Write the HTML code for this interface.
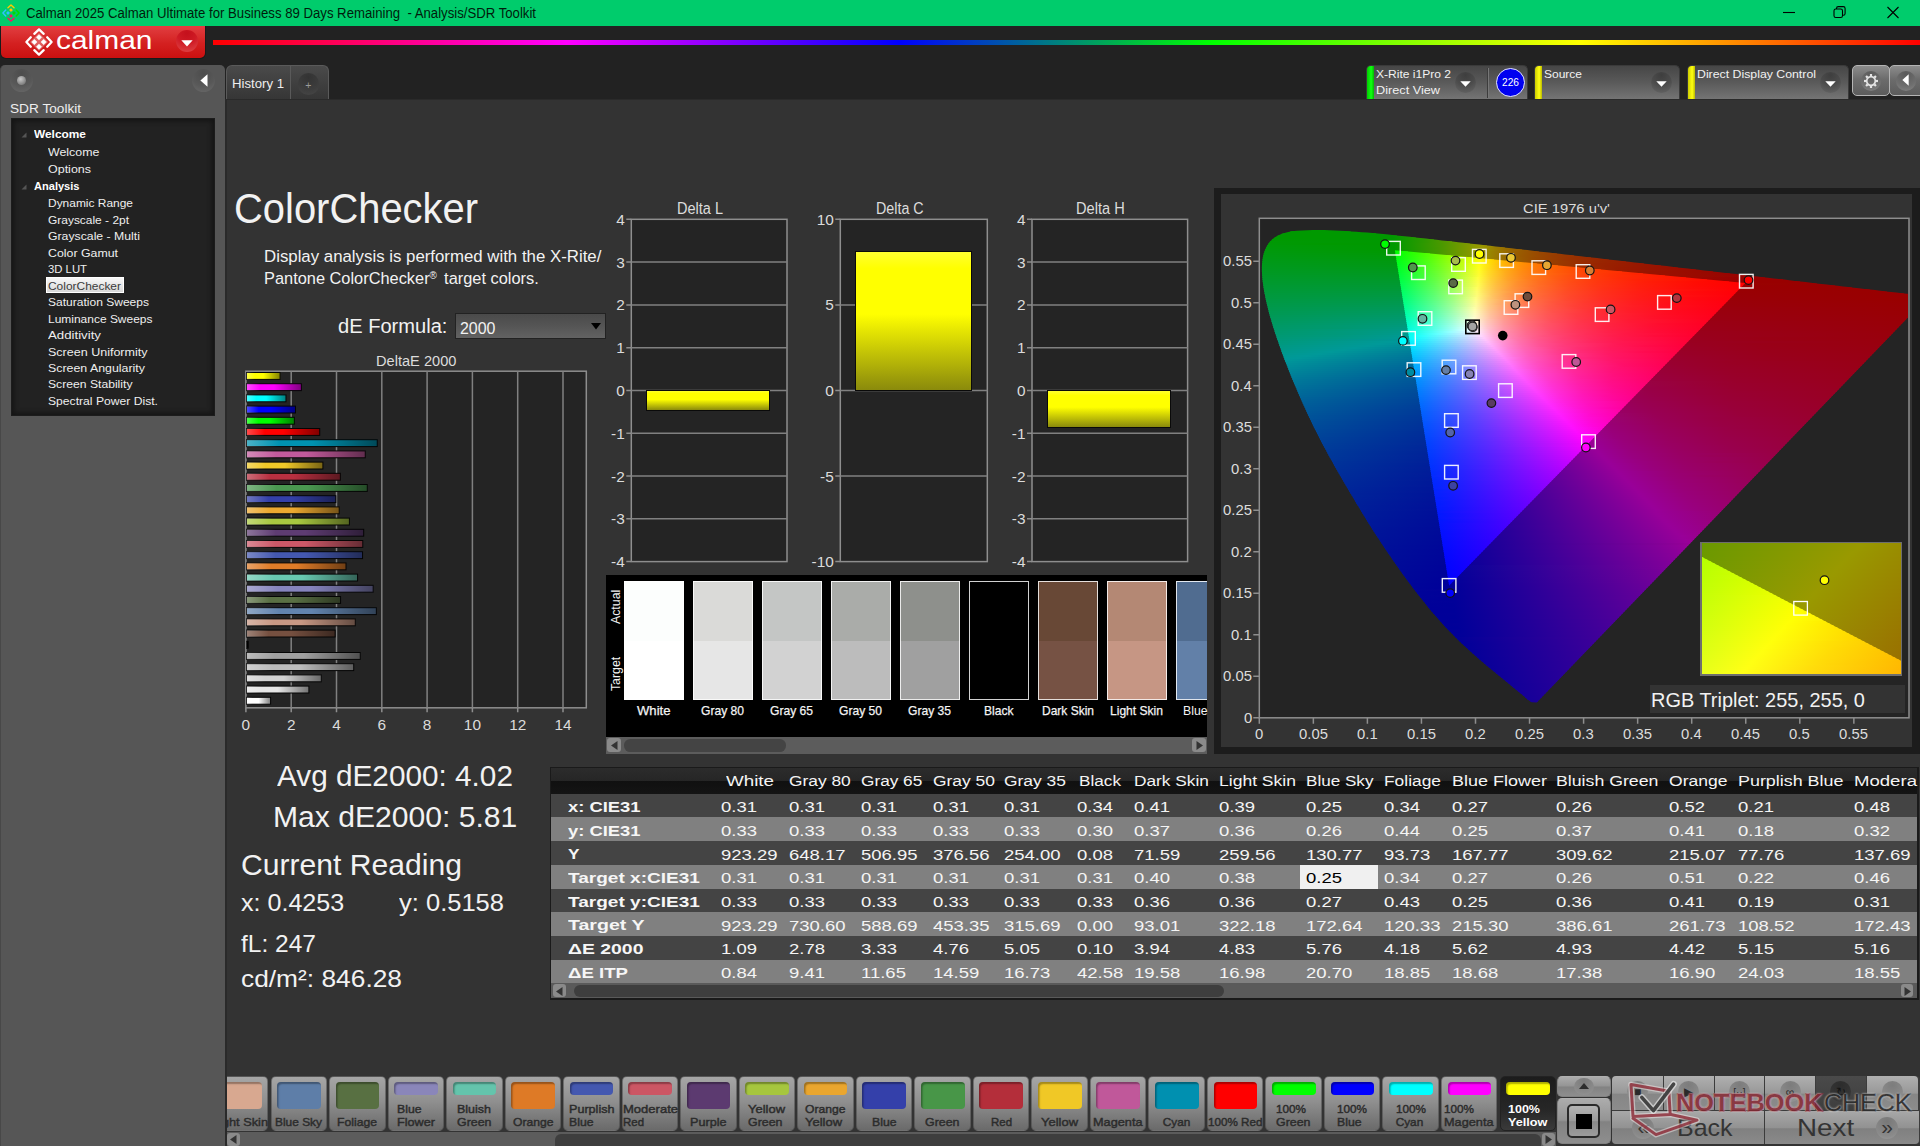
<!DOCTYPE html><html><head><meta charset="utf-8"><title>Calman ColorChecker</title><style>
*{box-sizing:border-box;margin:0;padding:0}
html,body{width:1920px;height:1146px;overflow:hidden;background:#333;}
body{position:relative;font-family:"Liberation Sans",sans-serif;color:#e6e6e6;}
.a{position:absolute}
.t{position:absolute;white-space:pre;transform-origin:0 50%;}
svg{position:absolute;overflow:visible}
#gm{position:absolute;overflow:hidden}
#gm i,#gi i{position:absolute;display:block;height:2.500px}
</style></head><body><div class="a " style="left:0px;top:0px;width:1920px;height:26px;background:#00cc6c"></div>
<svg style="left:-5.50px;top:-3.20px" width="32" height="32" viewBox="-16 -16 32 32"><g transform="scale(0.640)"><g transform="rotate(0)"><path d="M-4.700 -8.200L0 -12.600L4.700 -8.200" fill="none" stroke="#ffc800" stroke-width="2.300" stroke-linecap="round" stroke-linejoin="round"/><path d="M0 -7.400L2.750 -4.650L0 -1.900L-2.750 -4.650z" fill="#ffc800" stroke="#ffc800" stroke-width=".4" stroke-linejoin="round"/></g><g transform="rotate(90)"><path d="M-4.700 -8.200L0 -12.600L4.700 -8.200" fill="none" stroke="#00dc00" stroke-width="2.300" stroke-linecap="round" stroke-linejoin="round"/><path d="M0 -7.400L2.750 -4.650L0 -1.900L-2.750 -4.650z" fill="#00dc00" stroke="#00dc00" stroke-width=".4" stroke-linejoin="round"/></g><g transform="rotate(180)"><path d="M-4.700 -8.200L0 -12.600L4.700 -8.200" fill="none" stroke="#ff1060" stroke-width="2.300" stroke-linecap="round" stroke-linejoin="round"/><path d="M0 -7.400L2.750 -4.650L0 -1.900L-2.750 -4.650z" fill="#ff1060" stroke="#ff1060" stroke-width=".4" stroke-linejoin="round"/></g><g transform="rotate(270)"><path d="M-4.700 -8.200L0 -12.600L4.700 -8.200" fill="none" stroke="#30c0ff" stroke-width="2.300" stroke-linecap="round" stroke-linejoin="round"/><path d="M0 -7.400L2.750 -4.650L0 -1.900L-2.750 -4.650z" fill="#30c0ff" stroke="#30c0ff" stroke-width=".4" stroke-linejoin="round"/></g></g></svg>
<span class="t" style="left:26.00px;top:6.05px;font-size:14px;line-height:14px;color:#001c0c;transform:scaleX(0.9408);">Calman 2025 Calman Ultimate for Business 89 Days Remaining  - Analysis/SDR Toolkit</span>
<svg style="left:1780px;top:0" width="140" height="25" viewBox="0 0 140 25" fill="none" stroke="#000" stroke-width="1.1">
<path d="M3 12.5h12"/><rect x="54" y="9" width="8.5" height="8.5" rx="1.8"/><path d="M56.5 9v-.6a1.8 1.8 0 0 1 1.8-1.8h5a1.8 1.8 0 0 1 1.8 1.8v5a1.8 1.8 0 0 1-1.8 1.8h-.6"/>
<path d="M107.5 7l11 11M118.500 7l-11 11"/></svg>
<div class="a " style="left:0px;top:26px;width:1920px;height:73px;background:#222"></div>
<div class="a " style="left:213px;top:40px;width:1707px;height:5px;background:linear-gradient(90deg,#f00 0,#f0f 354px,#00f 686px,#0f0 999px,#ff0 1367px,#f00 1707px)"></div>
<div class="a " style="left:0px;top:26px;width:206px;height:33px;background:#1a1a1a;border-radius:0 0 6px 6px"></div>
<div class="a " style="left:1px;top:26px;width:204px;height:32px;background:linear-gradient(180deg,#ec363e 0,#e03c3e 1.500px,#d42020 55%,#cb1010 100%);border-radius:0 0 5px 5px"></div>
<svg style="left:22.50px;top:25.80px" width="32" height="32" viewBox="-16 -16 32 32"><g transform="scale(1.000)"><path d="M0 -9L9 0L0 9L-9 0z" fill="#fff" fill-opacity="0.28"/><g transform="rotate(0)"><path d="M-4.700 -8.200L0 -12.600L4.700 -8.200" fill="none" stroke="#fff" stroke-width="2.300" stroke-linecap="round" stroke-linejoin="round"/><path d="M0 -7.400L2.750 -4.650L0 -1.900L-2.750 -4.650z" fill="#fff" stroke="#fff" stroke-width=".4" stroke-linejoin="round"/></g><g transform="rotate(90)"><path d="M-4.700 -8.200L0 -12.600L4.700 -8.200" fill="none" stroke="#fff" stroke-width="2.300" stroke-linecap="round" stroke-linejoin="round"/><path d="M0 -7.400L2.750 -4.650L0 -1.900L-2.750 -4.650z" fill="#fff" stroke="#fff" stroke-width=".4" stroke-linejoin="round"/></g><g transform="rotate(180)"><path d="M-4.700 -8.200L0 -12.600L4.700 -8.200" fill="none" stroke="#fff" stroke-width="2.300" stroke-linecap="round" stroke-linejoin="round"/><path d="M0 -7.400L2.750 -4.650L0 -1.900L-2.750 -4.650z" fill="#fff" stroke="#fff" stroke-width=".4" stroke-linejoin="round"/></g><g transform="rotate(270)"><path d="M-4.700 -8.200L0 -12.600L4.700 -8.200" fill="none" stroke="#fff" stroke-width="2.300" stroke-linecap="round" stroke-linejoin="round"/><path d="M0 -7.400L2.750 -4.650L0 -1.900L-2.750 -4.650z" fill="#fff" stroke="#fff" stroke-width=".4" stroke-linejoin="round"/></g></g></svg>
<span class="t" style="left:56.00px;top:26.89px;font-size:26px;line-height:26px;color:#fff;transform:scaleX(1.1513);">calman</span>
<div class="a " style="left:175.5px;top:30px;width:22px;height:22px;border-radius:50%;background:radial-gradient(circle at 50% 15%,#c4101c 0,#cf1a24 45%,#e04a4a 100%)"></div>
<svg style="left:181px;top:39.500px" width="12" height="7" viewBox="0 0 12 7"><path d="M0.3 0.3h11.400L6 6.500z" fill="#fff"/></svg>
<div class="a " style="left:0px;top:65px;width:224.5px;height:1081px;background:#565656;border-radius:5px 5px 0 0;border-left:1.500px solid #484848"></div>
<div class="a " style="left:9.8px;top:69.1px;width:23px;height:23px;border-radius:50%;background:radial-gradient(circle at 50% 20%,#4c4c4c 0,#585858 55%,#6a6a6a 100%)"></div>
<div class="a " style="left:192px;top:69.1px;width:23px;height:23px;border-radius:50%;background:radial-gradient(circle at 50% 20%,#4c4c4c 0,#585858 55%,#6a6a6a 100%)"></div>
<div class="a " style="left:16.8px;top:75.7px;width:9px;height:9px;border-radius:50%;background:radial-gradient(circle at 40% 35%,#c8c8c8 0,#8a8a8a 60%,#666 100%)"></div>
<svg style="left:199.500px;top:74px" width="8" height="13" viewBox="0 0 8 13"><path d="M7.500 0.300v12.400L0.400 6.500z" fill="#fff"/></svg>
<span class="t" style="left:10.30px;top:101.63px;font-size:13.2px;line-height:13.2px;color:#eee;transform:scaleX(1.0362);">SDR Toolkit</span>
<div class="a " style="left:10.5px;top:118px;width:204.5px;height:297.5px;background:#222;box-shadow:inset 0 0 5px 2px #141414;border:1px solid #1c1c1c"></div>
<span class="t" style="left:33.80px;top:129.31px;font-size:11.8px;line-height:11.8px;color:#fff;font-weight:700;transform:scaleX(1.0079);">Welcome</span>
<svg style="left:20.500px;top:132.3px" width="6" height="6" viewBox="0 0 6 6"><path d="M5.500 0.500v5h-5z" fill="#555"/></svg>
<span class="t" style="left:47.70px;top:147.31px;font-size:11.8px;line-height:11.8px;color:#eee;transform:scaleX(1.0497);">Welcome</span>
<span class="t" style="left:47.70px;top:163.81px;font-size:11.8px;line-height:11.8px;color:#eee;transform:scaleX(1.0574);">Options</span>
<span class="t" style="left:33.80px;top:180.71px;font-size:11.8px;line-height:11.8px;color:#fff;font-weight:700;transform:scaleX(0.9374);">Analysis</span>
<svg style="left:20.500px;top:183.7px" width="6" height="6" viewBox="0 0 6 6"><path d="M5.500 0.500v5h-5z" fill="#555"/></svg>
<span class="t" style="left:47.70px;top:198.31px;font-size:11.8px;line-height:11.8px;color:#eee;transform:scaleX(1.0125);">Dynamic Range</span>
<span class="t" style="left:47.70px;top:214.81px;font-size:11.8px;line-height:11.8px;color:#eee;transform:scaleX(1.0124);">Grayscale - 2pt</span>
<span class="t" style="left:47.70px;top:231.31px;font-size:11.8px;line-height:11.8px;color:#eee;transform:scaleX(1.0393);">Grayscale - Multi</span>
<span class="t" style="left:47.70px;top:247.81px;font-size:11.8px;line-height:11.8px;color:#eee;transform:scaleX(1.0465);">Color Gamut</span>
<span class="t" style="left:47.70px;top:264.31px;font-size:11.8px;line-height:11.8px;color:#eee;transform:scaleX(0.9593);">3D LUT</span>
<div class="a " style="left:46.2px;top:277.2px;width:77.6px;height:16.2px;background:linear-gradient(180deg,#f8f8f8,#d8d8d8);border:1px solid #fff"></div>
<span class="t" style="left:47.70px;top:280.81px;font-size:11.8px;line-height:11.8px;color:#3c3c3c;transform:scaleX(1.0119);">ColorChecker</span>
<span class="t" style="left:47.70px;top:297.31px;font-size:11.8px;line-height:11.8px;color:#eee;transform:scaleX(1.0197);">Saturation Sweeps</span>
<span class="t" style="left:47.70px;top:313.81px;font-size:11.8px;line-height:11.8px;color:#eee;transform:scaleX(1.0147);">Luminance Sweeps</span>
<span class="t" style="left:47.70px;top:330.31px;font-size:11.8px;line-height:11.8px;color:#eee;transform:scaleX(1.1224);">Additivity</span>
<span class="t" style="left:47.70px;top:346.81px;font-size:11.8px;line-height:11.8px;color:#eee;transform:scaleX(1.0611);">Screen Uniformity</span>
<span class="t" style="left:47.70px;top:362.61px;font-size:11.8px;line-height:11.8px;color:#eee;transform:scaleX(1.0488);">Screen Angularity</span>
<span class="t" style="left:47.70px;top:379.01px;font-size:11.8px;line-height:11.8px;color:#eee;transform:scaleX(1.0307);">Screen Stability</span>
<span class="t" style="left:47.70px;top:395.51px;font-size:11.8px;line-height:11.8px;color:#eee;transform:scaleX(1.0291);">Spectral Power Dist.</span>
<div class="a " style="left:225.5px;top:65px;width:103px;height:34px;background:linear-gradient(180deg,#4a4a4a 0,#363636 100%);border-radius:6px 6px 0 0;border:1px solid #5a5a5a;border-bottom:none"></div>
<div class="a " style="left:290px;top:66px;width:1px;height:33px;background:#5a5a5a"></div>
<span class="t" style="left:232.30px;top:77.09px;font-size:13.6px;line-height:13.6px;color:#eee;transform:scaleX(0.9691);">History 1</span>
<div class="a " style="left:297.6px;top:73.4px;width:21.2px;height:21.2px;border-radius:50%;background:radial-gradient(circle at 50% 20%,#333 0,#3d3d3d 60%,#484848 100%)"></div>
<span class="t" style="left:305.23px;top:79.71px;font-size:10.5px;line-height:10.5px;color:#9a9a9a;">+</span>
<div class="a " style="left:225px;top:99px;width:1695px;height:1047px;background:#333;border-left:2px solid #2a2a2a;border-top:1px solid #2a2a2a"></div>
<div class="a " style="left:1366px;top:65px;width:161.5px;height:34px;background:linear-gradient(180deg,#464646 0,#5a5a5a 50%,#747474 100%);border-radius:5px 5px 0 0;border:1px solid #3a3a3a;border-bottom:none;overflow:hidden"><div class="a" style="left:0;top:0;width:6.500px;height:34px;background:linear-gradient(90deg,#0c0,#1f1 60%,#0b0)"></div></div>
<div class="a " style="left:1534px;top:65px;width:146px;height:34px;background:linear-gradient(180deg,#464646 0,#5a5a5a 50%,#747474 100%);border-radius:5px 5px 0 0;border:1px solid #3a3a3a;border-bottom:none;overflow:hidden"><div class="a" style="left:0;top:0;width:6.500px;height:34px;background:linear-gradient(90deg,#cc0,#ff1 60%,#bb0)"></div></div>
<div class="a " style="left:1687px;top:65px;width:161.5px;height:34px;background:linear-gradient(180deg,#464646 0,#5a5a5a 50%,#747474 100%);border-radius:5px 5px 0 0;border:1px solid #3a3a3a;border-bottom:none;overflow:hidden"><div class="a" style="left:0;top:0;width:6.500px;height:34px;background:linear-gradient(90deg,#cc0,#ff1 60%,#bb0)"></div></div>
<span class="t" style="left:1375.50px;top:68.71px;font-size:11.8px;line-height:11.8px;color:#f2f2f2;transform:scaleX(1.0211);">X-Rite i1Pro 2</span>
<span class="t" style="left:1375.50px;top:85.01px;font-size:11.8px;line-height:11.8px;color:#f2f2f2;transform:scaleX(1.0764);">Direct View</span>
<span class="t" style="left:1543.50px;top:68.71px;font-size:11.8px;line-height:11.8px;color:#f2f2f2;transform:scaleX(1.0163);">Source</span>
<span class="t" style="left:1696.50px;top:68.71px;font-size:11.8px;line-height:11.8px;color:#f2f2f2;transform:scaleX(1.0429);">Direct Display Control</span>
<div class="a " style="left:1454.5px;top:72px;width:21px;height:21px;border-radius:50%;background:radial-gradient(circle at 50% 15%,#3e3e3e 0,#4c4c4c 50%,#686868 100%)"></div>
<svg style="left:1459.5px;top:80.5px" width="11" height="6" viewBox="0 0 11 6"><path d="M0.300 0.200h10.400L5.500 5.800z" fill="#fff"/></svg>
<div class="a " style="left:1651px;top:72px;width:21px;height:21px;border-radius:50%;background:radial-gradient(circle at 50% 15%,#3e3e3e 0,#4c4c4c 50%,#686868 100%)"></div>
<svg style="left:1656px;top:80.5px" width="11" height="6" viewBox="0 0 11 6"><path d="M0.300 0.200h10.400L5.500 5.800z" fill="#fff"/></svg>
<div class="a " style="left:1819.5px;top:72px;width:21px;height:21px;border-radius:50%;background:radial-gradient(circle at 50% 15%,#3e3e3e 0,#4c4c4c 50%,#686868 100%)"></div>
<svg style="left:1824.5px;top:80.5px" width="11" height="6" viewBox="0 0 11 6"><path d="M0.300 0.200h10.400L5.500 5.800z" fill="#fff"/></svg>
<div class="a " style="left:1486.5px;top:68px;width:1px;height:30px;background:#3c3c3c"></div>
<div class="a " style="left:1487.5px;top:68px;width:1px;height:30px;background:#777"></div>
<div class="a " style="left:1495.5px;top:67.5px;width:29.5px;height:29.5px;border-radius:50%;background:#0000f0;border:1.500px solid #e8e8ff"></div>
<span class="t" style="left:1501.70px;top:77.31px;font-size:10.5px;line-height:10.5px;color:#fff;transform:scaleX(0.9704);">226</span>
<div class="a " style="left:1851.5px;top:65px;width:38px;height:31px;background:linear-gradient(180deg,#8c8c8c 0,#6c6c6c 45%,#5c5c5c 100%);border-radius:5px;border:1.500px solid #b4b4b4"></div>
<div class="a " style="left:1889px;top:65px;width:38px;height:31px;background:linear-gradient(180deg,#8c8c8c 0,#6c6c6c 45%,#5c5c5c 100%);border-radius:5px;border:1.500px solid #b4b4b4"></div>
<div class="a " style="left:1860.5px;top:70.5px;width:20px;height:20px;border-radius:50%;background:radial-gradient(circle at 50% 15%,#5a5a5a,#6e6e6e 60%,#858585)"></div>
<div class="a " style="left:1895.5px;top:70.5px;width:20px;height:20px;border-radius:50%;background:radial-gradient(circle at 50% 15%,#5a5a5a,#6e6e6e 60%,#858585)"></div>
<svg style="left:1862.500px;top:72.500px" width="16" height="16" viewBox="-8 -8 16 16"><g fill="none" stroke="#e4e4e4"><circle r="4.300" stroke-width="1.700"/><g stroke-width="2.200"><path d="M0 -4.800V-7" transform="rotate(0)"/><path d="M0 -4.800V-7" transform="rotate(45)"/><path d="M0 -4.800V-7" transform="rotate(90)"/><path d="M0 -4.800V-7" transform="rotate(135)"/><path d="M0 -4.800V-7" transform="rotate(180)"/><path d="M0 -4.800V-7" transform="rotate(225)"/><path d="M0 -4.800V-7" transform="rotate(270)"/><path d="M0 -4.800V-7" transform="rotate(315)"/></g></g></svg>
<svg style="left:1902px;top:74px" width="7" height="12" viewBox="0 0 7 12"><path d="M6.700 0.300v11.400L0.300 6z" fill="#fff"/></svg>
<span class="t" style="left:233.50px;top:188.25px;font-size:42px;line-height:42px;color:#f2f2f2;transform:scaleX(0.9503);">ColorChecker</span>
<span class="t" style="left:263.60px;top:247.77px;font-size:17.4px;line-height:17.4px;color:#f2f2f2;transform:scaleX(0.9668);">Display analysis is performed with the X-Rite/</span>
<span class="t" style="left:263.60px;top:270.27px;font-size:17.4px;line-height:17.4px;color:#f2f2f2;transform:scaleX(0.9413);">Pantone ColorChecker<span style="font-size:10.500px;position:relative;top:-5.500px;letter-spacing:2.800px">®</span> target colors.</span>
<span class="t" style="left:337.50px;top:316.88px;font-size:19.4px;line-height:19.4px;color:#f2f2f2;transform:scaleX(1.0363);">dE Formula:</span>
<div class="a " style="left:455px;top:312.6px;width:150.5px;height:26px;background:linear-gradient(180deg,#4a4a4a 0,#555 50%,#626262 100%);border:1px solid #222"></div>
<span class="t" style="left:460.00px;top:320.12px;font-size:16.4px;line-height:16.4px;color:#f2f2f2;transform:scaleX(0.9730);">2000</span>
<svg style="left:590.500px;top:323.200px" width="10" height="6.500" viewBox="0 0 10 6.500"><path d="M0 0h10L5 6.500z" fill="#000"/></svg>
<span class="t" style="left:376.25px;top:353.26px;font-size:15.4px;line-height:15.4px;color:#dcdcdc;transform:scaleX(0.9497);">DeltaE 2000</span>
<svg style="left:0;top:0" width="1920" height="1146" viewBox="0 0 1920 1146" fill="none" stroke="#8e8e8e" stroke-width="1.5"><rect x="245.90" y="371.20" width="340.40" height="336.60" fill="#242424"/><path d="M291.20 371.20V707.80M336.50 371.20V707.80M381.80 371.20V707.80M427.10 371.20V707.80M472.40 371.20V707.80M517.70 371.20V707.80M563.00 371.20V707.80" stroke="#808080"/><path d="M245.90 707.80v4.50M291.20 707.80v4.50M336.50 707.80v4.50M381.80 707.80v4.50M427.10 707.80v4.50M472.40 707.80v4.50M517.70 707.80v4.50M563.00 707.80v4.50"/></svg>
<span class="t" style="left:241.62px;top:717.46px;font-size:15.4px;line-height:15.4px;color:#dcdcdc;">0</span>
<span class="t" style="left:286.92px;top:717.46px;font-size:15.4px;line-height:15.4px;color:#dcdcdc;">2</span>
<span class="t" style="left:332.22px;top:717.46px;font-size:15.4px;line-height:15.4px;color:#dcdcdc;">4</span>
<span class="t" style="left:377.52px;top:717.46px;font-size:15.4px;line-height:15.4px;color:#dcdcdc;">6</span>
<span class="t" style="left:422.82px;top:717.46px;font-size:15.4px;line-height:15.4px;color:#dcdcdc;">8</span>
<span class="t" style="left:463.83px;top:717.46px;font-size:15.4px;line-height:15.4px;color:#dcdcdc;">10</span>
<span class="t" style="left:509.13px;top:717.46px;font-size:15.4px;line-height:15.4px;color:#dcdcdc;">12</span>
<span class="t" style="left:554.43px;top:717.46px;font-size:15.4px;line-height:15.4px;color:#dcdcdc;">14</span>
<svg style="left:0;top:0" width="1920" height="1146" viewBox="0 0 1920 1146"><defs><linearGradient id="bg" x1="0" x2="1" y1="0" y2="0"><stop offset="0" stop-color="#fff" stop-opacity=".3"/><stop offset=".25" stop-color="#fff" stop-opacity="0"/><stop offset=".5" stop-color="#000" stop-opacity="0"/><stop offset="1" stop-color="#000" stop-opacity=".5"/></linearGradient></defs><rect x="246.50" y="372.50" width="33.60" height="6.900" fill="#ffff00" stroke="#050505" stroke-width="1"/><rect x="246.50" y="372.50" width="33.60" height="6.900" fill="url(#bg)"/><rect x="246.50" y="383.70" width="54.89" height="6.900" fill="#ff00ff" stroke="#050505" stroke-width="1"/><rect x="246.50" y="383.70" width="54.89" height="6.900" fill="url(#bg)"/><rect x="246.50" y="394.90" width="39.49" height="6.900" fill="#00ffff" stroke="#050505" stroke-width="1"/><rect x="246.50" y="394.90" width="39.49" height="6.900" fill="url(#bg)"/><rect x="246.50" y="406.10" width="49.00" height="6.900" fill="#0000ff" stroke="#050505" stroke-width="1"/><rect x="246.50" y="406.10" width="49.00" height="6.900" fill="url(#bg)"/><rect x="246.50" y="417.30" width="47.87" height="6.900" fill="#00ff00" stroke="#050505" stroke-width="1"/><rect x="246.50" y="417.30" width="47.87" height="6.900" fill="url(#bg)"/><rect x="246.50" y="428.50" width="73.24" height="6.900" fill="#ff0000" stroke="#050505" stroke-width="1"/><rect x="246.50" y="428.50" width="73.24" height="6.900" fill="url(#bg)"/><rect x="246.50" y="439.70" width="130.77" height="6.900" fill="#0092b0" stroke="#050505" stroke-width="1"/><rect x="246.50" y="439.70" width="130.77" height="6.900" fill="url(#bg)"/><rect x="246.50" y="450.90" width="118.77" height="6.900" fill="#c25a9c" stroke="#050505" stroke-width="1"/><rect x="246.50" y="450.90" width="118.77" height="6.900" fill="url(#bg)"/><rect x="246.50" y="462.10" width="76.41" height="6.900" fill="#f0c828" stroke="#050505" stroke-width="1"/><rect x="246.50" y="462.10" width="76.41" height="6.900" fill="url(#bg)"/><rect x="246.50" y="473.30" width="93.85" height="6.900" fill="#b83040" stroke="#050505" stroke-width="1"/><rect x="246.50" y="473.30" width="93.85" height="6.900" fill="url(#bg)"/><rect x="246.50" y="484.50" width="120.80" height="6.900" fill="#4a9850" stroke="#050505" stroke-width="1"/><rect x="246.50" y="484.50" width="120.80" height="6.900" fill="url(#bg)"/><rect x="246.50" y="495.70" width="89.32" height="6.900" fill="#3440a8" stroke="#050505" stroke-width="1"/><rect x="246.50" y="495.70" width="89.32" height="6.900" fill="url(#bg)"/><rect x="246.50" y="506.90" width="92.72" height="6.900" fill="#eca830" stroke="#050505" stroke-width="1"/><rect x="246.50" y="506.90" width="92.72" height="6.900" fill="url(#bg)"/><rect x="246.50" y="518.10" width="102.91" height="6.900" fill="#a8c840" stroke="#050505" stroke-width="1"/><rect x="246.50" y="518.10" width="102.91" height="6.900" fill="url(#bg)"/><rect x="246.50" y="529.30" width="117.18" height="6.900" fill="#5e3c72" stroke="#050505" stroke-width="1"/><rect x="246.50" y="529.30" width="117.18" height="6.900" fill="url(#bg)"/><rect x="246.50" y="540.50" width="116.27" height="6.900" fill="#cc5868" stroke="#050505" stroke-width="1"/><rect x="246.50" y="540.50" width="116.27" height="6.900" fill="url(#bg)"/><rect x="246.50" y="551.70" width="116.05" height="6.900" fill="#4458b0" stroke="#050505" stroke-width="1"/><rect x="246.50" y="551.70" width="116.05" height="6.900" fill="url(#bg)"/><rect x="246.50" y="562.90" width="99.51" height="6.900" fill="#e07c28" stroke="#050505" stroke-width="1"/><rect x="246.50" y="562.90" width="99.51" height="6.900" fill="url(#bg)"/><rect x="246.50" y="574.10" width="111.06" height="6.900" fill="#68c8b0" stroke="#050505" stroke-width="1"/><rect x="246.50" y="574.10" width="111.06" height="6.900" fill="url(#bg)"/><rect x="246.50" y="585.30" width="126.69" height="6.900" fill="#8684be" stroke="#050505" stroke-width="1"/><rect x="246.50" y="585.30" width="126.69" height="6.900" fill="url(#bg)"/><rect x="246.50" y="596.50" width="94.08" height="6.900" fill="#5a7044" stroke="#050505" stroke-width="1"/><rect x="246.50" y="596.50" width="94.08" height="6.900" fill="url(#bg)"/><rect x="246.50" y="607.70" width="129.86" height="6.900" fill="#6284ae" stroke="#050505" stroke-width="1"/><rect x="246.50" y="607.70" width="129.86" height="6.900" fill="url(#bg)"/><rect x="246.50" y="618.90" width="108.80" height="6.900" fill="#c89884" stroke="#050505" stroke-width="1"/><rect x="246.50" y="618.90" width="108.80" height="6.900" fill="url(#bg)"/><rect x="246.50" y="630.10" width="88.64" height="6.900" fill="#765040" stroke="#050505" stroke-width="1"/><rect x="246.50" y="630.10" width="88.64" height="6.900" fill="url(#bg)"/><rect x="246.50" y="641.30" width="1.67" height="6.900" fill="#000000" stroke="#050505" stroke-width="1"/><rect x="246.50" y="641.30" width="1.67" height="6.900" fill="url(#bg)"/><rect x="246.50" y="652.50" width="113.78" height="6.900" fill="#a0a0a0" stroke="#050505" stroke-width="1"/><rect x="246.50" y="652.50" width="113.78" height="6.900" fill="url(#bg)"/><rect x="246.50" y="663.70" width="107.21" height="6.900" fill="#bcbcbc" stroke="#050505" stroke-width="1"/><rect x="246.50" y="663.70" width="107.21" height="6.900" fill="url(#bg)"/><rect x="246.50" y="674.90" width="74.82" height="6.900" fill="#d2d2d2" stroke="#050505" stroke-width="1"/><rect x="246.50" y="674.90" width="74.82" height="6.900" fill="url(#bg)"/><rect x="246.50" y="686.10" width="62.37" height="6.900" fill="#e6e6e6" stroke="#050505" stroke-width="1"/><rect x="246.50" y="686.10" width="62.37" height="6.900" fill="url(#bg)"/><rect x="246.50" y="697.30" width="24.09" height="6.900" fill="#ffffff" stroke="#050505" stroke-width="1"/><rect x="246.50" y="697.30" width="24.09" height="6.900" fill="url(#bg)"/></svg>
<span class="t" style="left:676.60px;top:201.09px;font-size:15.6px;line-height:15.6px;color:#dcdcdc;transform:scaleX(0.9306);">Delta L</span>
<svg style="left:0;top:0" width="1920" height="1146" viewBox="0 0 1920 1146" fill="none" stroke="#8e8e8e" stroke-width="1.5"><rect x="631.30" y="219.30" width="155.70" height="342.30" fill="#242424"/><path d="M631.30 262.09H787.00M631.30 304.88H787.00M631.30 347.66H787.00M631.30 390.45H787.00M631.30 433.24H787.00M631.30 476.03H787.00M631.30 518.81H787.00" stroke="#808080"/><path d="M631.30 219.30h-5.00M631.30 262.09h-5.00M631.30 304.88h-5.00M631.30 347.66h-5.00M631.30 390.45h-5.00M631.30 433.24h-5.00M631.30 476.03h-5.00M631.30 518.81h-5.00M631.30 561.60h-5.00"/></svg>
<span class="t" style="left:616.23px;top:211.86px;font-size:15.4px;line-height:15.4px;color:#dcdcdc;">4</span>
<span class="t" style="left:616.23px;top:254.65px;font-size:15.4px;line-height:15.4px;color:#dcdcdc;">3</span>
<span class="t" style="left:616.23px;top:297.44px;font-size:15.4px;line-height:15.4px;color:#dcdcdc;">2</span>
<span class="t" style="left:616.23px;top:340.23px;font-size:15.4px;line-height:15.4px;color:#dcdcdc;">1</span>
<span class="t" style="left:616.23px;top:383.01px;font-size:15.4px;line-height:15.4px;color:#dcdcdc;">0</span>
<span class="t" style="left:611.11px;top:425.80px;font-size:15.4px;line-height:15.4px;color:#dcdcdc;">-1</span>
<span class="t" style="left:611.11px;top:468.59px;font-size:15.4px;line-height:15.4px;color:#dcdcdc;">-2</span>
<span class="t" style="left:611.11px;top:511.38px;font-size:15.4px;line-height:15.4px;color:#dcdcdc;">-3</span>
<span class="t" style="left:611.11px;top:554.16px;font-size:15.4px;line-height:15.4px;color:#dcdcdc;">-4</span>
<div class="a " style="left:646px;top:390.2px;width:123.8px;height:20.8px;background:linear-gradient(180deg,#ffff30 0,#ffff00 12%,#ffff00 45%,#8a8a0c 100%);border:1.200px solid #0a0a0a"></div>
<span class="t" style="left:876.35px;top:201.09px;font-size:15.6px;line-height:15.6px;color:#dcdcdc;transform:scaleX(0.9170);">Delta C</span>
<svg style="left:0;top:0" width="1920" height="1146" viewBox="0 0 1920 1146" fill="none" stroke="#8e8e8e" stroke-width="1.5"><rect x="840.30" y="219.30" width="147.00" height="342.30" fill="#242424"/><path d="M840.30 304.88H987.30M840.30 390.45H987.30M840.30 476.03H987.30" stroke="#808080"/><path d="M840.30 219.30h-5.00M840.30 304.88h-5.00M840.30 390.45h-5.00M840.30 476.03h-5.00M840.30 561.60h-5.00"/></svg>
<span class="t" style="left:816.67px;top:211.86px;font-size:15.4px;line-height:15.4px;color:#dcdcdc;">10</span>
<span class="t" style="left:825.23px;top:297.44px;font-size:15.4px;line-height:15.4px;color:#dcdcdc;">5</span>
<span class="t" style="left:825.23px;top:383.01px;font-size:15.4px;line-height:15.4px;color:#dcdcdc;">0</span>
<span class="t" style="left:820.11px;top:468.59px;font-size:15.4px;line-height:15.4px;color:#dcdcdc;">-5</span>
<span class="t" style="left:811.54px;top:554.16px;font-size:15.4px;line-height:15.4px;color:#dcdcdc;">-10</span>
<div class="a " style="left:855.2px;top:250.8px;width:116.8px;height:140.5px;background:linear-gradient(180deg,#ffff30 0,#ffff00 12%,#ffff00 45%,#8a8a0c 100%);border:1.200px solid #0a0a0a"></div>
<span class="t" style="left:1075.55px;top:201.09px;font-size:15.6px;line-height:15.6px;color:#dcdcdc;transform:scaleX(0.9362);">Delta H</span>
<svg style="left:0;top:0" width="1920" height="1146" viewBox="0 0 1920 1146" fill="none" stroke="#8e8e8e" stroke-width="1.5"><rect x="1032.00" y="219.30" width="155.60" height="342.30" fill="#242424"/><path d="M1032.00 262.09H1187.60M1032.00 304.88H1187.60M1032.00 347.66H1187.60M1032.00 390.45H1187.60M1032.00 433.24H1187.60M1032.00 476.03H1187.60M1032.00 518.81H1187.60" stroke="#808080"/><path d="M1032.00 219.30h-5.00M1032.00 262.09h-5.00M1032.00 304.88h-5.00M1032.00 347.66h-5.00M1032.00 390.45h-5.00M1032.00 433.24h-5.00M1032.00 476.03h-5.00M1032.00 518.81h-5.00M1032.00 561.60h-5.00"/></svg>
<span class="t" style="left:1016.93px;top:211.86px;font-size:15.4px;line-height:15.4px;color:#dcdcdc;">4</span>
<span class="t" style="left:1016.93px;top:254.65px;font-size:15.4px;line-height:15.4px;color:#dcdcdc;">3</span>
<span class="t" style="left:1016.93px;top:297.44px;font-size:15.4px;line-height:15.4px;color:#dcdcdc;">2</span>
<span class="t" style="left:1016.93px;top:340.23px;font-size:15.4px;line-height:15.4px;color:#dcdcdc;">1</span>
<span class="t" style="left:1016.93px;top:383.01px;font-size:15.4px;line-height:15.4px;color:#dcdcdc;">0</span>
<span class="t" style="left:1011.81px;top:425.80px;font-size:15.4px;line-height:15.4px;color:#dcdcdc;">-1</span>
<span class="t" style="left:1011.81px;top:468.59px;font-size:15.4px;line-height:15.4px;color:#dcdcdc;">-2</span>
<span class="t" style="left:1011.81px;top:511.38px;font-size:15.4px;line-height:15.4px;color:#dcdcdc;">-3</span>
<span class="t" style="left:1011.81px;top:554.16px;font-size:15.4px;line-height:15.4px;color:#dcdcdc;">-4</span>
<div class="a " style="left:1046.6px;top:390.2px;width:124px;height:38px;background:linear-gradient(180deg,#ffff30 0,#ffff00 12%,#ffff00 45%,#8a8a0c 100%);border:1.200px solid #0a0a0a"></div>
<div class="a " style="left:605.8px;top:574.8px;width:601.4px;height:179.4px;background:#000"></div>
<div class="a " style="left:624px;top:580.6px;width:59.5px;height:119.4px;background:linear-gradient(180deg,#fcfefd 0,#fcfefd 50.2%,#ffffff 50.2%,#ffffff 100%);border:1.200px solid rgba(255,255,255,.82)"></div>
<span class="t" style="left:636.85px;top:704.24px;font-size:13.3px;line-height:13.3px;color:#f4f4f4;transform:scaleX(0.9854);-webkit-text-stroke:.25px #f4f4f4;">White</span>
<div class="a " style="left:693px;top:580.6px;width:59.5px;height:119.4px;background:linear-gradient(180deg,#dadad8 0,#dadad8 50.2%,#e6e6e6 50.2%,#e6e6e6 100%);border:1.200px solid rgba(255,255,255,.82)"></div>
<span class="t" style="left:701.10px;top:704.24px;font-size:13.3px;line-height:13.3px;color:#f4f4f4;transform:scaleX(0.9089);-webkit-text-stroke:.25px #f4f4f4;">Gray 80</span>
<div class="a " style="left:762px;top:580.6px;width:59.5px;height:119.4px;background:linear-gradient(180deg,#c4c6c5 0,#c4c6c5 50.2%,#d2d2d2 50.2%,#d2d2d2 100%);border:1.200px solid rgba(255,255,255,.82)"></div>
<span class="t" style="left:770.10px;top:704.24px;font-size:13.3px;line-height:13.3px;color:#f4f4f4;transform:scaleX(0.9089);-webkit-text-stroke:.25px #f4f4f4;">Gray 65</span>
<div class="a " style="left:831px;top:580.6px;width:59.5px;height:119.4px;background:linear-gradient(180deg,#aaaca9 0,#aaaca9 50.2%,#bcbcbc 50.2%,#bcbcbc 100%);border:1.200px solid rgba(255,255,255,.82)"></div>
<span class="t" style="left:839.10px;top:704.24px;font-size:13.3px;line-height:13.3px;color:#f4f4f4;transform:scaleX(0.9089);-webkit-text-stroke:.25px #f4f4f4;">Gray 50</span>
<div class="a " style="left:900px;top:580.6px;width:59.5px;height:119.4px;background:linear-gradient(180deg,#8e908c 0,#8e908c 50.2%,#a0a0a0 50.2%,#a0a0a0 100%);border:1.200px solid rgba(255,255,255,.82)"></div>
<span class="t" style="left:908.10px;top:704.24px;font-size:13.3px;line-height:13.3px;color:#f4f4f4;transform:scaleX(0.9089);-webkit-text-stroke:.25px #f4f4f4;">Gray 35</span>
<div class="a " style="left:969px;top:580.6px;width:59.5px;height:119.4px;background:linear-gradient(180deg,#000 0,#000 50.2%,#000 50.2%,#000 100%);border:1.200px solid rgba(255,255,255,.82)"></div>
<span class="t" style="left:983.85px;top:704.24px;font-size:13.3px;line-height:13.3px;color:#f4f4f4;transform:scaleX(0.9070);-webkit-text-stroke:.25px #f4f4f4;">Black</span>
<div class="a " style="left:1038px;top:580.6px;width:59.5px;height:119.4px;background:linear-gradient(180deg,#684836 0,#684836 50.2%,#765244 50.2%,#765244 100%);border:1.200px solid rgba(255,255,255,.82)"></div>
<span class="t" style="left:1041.60px;top:704.24px;font-size:13.3px;line-height:13.3px;color:#f4f4f4;transform:scaleX(0.9020);-webkit-text-stroke:.25px #f4f4f4;">Dark Skin</span>
<div class="a " style="left:1107px;top:580.6px;width:59.5px;height:119.4px;background:linear-gradient(180deg,#b48874 0,#b48874 50.2%,#c69684 50.2%,#c69684 100%);border:1.200px solid rgba(255,255,255,.82)"></div>
<span class="t" style="left:1110.10px;top:704.24px;font-size:13.3px;line-height:13.3px;color:#f4f4f4;transform:scaleX(0.9074);-webkit-text-stroke:.25px #f4f4f4;">Light Skin</span>
<div class="a " style="left:1176px;top:580.6px;width:31px;height:119.4px;background:linear-gradient(180deg,#506c90 0,#506c90 50.2%,#6280a8 50.2%,#6280a8 100%);border:1.200px solid rgba(255,255,255,.82);border-right:none"></div>
<span class="t" style="left:1182.60px;top:704.24px;font-size:13.3px;line-height:13.3px;color:#f4f4f4;transform:scaleX(0.9203);">Blue</span>
<span class="t" style="left:603.500px;top:604.500px;font-size:13.300px;line-height:14px;color:#f4f4f4;transform:rotate(-90deg) scaleX(.93);transform-origin:50% 50%;width:26px;margin-left:-1px">Actual</span>
<span class="t" style="left:603.500px;top:672px;font-size:13.300px;line-height:14px;color:#f4f4f4;transform:rotate(-90deg) scaleX(.93);transform-origin:50% 50%;width:26px;margin-left:-1px">Target</span>
<div class="a " style="left:605.8px;top:736.6px;width:601.4px;height:17.6px;background:#5c5c5c"></div>
<div class="a " style="left:607px;top:738.3px;width:14px;height:14px;background:#8a8a8a;border-radius:3px"></div>
<div class="a " style="left:1192px;top:738.3px;width:14px;height:14px;background:#8a8a8a;border-radius:3px"></div>
<svg style="left:610.500px;top:741px" width="7" height="9" viewBox="0 0 7 9"><path d="M6.500 0v9L0 4.500z" fill="#333"/></svg>
<svg style="left:1196px;top:741px" width="7" height="9" viewBox="0 0 7 9"><path d="M0.500 0v9L7 4.500z" fill="#333"/></svg>
<div class="a " style="left:624px;top:739px;width:161.5px;height:12.6px;background:#444;border-radius:6.300px"></div>
<div class="a " style="left:1214.4px;top:187.5px;width:705.6px;height:566.5px;background:#1c1c1c"></div>
<div class="a " style="left:1221px;top:194px;width:690.5px;height:553px;background:#333"></div>
<span class="t" style="left:1522.50px;top:202.03px;font-size:13.2px;line-height:13.2px;color:#dcdcdc;transform:scaleX(1.1199);">CIE 1976 u&#x27;v&#x27;</span>
<svg style="left:0;top:0" width="1920" height="1146" viewBox="0 0 1920 1146" fill="none" stroke="#8e8e8e" stroke-width="1.5"><rect x="1259.30" y="218.30" width="649.70" height="499.50" fill="#242424"/><path d="M1259.30 717.80v6.00M1313.35 717.80v6.00M1367.40 717.80v6.00M1421.45 717.80v6.00M1475.50 717.80v6.00M1529.55 717.80v6.00M1583.60 717.80v6.00M1637.65 717.80v6.00M1691.70 717.80v6.00M1745.75 717.80v6.00M1799.80 717.80v6.00M1853.85 717.80v6.00M1259.30 717.80h-6.00M1259.30 676.30h-6.00M1259.30 634.80h-6.00M1259.30 593.30h-6.00M1259.30 551.80h-6.00M1259.30 510.30h-6.00M1259.30 468.80h-6.00M1259.30 427.30h-6.00M1259.30 385.80h-6.00M1259.30 344.30h-6.00M1259.30 302.80h-6.00M1259.30 261.30h-6.00"/></svg>
<span class="t" style="left:1254.97px;top:726.36px;font-size:15.4px;line-height:15.4px;color:#dcdcdc;transform:scaleX(0.9650);">0</span>
<span class="t" style="left:1243.83px;top:709.71px;font-size:15.4px;line-height:15.4px;color:#dcdcdc;transform:scaleX(0.9650);">0</span>
<span class="t" style="left:1298.69px;top:726.36px;font-size:15.4px;line-height:15.4px;color:#dcdcdc;transform:scaleX(0.9650);">0.05</span>
<span class="t" style="left:1223.18px;top:668.21px;font-size:15.4px;line-height:15.4px;color:#dcdcdc;transform:scaleX(0.9650);">0.05</span>
<span class="t" style="left:1356.87px;top:726.36px;font-size:15.4px;line-height:15.4px;color:#dcdcdc;transform:scaleX(0.9650);">0.1</span>
<span class="t" style="left:1231.44px;top:626.71px;font-size:15.4px;line-height:15.4px;color:#dcdcdc;transform:scaleX(0.9650);">0.1</span>
<span class="t" style="left:1406.79px;top:726.36px;font-size:15.4px;line-height:15.4px;color:#dcdcdc;transform:scaleX(0.9650);">0.15</span>
<span class="t" style="left:1223.18px;top:585.21px;font-size:15.4px;line-height:15.4px;color:#dcdcdc;transform:scaleX(0.9650);">0.15</span>
<span class="t" style="left:1464.97px;top:726.36px;font-size:15.4px;line-height:15.4px;color:#dcdcdc;transform:scaleX(0.9650);">0.2</span>
<span class="t" style="left:1231.44px;top:543.71px;font-size:15.4px;line-height:15.4px;color:#dcdcdc;transform:scaleX(0.9650);">0.2</span>
<span class="t" style="left:1514.89px;top:726.36px;font-size:15.4px;line-height:15.4px;color:#dcdcdc;transform:scaleX(0.9650);">0.25</span>
<span class="t" style="left:1223.18px;top:502.21px;font-size:15.4px;line-height:15.4px;color:#dcdcdc;transform:scaleX(0.9650);">0.25</span>
<span class="t" style="left:1573.07px;top:726.36px;font-size:15.4px;line-height:15.4px;color:#dcdcdc;transform:scaleX(0.9650);">0.3</span>
<span class="t" style="left:1231.44px;top:460.71px;font-size:15.4px;line-height:15.4px;color:#dcdcdc;transform:scaleX(0.9650);">0.3</span>
<span class="t" style="left:1622.99px;top:726.36px;font-size:15.4px;line-height:15.4px;color:#dcdcdc;transform:scaleX(0.9650);">0.35</span>
<span class="t" style="left:1223.18px;top:419.21px;font-size:15.4px;line-height:15.4px;color:#dcdcdc;transform:scaleX(0.9650);">0.35</span>
<span class="t" style="left:1681.17px;top:726.36px;font-size:15.4px;line-height:15.4px;color:#dcdcdc;transform:scaleX(0.9650);">0.4</span>
<span class="t" style="left:1231.44px;top:377.71px;font-size:15.4px;line-height:15.4px;color:#dcdcdc;transform:scaleX(0.9650);">0.4</span>
<span class="t" style="left:1731.09px;top:726.36px;font-size:15.4px;line-height:15.4px;color:#dcdcdc;transform:scaleX(0.9650);">0.45</span>
<span class="t" style="left:1223.18px;top:336.21px;font-size:15.4px;line-height:15.4px;color:#dcdcdc;transform:scaleX(0.9650);">0.45</span>
<span class="t" style="left:1789.27px;top:726.36px;font-size:15.4px;line-height:15.4px;color:#dcdcdc;transform:scaleX(0.9650);">0.5</span>
<span class="t" style="left:1231.44px;top:294.71px;font-size:15.4px;line-height:15.4px;color:#dcdcdc;transform:scaleX(0.9650);">0.5</span>
<span class="t" style="left:1839.19px;top:726.36px;font-size:15.4px;line-height:15.4px;color:#dcdcdc;transform:scaleX(0.9650);">0.55</span>
<span class="t" style="left:1223.18px;top:253.21px;font-size:15.4px;line-height:15.4px;color:#dcdcdc;transform:scaleX(0.9650);">0.55</span>
<div id="gm" style="left:1260px;top:219px;width:648.2px;height:498px;clip-path:polygon(276.7px 483.5px,271.7px 483.2px,267.5px 480.4px,264.0px 477.3px,260.4px 474.3px,256.7px 471.2px,252.9px 468.2px,249.2px 465.1px,245.5px 462.1px,241.8px 459.1px,238.1px 456.0px,234.5px 453.0px,230.8px 449.9px,227.1px 446.9px,223.4px 443.8px,219.8px 440.7px,216.2px 437.6px,212.7px 434.5px,209.2px 431.3px,205.7px 428.1px,202.3px 424.9px,198.9px 421.7px,195.6px 418.4px,192.3px 415.1px,189.0px 411.7px,185.8px 408.4px,182.7px 405.0px,179.6px 401.6px,176.6px 398.1px,173.6px 394.7px,170.6px 391.2px,167.7px 387.7px,164.9px 384.1px,162.0px 380.6px,159.2px 377.0px,156.5px 373.5px,153.7px 369.9px,151.0px 366.3px,148.3px 362.7px,145.6px 359.1px,143.0px 355.4px,140.3px 351.8px,137.7px 348.1px,135.2px 344.5px,132.6px 340.8px,130.1px 337.1px,127.6px 333.5px,125.1px 329.8px,122.6px 326.1px,120.2px 322.3px,117.7px 318.6px,115.3px 314.9px,112.9px 311.2px,110.6px 307.4px,108.2px 303.7px,105.9px 299.9px,103.6px 296.2px,101.3px 292.4px,99.0px 288.6px,96.7px 284.9px,94.4px 281.1px,92.2px 277.3px,89.9px 273.5px,87.7px 269.7px,85.5px 265.9px,83.2px 262.1px,81.0px 258.3px,78.8px 254.5px,76.7px 250.7px,74.5px 246.9px,72.4px 243.1px,70.2px 239.2px,68.1px 235.4px,66.1px 231.6px,64.0px 227.7px,61.9px 223.9px,59.9px 220.0px,57.9px 216.1px,56.0px 212.3px,54.0px 208.4px,52.1px 204.5px,50.3px 200.6px,48.4px 196.7px,46.6px 192.8px,44.8px 188.8px,43.0px 184.9px,41.2px 181.0px,39.5px 177.0px,37.8px 173.1px,36.1px 169.1px,34.4px 165.2px,32.8px 161.2px,31.1px 157.2px,29.5px 153.3px,28.0px 149.3px,26.4px 145.3px,24.8px 141.3px,23.3px 137.3px,21.8px 133.3px,20.4px 129.3px,19.0px 125.3px,17.6px 121.3px,16.2px 117.2px,14.9px 113.2px,13.6px 109.2px,12.3px 105.1px,11.1px 101.0px,9.9px 97.0px,8.8px 92.9px,7.8px 88.8px,6.8px 84.7px,5.8px 80.6px,5.0px 76.5px,4.2px 72.4px,3.5px 68.3px,2.9px 64.1px,2.4px 60.0px,2.1px 55.8px,1.9px 51.7px,1.9px 47.5px,2.2px 43.3px,2.7px 39.2px,3.6px 35.1px,5.0px 31.0px,6.9px 27.1px,9.4px 23.3px,12.6px 20.0px,16.6px 17.2px,21.3px 15.0px,26.3px 13.4px,31.6px 12.3px,36.9px 11.7px,42.3px 11.4px,47.7px 11.2px,53.1px 11.1px,58.5px 11.1px,63.9px 11.1px,69.3px 11.3px,74.7px 11.5px,80.1px 11.7px,85.5px 12.0px,90.9px 12.4px,96.3px 12.7px,101.7px 13.2px,107.0px 13.6px,112.4px 14.1px,117.8px 14.6px,123.1px 15.1px,128.5px 15.6px,133.9px 16.2px,139.2px 16.7px,144.6px 17.3px,149.9px 17.8px,155.3px 18.4px,160.6px 19.0px,166.0px 19.6px,171.3px 20.2px,176.7px 20.8px,182.0px 21.4px,187.4px 22.0px,192.7px 22.6px,198.1px 23.2px,203.4px 23.8px,208.8px 24.4px,214.1px 25.0px,219.5px 25.6px,224.8px 26.2px,230.2px 26.8px,235.5px 27.4px,240.9px 28.1px,246.2px 28.7px,251.5px 29.3px,256.9px 29.9px,262.2px 30.5px,267.6px 31.1px,272.9px 31.7px,278.3px 32.4px,283.6px 33.0px,289.0px 33.6px,294.3px 34.2px,299.7px 34.8px,305.0px 35.4px,310.3px 36.1px,315.7px 36.7px,321.0px 37.3px,326.4px 37.9px,331.7px 38.5px,337.1px 39.1px,342.4px 39.7px,347.8px 40.4px,353.1px 41.0px,358.5px 41.6px,363.8px 42.2px,369.1px 42.8px,374.5px 43.4px,379.8px 44.1px,385.2px 44.7px,390.5px 45.3px,395.9px 45.9px,401.2px 46.5px,406.6px 47.1px,411.9px 47.8px,417.3px 48.4px,422.6px 49.0px,427.9px 49.6px,433.3px 50.2px,438.6px 50.8px,444.0px 51.4px,449.3px 52.1px,454.7px 52.7px,460.0px 53.3px,465.4px 53.9px,470.7px 54.5px,476.1px 55.1px,481.4px 55.7px,486.7px 56.4px,492.1px 57.0px,497.4px 57.6px,502.8px 58.2px,508.1px 58.8px,513.5px 59.4px,518.8px 60.0px,524.2px 60.6px,529.5px 61.3px,534.9px 61.9px,540.2px 62.5px,545.5px 63.1px,550.9px 63.7px,556.2px 64.4px,561.6px 65.0px,566.9px 65.6px,572.3px 66.2px,577.6px 66.8px,583.0px 67.4px,588.3px 68.0px,593.7px 68.7px,599.0px 69.3px,604.4px 69.9px,609.7px 70.5px,615.0px 71.1px,620.4px 71.7px,625.7px 72.4px,631.1px 73.0px,636.4px 73.6px,641.8px 74.2px,647.1px 74.8px,652.5px 75.4px,657.8px 76.0px,663.2px 76.6px,668.5px 77.3px)"><i style="top:10px;left:30px;width:61px;background:linear-gradient(90deg,#090 0px,#090 61px)"></i>
<i style="top:12px;left:21px;width:95px;background:linear-gradient(90deg,#090 0px,#090 95px)"></i>
<i style="top:14px;left:16px;width:121px;background:linear-gradient(90deg,#090 0px,#090 116px,#069900 121px)"></i>
<i style="top:16px;left:13px;width:143px;background:linear-gradient(90deg,#090 0px,#090 119px,#219900 143px)"></i>
<i style="top:18px;left:10px;width:164px;background:linear-gradient(90deg,#090 0px,#090 123px,#3d9900 164px)"></i>
<i style="top:20px;left:8px;width:184px;background:linear-gradient(90deg,#009902 0px,#090 125px,#2e9900 157px,#5d9900 184px)"></i>
<i style="top:22px;left:6px;width:204px;background:linear-gradient(90deg,#009904 0px,#090 127px,#319900 161px,#809900 204px)"></i>
<i style="top:24px;left:5px;width:222px;background:linear-gradient(90deg,#009906 0px,#090 60px,#090 129px,#4c9900 178px,#990 216px,#998d00 222px)"></i>
<i style="top:26px;left:4px;width:241px;background:linear-gradient(90deg,#009908 0px,#090 130px,#4c9900 179px,#990 217px,#996e00 241px)"></i>
<i style="top:28px;left:3px;width:259px;background:linear-gradient(90deg,#00990a 0px,#090 131px,#439900 175px,#990 218px,#997b00 233px,#995900 259px)"></i>
<i style="top:30px;left:2px;width:277px;background:linear-gradient(90deg,#00990c 0px,#090 133px,#4a9900 180px,#989900 218px,#996d00 243px,#994900 277px)"></i>
<i style="top:32px;left:1px;width:296px;background:linear-gradient(90deg,#00990e 0px,#009902 134px,#419900 176px,#999800 220px,#998100 231px,#996200 252px,#994900 277px,#993c00 296px)"></i>
<i style="top:34px;left:1px;width:313px;background:linear-gradient(90deg,#009910 0px,#009905 134px,#489900 180px,#989900 219px,#997800 236px,#995e00 255px,#994700 279px,#993100 313px)"></i>
<i style="top:36px;left:0px;width:331px;background:linear-gradient(90deg,#009912 0px,#009908 136px,#489902 181px,#990 220px,#997600 238px,#995800 261px,#993d00 293px,#992900 331px)"></i>
<i style="top:38px;left:0px;width:349px;background:linear-gradient(90deg,#009914 0px,#00990a 136px,#469905 180px,#990 220px,#997c00 234px,#996b00 245px,#994c00 273px,#993400 307px,#992100 349px)"></i>
<i style="top:40px;left:0px;width:366px;background:linear-gradient(90deg,#009916 0px,#00990d 136px,#469908 180px,#979903 219px,#996c00 244px,#994900 276px,#930 308px,#991b00 366px)"></i>
<i style="top:42px;left:0px;width:384px;background:linear-gradient(90deg,#009918 0px,#009910 137px,#44990c 179px,#989907 219px,#996a02 245px,#994600 279px,#992a00 325px,#991600 384px)"></i>
<i style="top:44px;left:0px;width:401px;background:linear-gradient(90deg,#00991a 0px,#009912 137px,#42990f 178px,#98990a 219px,#997906 235px,#996304 250px,#993e00 289px,#992400 338px,#910 401px)"></i>
<i style="top:46px;left:0px;width:418px;background:linear-gradient(90deg,#00991c 0px,#009915 137px,#409912 177px,#679910 197px,#99990e 219px,#997c0a 233px,#996507 248px,#993f02 287px,#992100 345px,#990d00 418px)"></i>
<i style="top:48px;left:0px;width:436px;background:linear-gradient(90deg,#00991e 0px,#009918 138px,#4f9915 185px,#991 219px,#99780c 235px,#995d08 254px,#994805 275px,#993602 300px,#991c00 358px,#990900 436px)"></i>
<i style="top:50px;left:0px;width:453px;background:linear-gradient(90deg,#009920 0px,#00991b 138px,#4d9918 184px,#999815 219px,#997b10 233px,#995f0b 252px,#994b08 271px,#993504 301px,#991b00 360px,#990600 453px)"></i>
<i style="top:52px;left:0px;width:470px;background:linear-gradient(90deg,#092 0px,#00991e 138px,#4b991b 183px,#999819 219px,#997e14 231px,#99610e 250px,#994709 275px,#993405 302px,#991700 372px,#990300 470px)"></i>
<i style="top:54px;left:0px;width:488px;background:linear-gradient(90deg,#009924 0px,#009921 139px,#49991f 182px,#99971c 219px,#997014 239px,#99570f 258px,#99410a 282px,#992f06 310px,#991501 378px,#990100 488px)"></i>
<i style="top:56px;left:0px;width:505px;background:linear-gradient(90deg,#009927 0px,#009924 139px,#459922 180px,#779921 204px,#999920 218px,#997618 235px,#995a12 255px,#99420c 280px,#992d07 313px,#991101 392px,#900 505px)"></i>
<i style="top:58px;left:0px;width:523px;background:linear-gradient(90deg,#009929 0px,#009927 139px,#439926 179px,#6c9925 199px,#999924 218px,#99791c 233px,#995d15 252px,#99440f 277px,#99310a 305px,#991e05 347px,#991002 395px,#990100 479px,#900 523px)"></i>
<i style="top:60px;left:0px;width:540px;background:linear-gradient(90deg,#00992b 0px,#00992a 140px,#3f9929 177px,#6a9929 198px,#999828 218px,#99751f 235px,#995917 255px,#993c0f 287px,#992609 326px,#991404 378px,#990701 438px,#900 485px,#900 540px)"></i>
<i style="top:62px;left:0px;width:557px;background:linear-gradient(90deg,#00992d 0px,#00992d 140px,#3d992c 176px,#99982c 218px,#997823 233px,#995519 258px,#993a11 289px,#99270b 323px,#991506 373px,#990601 442px,#900 483px,#900 557px)"></i>
<i style="top:64px;left:0px;width:575px;background:linear-gradient(90deg,#00992f 0px,#009930 140px,#399930 174px,#689930 197px,#999830 218px,#997425 235px,#99581c 255px,#993b13 287px,#99210b 336px,#990f05 395px,#990201 466px,#900 575px)"></i>
<i style="top:66px;left:1px;width:591px;background:linear-gradient(90deg,#009932 0px,#093 140px,#359933 171px,#669934 195px,#999734 217px,#997729 232px,#99541d 257px,#993413 296px,#99210d 334px,#990e06 397px,#990002 478px,#900 591px)"></i>
<i style="top:68px;left:1px;width:609px;background:linear-gradient(90deg,#009934 0px,#009936 140px,#269937 163px,#599937 189px,#999938 216px,#996e29 237px,#995721 254px,#99451b 272px,#993013 302px,#991e0d 341px,#990d07 400px,#990002 476px,#900 609px)"></i>
<i style="top:70px;left:1px;width:626px;background:linear-gradient(90deg,#009936 0px,#009939 140px,#24993a 162px,#59993b 189px,#99993c 216px,#996f2d 236px,#99481e 268px,#993317 296px,#991e0f 340px,#990f09 390px,#990003 474px,#900 626px)"></i>
<i style="top:72px;left:2px;width:642px;background:linear-gradient(90deg,#009938 0px,#00993d 139px,#20993e 159px,#59993f 188px,#999841 215px,#996d30 236px,#995727 252px,#99441f 271px,#992f17 301px,#991a0f 349px,#990004 471px,#900 642px)"></i>
<i style="top:74px;left:2px;width:647px;background:linear-gradient(90deg,#00993b 0px,#009940 140px,#489942 180px,#999845 215px,#996e33 235px,#994723 267px,#992e19 302px,#991b11 345px,#990b0a 404px,#990005 469px,#900 647px)"></i>
<i style="top:76px;left:2px;width:647px;background:linear-gradient(90deg,#00993d 0px,#009943 140px,#4a9946 181px,#999749 215px,#996c36 236px,#99562c 252px,#994324 271px,#992d1a 303px,#991b12 344px,#990c0c 398px,#990006 467px,#900 647px)"></i>
<i style="top:78px;left:3px;width:646px;background:linear-gradient(90deg,#00993f 0px,#009947 139px,#1f9948 158px,#4c994a 181px,#99994e 213px,#996d3a 234px,#994628 266px,#99301e 296px,#991c14 339px,#990d0d 391px,#990007 464px,#900 646px)"></i>
<i style="top:80px;left:3px;width:646px;background:linear-gradient(90deg,#009942 0px,#00994a 140px,#4c994e 181px,#999952 213px,#997541 229px,#995532 251px,#993221 292px,#991c16 338px,#990c0e 394px,#990008 463px,#900 646px)"></i>
<i style="top:82px;left:4px;width:645px;background:linear-gradient(90deg,#094 0px,#00994e 139px,#229950 159px,#4e9953 181px,#999857 212px,#997143 230px,#995133 253px,#993122 292px,#991c18 336px,#990b0f 396px,#990009 460px,#990001 645px)"></i>
<i style="top:84px;left:4px;width:645px;background:linear-gradient(90deg,#009947 0px,#009951 139px,#3b9955 172px,#6e9959 195px,#99985b 212px,#997247 229px,#995538 249px,#993326 288px,#991c19 335px,#990c11 390px,#99000a 458px,#990002 645px)"></i>
<i style="top:86px;left:5px;width:644px;background:linear-gradient(90deg,#009949 0px,#095 139px,#41995a 174px,#99975f 211px,#996e49 230px,#995139 251px,#993026 291px,#991c1b 333px,#990b12 392px,#99000b 455px,#990002 644px)"></i>
<i style="top:88px;left:5px;width:644px;background:linear-gradient(90deg,#00994c 0px,#009959 139px,#43995e 175px,#6c9961 193px,#999965 210px,#99855a 218px,#996748 234px,#994032 268px,#992c26 297px,#99191b 340px,#99000d 453px,#990003 644px)"></i>
<i style="top:90px;left:6px;width:643px;background:linear-gradient(90deg,#00994e 0px,#00995c 138px,#459963 175px,#99996a 209px,#99805b 219px,#99684c 232px,#994336 263px,#992b28 297px,#99191d 338px,#99000e 450px,#990003 643px)"></i>
<i style="top:92px;left:6px;width:643px;background:linear-gradient(90deg,#009951 0px,#009960 139px,#459967 175px,#99986e 209px,#996e54 228px,#995444 246px,#99332f 283px,#991a1f 334px,#99000f 448px,#990004 643px)"></i>
<i style="top:94px;left:7px;width:642px;background:linear-gradient(90deg,#009953 0px,#009964 138px,#47996b 175px,#999873 208px,#99715a 225px,#995044 248px,#99302f 286px,#991a21 332px,#990b17 384px,#990010 445px,#990004 642px)"></i>
<i style="top:96px;left:7px;width:642px;background:linear-gradient(90deg,#009956 0px,#009968 138px,#3c996f 170px,#999778 208px,#996d5b 227px,#994a43 253px,#992d30 290px,#991a23 331px,#901 443px,#990005 642px)"></i>
<i style="top:98px;left:8px;width:641px;background:linear-gradient(90deg,#009959 0px,#00996c 138px,#499975 175px,#99977c 207px,#997061 224px,#99504b 246px,#992f33 285px,#991b25 326px,#990c1b 376px,#990012 440px,#990006 641px)"></i>
<i style="top:100px;left:8px;width:641px;background:linear-gradient(90deg,#00995b 0px,#009970 138px,#409978 171px,#72997e 192px,#999983 206px,#997b6d 218px,#996a61 227px,#994b4a 250px,#992e35 286px,#991724 336px,#990013 438px,#990006 641px)"></i>
<i style="top:102px;left:9px;width:640px;background:linear-gradient(90deg,#00995e 0px,#009974 137px,#42997d 171px,#998 205px,#998176 214px,#996d67 224px,#994f50 245px,#992e37 284px,#991827 331px,#990015 435px,#990007 640px)"></i>
<i style="top:104px;left:9px;width:639px;background:linear-gradient(90deg,#009961 0px,#009978 138px,#4b9983 175px,#99988d 205px,#99706e 222px,#994b51 248px,#992d39 285px,#991929 327px,#990016 433px,#990007 639px)"></i>
<i style="top:106px;left:10px;width:636px;background:linear-gradient(90deg,#009964 0px,#00997c 137px,#449986 171px,#999792 204px,#996a6d 224px,#994f57 243px,#992d3c 283px,#99192b 325px,#990017 430px,#990008 636px)"></i>
<i style="top:108px;left:11px;width:633px;background:linear-gradient(90deg,#009967 0px,#009971 70px,#009981 136px,#3d998a 167px,#999797 203px,#996d74 221px,#994b57 245px,#992c3d 283px,#99192d 323px,#990018 427px,#990009 633px)"></i>
<i style="top:110px;left:11px;width:631px;background:linear-gradient(90deg,#009969 0px,#009985 137px,#3f998f 168px,#7c9999 192px,#999399 204px,#997882 215px,#995f6c 229px,#993b4d 261px,#992539 295px,#99162d 330px,#990019 426px,#990009 631px)"></i>
<i style="top:112px;left:12px;width:628px;background:linear-gradient(90deg,#00996c 0px,#009989 136px,#2d9991 159px,#5c9999 179px,#998d99 205px,#996071 227px,#993e52 256px,#99283f 287px,#99172f 325px,#99001b 423px,#99000a 628px)"></i>
<i style="top:114px;left:13px;width:625px;background:linear-gradient(90deg,#00996f 0px,#00997d 76px,#00998e 135px,#3f9999 166px,#998799 206px,#996c7f 219px,#99586e 231px,#993a52 259px,#99223b 297px,#99112c 341px,#99001c 420px,#99000b 625px)"></i>
<i style="top:116px;left:13px;width:624px;background:linear-gradient(90deg,#009972 0px,#00997e 65px,#009993 136px,#249999 154px,#998299 208px,#996b83 219px,#995670 232px,#993c57 256px,#99203b 301px,#99112e 340px,#99001d 418px,#99000b 624px)"></i>
<i style="top:118px;left:14px;width:621px;background:linear-gradient(90deg,#009975 0px,#009986 82px,#009997 135px,#538a99 177px,#997c99 209px,#995774 230px,#993c59 255px,#992644 286px,#991332 331px,#99001f 415px,#990015 489px,#99000c 621px)"></i>
<i style="top:120px;left:15px;width:618px;background:linear-gradient(90deg,#009978 0px,#009699 134px,#678199 187px,#979 210px,#995576 230px,#993959 257px,#991f40 298px,#990f2f 342px,#990020 412px,#990015 496px,#99000d 618px)"></i>
<i style="top:122px;left:15px;width:616px;background:linear-gradient(90deg,#00997b 0px,#099 116px,#009299 135px,#428499 170px,#997299 212px,#995378 231px,#993659 260px,#991f42 297px,#990e30 344px,#990021 410px,#99000d 616px)"></i>
<i style="top:124px;left:16px;width:613px;background:linear-gradient(90deg,#00997e 0px,#099 103px,#008e99 134px,#3e8199 168px,#996e99 213px,#994a72 237px,#993359 262px,#991d41 301px,#990c30 349px,#990023 407px,#990018 482px,#99000e 613px)"></i>
<i style="top:126px;left:17px;width:610px;background:linear-gradient(90deg,#009982 0px,#099 90px,#008a99 133px,#4d7999 176px,#996999 214px,#994f7c 231px,#99355e 258px,#99244c 283px,#991238 326px,#990024 404px,#990018 489px,#99000f 610px)"></i>
<i style="top:128px;left:17px;width:608px;background:linear-gradient(90deg,#009985 0px,#099 78px,#008599 134px,#567399 182px,#996599 216px,#994877 237px,#99325e 261px,#991e48 294px,#991037 333px,#990026 402px,#990019 487px,#990010 608px)"></i>
<i style="top:130px;left:18px;width:605px;background:linear-gradient(90deg,#098 0px,#099 65px,#008299 133px,#457399 173px,#996199 217px,#994679 237px,#992f5e 263px,#991e4b 292px,#99113a 328px,#990027 399px,#99001b 476px,#990010 605px)"></i>
<i style="top:132px;left:19px;width:602px;background:linear-gradient(90deg,#00998b 0px,#099 52px,#007e99 132px,#436f99 172px,#995d99 218px,#99457c 236px,#992c5d 266px,#991c4a 295px,#990e39 334px,#990029 396px,#99001b 482px,#901 602px)"></i>
<i style="top:134px;left:20px;width:599px;background:linear-gradient(90deg,#00998f 0px,#099 39px,#007a99 132px,#5f6699 188px,#995999 219px,#99417a 239px,#992d62 262px,#991d4d 292px,#990f3c 329px,#99002a 393px,#99001c 480px,#990012 599px)"></i>
<i style="top:136px;left:20px;width:597px;background:linear-gradient(90deg,#009992 0px,#099 27px,#079 132px,#596399 186px,#995699 221px,#993c78 243px,#992a61 266px,#99184a 301px,#990d3c 333px,#99002c 391px,#99001c 487px,#990013 597px)"></i>
<i style="top:138px;left:21px;width:594px;background:linear-gradient(90deg,#009996 0px,#009899 18px,#007499 131px,#556199 184px,#995299 222px,#993b7b 242px,#992760 269px,#99194e 296px,#990b3b 339px,#99002e 388px,#99001f 469px,#990013 594px)"></i>
<i style="top:140px;left:22px;width:591px;background:linear-gradient(90deg,#099 0px,#007199 131px,#446299 174px,#994f99 223px,#993c7f 240px,#992864 266px,#991950 295px,#990c3e 334px,#99002f 386px,#99001e 482px,#990014 591px)"></i>
<i style="top:142px;left:23px;width:588px;background:linear-gradient(90deg,#009599 0px,#006e99 130px,#475e99 176px,#994b99 224px,#99377d 243px,#992563 269px,#99164f 299px,#990a3e 337px,#990031 383px,#990024 445px,#990015 588px)"></i>
<i style="top:144px;left:23px;width:586px;background:linear-gradient(90deg,#009299 0px,#006b99 130px,#425c99 174px,#994899 226px,#99337b 247px,#99205f 277px,#99134d 306px,#99093e 341px,#990032 381px,#990024 451px,#990016 586px)"></i>
<i style="top:146px;left:24px;width:583px;background:linear-gradient(90deg,#008f99 0px,#006899 129px,#455899 176px,#994599 227px,#992f78 251px,#992062 275px,#991451 301px,#99083f 341px,#990034 378px,#990027 437px,#990016 583px)"></i>
<i style="top:148px;left:25px;width:580px;background:linear-gradient(90deg,#008c99 0px,#006599 129px,#4b5499 180px,#994299 228px,#99307d 248px,#992065 273px,#99114f 307px,#99073f 344px,#990036 375px,#990028 436px,#990017 580px)"></i>
<i style="top:150px;left:26px;width:577px;background:linear-gradient(90deg,#008999 0px,#006399 128px,#5a4e99 190px,#993f99 229px,#992c7a 252px,#991d64 276px,#991354 300px,#99053f 347px,#990038 372px,#990029 435px,#990018 577px)"></i>
<i style="top:152px;left:26px;width:576px;background:linear-gradient(90deg,#008699 0px,#006199 128px,#405199 174px,#993d99 231px,#992c7f 250px,#991b63 280px,#990743 340px,#990039 370px,#990028 446px,#990019 576px)"></i>
<i style="top:154px;left:27px;width:573px;background:linear-gradient(90deg,#008399 0px,#005e99 128px,#504b99 185px,#993a99 232px,#99297d 253px,#991760 286px,#990440 351px,#99003b 367px,#99002a 439px,#99001a 573px)"></i>
<i style="top:156px;left:28px;width:570px;background:linear-gradient(90deg,#008099 0px,#005c99 127px,#474b99 179px,#993799 233px,#992a82 250px,#991a68 277px,#991056 304px,#990544 343px,#99003d 364px,#990029 449px,#99001b 570px)"></i>
<i style="top:158px;left:29px;width:567px;background:linear-gradient(90deg,#007d99 0px,#005999 126px,#4b4799 182px,#993599 234px,#992780 253px,#991867 280px,#990445 343px,#99003f 361px,#99002b 442px,#99001b 567px)"></i>
<i style="top:160px;left:30px;width:564px;background:linear-gradient(90deg,#007a99 0px,#005799 126px,#414799 175px,#993298 236px,#99227c 258px,#99186a 278px,#990548 338px,#990041 358px,#99002c 441px,#99001c 564px)"></i>
<i style="top:162px;left:31px;width:561px;background:linear-gradient(90deg,#007899 0px,#059 125px,#454499 178px,#993098 237px,#992584 252px,#99176c 277px,#990d59 305px,#990246 346px,#99002c 445px,#99001d 561px)"></i>
<i style="top:164px;left:31px;width:559px;background:linear-gradient(90deg,#007699 0px,#005399 125px,#4d4099 185px,#992d98 239px,#992282 256px,#99156b 281px,#990b59 308px,#990247 347px,#99002f 434px,#99001e 559px)"></i>
<i style="top:166px;left:32px;width:556px;background:linear-gradient(90deg,#007399 0px,#005199 125px,#424199 177px,#992b98 240px,#992388 252px,#991167 288px,#990148 347px,#99002f 438px,#99001f 556px)"></i>
<i style="top:168px;left:33px;width:553px;background:linear-gradient(90deg,#007199 0px,#004f99 124px,#3e4099 174px,#992998 241px,#992086 255px,#991169 287px,#990047 352px,#99002f 442px,#990020 553px)"></i>
<i style="top:170px;left:34px;width:550px;background:linear-gradient(90deg,#006e99 0px,#004d99 123px,#354099 167px,#992798 242px,#991d84 258px,#990f68 290px,#990048 352px,#99002f 446px,#990021 550px)"></i>
<i style="top:172px;left:35px;width:547px;background:linear-gradient(90deg,#006c99 0px,#004b99 123px,#513799 189px,#992598 243px,#990f6a 289px,#990049 352px,#990032 435px,#902 547px)"></i>
<i style="top:174px;left:36px;width:544px;background:linear-gradient(90deg,#006a99 0px,#004999 122px,#523599 190px,#992398 244px,#990f6e 285px,#990254 329px,#99004a 352px,#990035 424px,#902 544px)"></i>
<i style="top:176px;left:36px;width:542px;background:linear-gradient(90deg,#006899 0px,#004899 122px,#3f3899 176px,#992198 246px,#99147b 272px,#990b68 296px,#990052 337px,#990049 358px,#903 438px,#990023 542px)"></i>
<i style="top:178px;left:37px;width:539px;background:linear-gradient(90deg,#006599 0px,#004699 122px,#453499 181px,#991f98 247px,#99147f 269px,#990b6c 292px,#990054 334px,#99004d 350px,#990035 432px,#990024 539px)"></i>
<i style="top:180px;left:38px;width:536px;background:linear-gradient(90deg,#006399 0px,#049 121px,#513099 191px,#991e98 248px,#991079 277px,#990a6b 295px,#990057 331px,#99004c 355px,#990036 431px,#990025 536px)"></i>
<i style="top:182px;left:39px;width:533px;background:linear-gradient(90deg,#006199 0px,#004399 120px,#403299 177px,#991c98 249px,#990a6f 291px,#990059 328px,#990051 345px,#990039 421px,#990026 533px)"></i>
<i style="top:184px;left:40px;width:530px;background:linear-gradient(90deg,#005f99 0px,#004199 120px,#4e2d99 189px,#991a98 250px,#99107f 273px,#99086e 294px,#99005c 325px,#990052 345px,#99003a 420px,#990027 530px)"></i>
<i style="top:186px;left:41px;width:527px;background:linear-gradient(90deg,#005d99 0px,#003f99 119px,#412f99 178px,#991898 251px,#990f82 271px,#99076d 297px,#99005e 322px,#990050 352px,#990038 432px,#990028 527px)"></i>
<i style="top:188px;left:42px;width:525px;background:linear-gradient(90deg,#005b99 0px,#003e99 118px,#422d99 179px,#991798 252px,#990771 293px,#990061 319px,#990053 347px,#990039 431px,#990029 525px)"></i>
<i style="top:190px;left:43px;width:522px;background:linear-gradient(90deg,#005a99 0px,#003c99 118px,#4b2999 187px,#991598 253px,#990570 296px,#990064 316px,#990054 347px,#99003a 430px,#99002a 522px)"></i>
<i style="top:192px;left:44px;width:519px;background:linear-gradient(90deg,#005899 0px,#003b99 117px,#4d2799 189px,#991498 254px,#990571 296px,#906 313px,#990054 349px,#99003a 433px,#99002b 519px)"></i>
<i style="top:194px;left:45px;width:516px;background:linear-gradient(90deg,#005699 0px,#003a99 116px,#452899 182px,#991298 255px,#990370 299px,#905 349px,#99003b 432px,#99002c 516px)"></i>
<i style="top:196px;left:45px;width:514px;background:linear-gradient(90deg,#005499 0px,#003899 117px,#462699 184px,#991198 257px,#99026f 303px,#905 352px,#99003b 436px,#99002d 514px)"></i>
<i style="top:198px;left:46px;width:511px;background:linear-gradient(90deg,#005399 0px,#003799 116px,#482499 186px,#990f98 258px,#990375 296px,#990056 352px,#990042 411px,#99002e 511px)"></i>
<i style="top:200px;left:47px;width:508px;background:linear-gradient(90deg,#005199 0px,#003699 115px,#4b2299 189px,#990e98 259px,#990276 296px,#990056 354px,#990043 410px,#99002f 508px)"></i>
<i style="top:202px;left:48px;width:505px;background:linear-gradient(90deg,#004f99 0px,#003499 115px,#4e2099 192px,#990d98 260px,#990175 299px,#990056 356px,#990043 413px,#990030 505px)"></i>
<i style="top:204px;left:49px;width:502px;background:linear-gradient(90deg,#004e99 0px,#039 114px,#531d99 197px,#990b98 261px,#990076 299px,#990059 351px,#904 412px,#990031 502px)"></i>
<i style="top:206px;left:50px;width:499px;background:linear-gradient(90deg,#004c99 0px,#003299 113px,#372399 170px,#990a98 262px,#907 299px,#990057 358px,#990045 411px,#903 499px)"></i>
<i style="top:208px;left:51px;width:496px;background:linear-gradient(90deg,#004b99 0px,#003199 113px,#990999 263px,#990078 299px,#99005a 353px,#990042 425px,#990034 496px)"></i>
<i style="top:210px;left:52px;width:493px;background:linear-gradient(90deg,#004999 0px,#003099 112px,#451d99 184px,#990799 264px,#990079 299px,#99005d 348px,#990046 413px,#990035 493px)"></i>
<i style="top:212px;left:53px;width:490px;background:linear-gradient(90deg,#004899 0px,#002e99 111px,#3c1f99 175px,#990699 265px,#99007a 299px,#99005d 350px,#990047 412px,#990036 490px)"></i>
<i style="top:214px;left:54px;width:487px;background:linear-gradient(90deg,#004699 0px,#002d99 111px,#3b1e99 174px,#990599 266px,#99007b 299px,#99005d 352px,#990048 411px,#990037 487px)"></i>
<i style="top:216px;left:55px;width:484px;background:linear-gradient(90deg,#004599 0px,#002c99 110px,#3b1d99 174px,#990499 267px,#99007c 299px,#99005d 354px,#990049 410px,#990038 484px)"></i>
<i style="top:218px;left:56px;width:481px;background:linear-gradient(90deg,#004399 0px,#002b99 109px,#3b1b99 174px,#990399 268px,#99007d 299px,#990061 347px,#99004b 406px,#99003a 481px)"></i>
<i style="top:220px;left:57px;width:478px;background:linear-gradient(90deg,#004299 0px,#002a99 109px,#4d1699 193px,#990299 269px,#990079 306px,#990060 351px,#99004c 405px,#99003b 478px)"></i>
<i style="top:222px;left:58px;width:476px;background:linear-gradient(90deg,#004199 0px,#002999 108px,#4a1599 190px,#909 270px,#99007a 306px,#990060 353px,#99004d 404px,#99003c 476px)"></i>
<i style="top:224px;left:59px;width:473px;background:linear-gradient(90deg,#003f99 0px,#012899 109px,#471599 187px,#909 271px,#99007d 303px,#990064 346px,#99004f 400px,#99003d 473px)"></i>
<i style="top:226px;left:60px;width:470px;background:linear-gradient(90deg,#003e99 0px,#002799 107px,#521199 199px,#909 272px,#99007e 303px,#990063 350px,#99004d 409px,#99003e 470px)"></i>
<i style="top:228px;left:62px;width:466px;background:linear-gradient(90deg,#003d99 0px,#002699 105px,#441499 183px,#909 272px,#99007f 302px,#990062 353px,#99004e 407px,#99003f 466px)"></i>
<i style="top:230px;left:63px;width:463px;background:linear-gradient(90deg,#003b99 0px,#012599 106px,#8a0099 257px,#909 273px,#99007b 309px,#990061 357px,#99004f 406px,#990041 463px)"></i>
<i style="top:232px;left:64px;width:460px;background:linear-gradient(90deg,#003a99 0px,#002499 104px,#860099 254px,#909 274px,#99007e 306px,#990065 350px,#990051 402px,#990042 460px)"></i>
<i style="top:234px;left:65px;width:457px;background:linear-gradient(90deg,#003999 0px,#002399 103px,#820099 251px,#909 275px,#990081 303px,#990064 354px,#990043 457px)"></i>
<i style="top:236px;left:66px;width:454px;background:linear-gradient(90deg,#003899 0px,#012299 104px,#7f0099 248px,#909 276px,#990082 303px,#99006a 343px,#990059 383px,#990045 454px)"></i>
<i style="top:238px;left:67px;width:451px;background:linear-gradient(90deg,#003799 0px,#029 102px,#7b0099 245px,#909 277px,#990080 307px,#990067 351px,#990046 451px)"></i>
<i style="top:240px;left:68px;width:448px;background:linear-gradient(90deg,#003699 0px,#002199 101px,#780099 242px,#909 278px,#99007b 316px,#906 355px,#990047 448px)"></i>
<i style="top:242px;left:69px;width:445px;background:linear-gradient(90deg,#003499 0px,#012099 102px,#750099 239px,#909 279px,#990084 304px,#99006a 348px,#990059 389px,#990049 445px)"></i>
<i style="top:244px;left:70px;width:442px;background:linear-gradient(90deg,#039 0px,#001f99 100px,#710099 236px,#909 280px,#99007c 317px,#990068 354px,#99004a 442px)"></i>
<i style="top:246px;left:71px;width:439px;background:linear-gradient(90deg,#003299 0px,#001e99 99px,#6e0099 233px,#909 281px,#99007b 320px,#990067 358px,#99004c 439px)"></i>
<i style="top:248px;left:73px;width:435px;background:linear-gradient(90deg,#003199 0px,#011d99 99px,#6c0099 230px,#909 281px,#99007f 314px,#99006a 352px,#99004d 435px)"></i>
<i style="top:250px;left:74px;width:432px;background:linear-gradient(90deg,#003099 0px,#001d99 97px,#690099 227px,#909 282px,#99007e 317px,#990069 356px,#99004f 432px)"></i>
<i style="top:252px;left:75px;width:429px;background:linear-gradient(90deg,#002f99 0px,#001c99 96px,#609 224px,#909 283px,#990071 341px,#990050 429px)"></i>
<i style="top:254px;left:76px;width:426px;background:linear-gradient(90deg,#002e99 0px,#011b99 97px,#630099 221px,#909 284px,#990075 335px,#990051 426px)"></i>
<i style="top:256px;left:77px;width:423px;background:linear-gradient(90deg,#002d99 0px,#001b99 95px,#600099 218px,#909 285px,#990078 331px,#906 368px,#990053 423px)"></i>
<i style="top:258px;left:78px;width:421px;background:linear-gradient(90deg,#002c99 0px,#001a99 94px,#5e0099 215px,#909 286px,#990075 338px,#990054 421px)"></i>
<i style="top:260px;left:79px;width:418px;background:linear-gradient(90deg,#002b99 0px,#011999 95px,#5b0099 212px,#909 287px,#990078 334px,#990056 418px)"></i>
<i style="top:262px;left:81px;width:414px;background:linear-gradient(90deg,#002a99 0px,#001899 92px,#580099 208px,#909 287px,#990076 338px,#990057 414px)"></i>
<i style="top:264px;left:82px;width:411px;background:linear-gradient(90deg,#002999 0px,#001899 91px,#560099 205px,#909 288px,#990079 334px,#990059 411px)"></i>
<i style="top:266px;left:83px;width:408px;background:linear-gradient(90deg,#002899 0px,#011799 92px,#530099 202px,#909 289px,#907 339px,#99005b 408px)"></i>
<i style="top:268px;left:84px;width:405px;background:linear-gradient(90deg,#002799 0px,#001699 90px,#500099 199px,#909 290px,#99007a 335px,#99005c 405px)"></i>
<i style="top:270px;left:85px;width:402px;background:linear-gradient(90deg,#002699 0px,#001699 89px,#4e0099 196px,#909 291px,#990078 340px,#99005e 402px)"></i>
<i style="top:272px;left:86px;width:399px;background:linear-gradient(90deg,#002599 0px,#011599 90px,#4c0099 193px,#909 292px,#99007c 334px,#990060 399px)"></i>
<i style="top:274px;left:88px;width:395px;background:linear-gradient(90deg,#002499 0px,#001499 87px,#490099 189px,#909 292px,#990079 340px,#990061 395px)"></i>
<i style="top:276px;left:89px;width:392px;background:linear-gradient(90deg,#002499 0px,#001499 86px,#470099 186px,#909 293px,#99007d 334px,#990063 392px)"></i>
<i style="top:278px;left:90px;width:389px;background:linear-gradient(90deg,#002399 0px,#011399 87px,#450099 183px,#909 294px,#99007b 339px,#990065 389px)"></i>
<i style="top:280px;left:91px;width:386px;background:linear-gradient(90deg,#029 0px,#001399 85px,#420099 180px,#909 295px,#99007e 335px,#990067 386px)"></i>
<i style="top:282px;left:92px;width:383px;background:linear-gradient(90deg,#002199 0px,#001299 84px,#400099 177px,#909 296px,#99007d 338px,#990069 383px)"></i>
<i style="top:284px;left:94px;width:379px;background:linear-gradient(90deg,#002099 0px,#011199 84px,#3e0099 173px,#909 296px,#990080 333px,#99006a 379px)"></i>
<i style="top:286px;left:95px;width:376px;background:linear-gradient(90deg,#001f99 0px,#019 82px,#3c0099 170px,#909 297px,#99007f 336px,#99006c 376px)"></i>
<i style="top:288px;left:96px;width:373px;background:linear-gradient(90deg,#001f99 0px,#001099 81px,#3a0099 167px,#909 298px,#990082 332px,#99006e 373px)"></i>
<i style="top:290px;left:97px;width:370px;background:linear-gradient(90deg,#001e99 0px,#011099 82px,#380099 164px,#909 299px,#990081 335px,#990070 370px)"></i>
<i style="top:292px;left:98px;width:367px;background:linear-gradient(90deg,#001d99 0px,#000f99 80px,#360099 161px,#980099 298px,#990072 367px)"></i>
<i style="top:294px;left:100px;width:364px;background:linear-gradient(90deg,#001c99 0px,#000f99 78px,#340099 157px,#980099 298px,#990074 364px)"></i>
<i style="top:296px;left:101px;width:361px;background:linear-gradient(90deg,#001c99 0px,#000e99 77px,#320099 154px,#980099 299px,#990076 361px)"></i>
<i style="top:298px;left:102px;width:358px;background:linear-gradient(90deg,#001b99 0px,#000e99 77px,#300099 151px,#980099 300px,#990078 358px)"></i>
<i style="top:300px;left:103px;width:355px;background:linear-gradient(90deg,#001a99 0px,#000d99 76px,#2e0099 148px,#980099 301px,#99007a 355px)"></i>
<i style="top:302px;left:105px;width:351px;background:linear-gradient(90deg,#001999 0px,#000d99 74px,#2c0099 144px,#980099 301px,#99007c 351px)"></i>
<i style="top:304px;left:106px;width:348px;background:linear-gradient(90deg,#001999 0px,#000c99 74px,#2a0099 141px,#980099 302px,#99007e 348px)"></i>
<i style="top:306px;left:107px;width:345px;background:linear-gradient(90deg,#001899 0px,#000c99 73px,#290099 138px,#980099 303px,#990081 345px)"></i>
<i style="top:308px;left:108px;width:342px;background:linear-gradient(90deg,#001799 0px,#000b99 72px,#270099 135px,#980099 304px,#990083 342px)"></i>
<i style="top:310px;left:110px;width:338px;background:linear-gradient(90deg,#001699 0px,#000b99 71px,#250099 131px,#980099 304px,#990085 338px)"></i>
<i style="top:312px;left:111px;width:335px;background:linear-gradient(90deg,#001699 0px,#000a99 70px,#230099 128px,#980099 305px,#990087 335px)"></i>
<i style="top:314px;left:112px;width:332px;background:linear-gradient(90deg,#001599 0px,#000a99 69px,#209 125px,#980099 306px,#99008a 332px)"></i>
<i style="top:316px;left:113px;width:329px;background:linear-gradient(90deg,#001599 0px,#000999 69px,#200099 122px,#909 309px,#99008c 329px)"></i>
<i style="top:318px;left:115px;width:325px;background:linear-gradient(90deg,#001499 0px,#000999 67px,#1e0099 118px,#980099 307px,#99008f 325px)"></i>
<i style="top:320px;left:116px;width:322px;background:linear-gradient(90deg,#001399 0px,#000999 66px,#1d0099 115px,#909 310px,#990091 322px)"></i>
<i style="top:322px;left:117px;width:319px;background:linear-gradient(90deg,#001399 0px,#000899 66px,#1b0099 112px,#980099 309px,#990094 319px)"></i>
<i style="top:324px;left:119px;width:315px;background:linear-gradient(90deg,#001299 0px,#000899 64px,#1a0099 108px,#990096 315px)"></i>
<i style="top:326px;left:120px;width:312px;background:linear-gradient(90deg,#019 0px,#000799 63px,#180099 105px,#909 312px)"></i>
<i style="top:328px;left:121px;width:309px;background:linear-gradient(90deg,#019 0px,#000799 63px,#170099 102px,#960099 309px)"></i>
<i style="top:330px;left:123px;width:306px;background:linear-gradient(90deg,#001099 0px,#000699 61px,#150099 98px,#940099 306px)"></i>
<i style="top:332px;left:124px;width:303px;background:linear-gradient(90deg,#000f99 0px,#000699 60px,#140099 95px,#920099 303px)"></i>
<i style="top:334px;left:125px;width:300px;background:linear-gradient(90deg,#000f99 0px,#000699 60px,#120099 92px,#8f0099 300px)"></i>
<i style="top:336px;left:127px;width:296px;background:linear-gradient(90deg,#000e99 0px,#000599 58px,#109 88px,#8d0099 296px)"></i>
<i style="top:338px;left:128px;width:293px;background:linear-gradient(90deg,#000e99 0px,#000599 57px,#0f0099 85px,#8a0099 293px)"></i>
<i style="top:340px;left:129px;width:290px;background:linear-gradient(90deg,#000d99 0px,#000599 56px,#0e0099 82px,#809 290px)"></i>
<i style="top:342px;left:131px;width:286px;background:linear-gradient(90deg,#000c99 0px,#000499 55px,#0d0099 78px,#850099 286px)"></i>
<i style="top:344px;left:132px;width:283px;background:linear-gradient(90deg,#000c99 0px,#000499 54px,#0b0099 75px,#830099 283px)"></i>
<i style="top:346px;left:134px;width:279px;background:linear-gradient(90deg,#000b99 0px,#000399 52px,#810099 279px)"></i>
<i style="top:348px;left:135px;width:276px;background:linear-gradient(90deg,#000b99 0px,#000399 52px,#7f0099 276px)"></i>
<i style="top:350px;left:136px;width:273px;background:linear-gradient(90deg,#000a99 0px,#000399 51px,#7c0099 273px)"></i>
<i style="top:352px;left:138px;width:269px;background:linear-gradient(90deg,#000999 0px,#000299 49px,#7a0099 269px)"></i>
<i style="top:354px;left:139px;width:266px;background:linear-gradient(90deg,#000999 0px,#000299 49px,#780099 266px)"></i>
<i style="top:356px;left:141px;width:262px;background:linear-gradient(90deg,#000899 0px,#000299 47px,#760099 262px)"></i>
<i style="top:358px;left:142px;width:259px;background:linear-gradient(90deg,#000899 0px,#000199 46px,#740099 259px)"></i>
<i style="top:360px;left:144px;width:255px;background:linear-gradient(90deg,#000799 0px,#000199 45px,#720099 255px)"></i>
<i style="top:362px;left:145px;width:252px;background:linear-gradient(90deg,#000799 0px,#000199 44px,#700099 252px)"></i>
<i style="top:364px;left:147px;width:249px;background:linear-gradient(90deg,#000699 0px,#009 42px,#6e0099 249px)"></i>
<i style="top:366px;left:148px;width:246px;background:linear-gradient(90deg,#000699 0px,#009 42px,#6c0099 246px)"></i>
<i style="top:368px;left:150px;width:242px;background:linear-gradient(90deg,#000599 0px,#009 40px,#6a0099 242px)"></i>
<i style="top:370px;left:151px;width:239px;background:linear-gradient(90deg,#000599 0px,#030099 46px,#680099 239px)"></i>
<i style="top:372px;left:153px;width:235px;background:linear-gradient(90deg,#000499 0px,#009 38px,#609 235px)"></i>
<i style="top:374px;left:154px;width:232px;background:linear-gradient(90deg,#000499 0px,#009 37px,#640099 232px)"></i>
<i style="top:376px;left:156px;width:228px;background:linear-gradient(90deg,#000399 0px,#020099 40px,#620099 228px)"></i>
<i style="top:378px;left:157px;width:225px;background:linear-gradient(90deg,#000399 0px,#009 35px,#610099 225px)"></i>
<i style="top:380px;left:159px;width:221px;background:linear-gradient(90deg,#000299 0px,#009 33px,#5f0099 221px)"></i>
<i style="top:382px;left:160px;width:218px;background:linear-gradient(90deg,#000299 0px,#010099 35px,#5d0099 218px)"></i>
<i style="top:384px;left:162px;width:214px;background:linear-gradient(90deg,#000199 0px,#009 31px,#5b0099 214px)"></i>
<i style="top:386px;left:164px;width:210px;background:linear-gradient(90deg,#000199 0px,#009 29px,#5a0099 210px)"></i>
<i style="top:388px;left:165px;width:207px;background:linear-gradient(90deg,#009 0px,#010099 31px,#580099 207px)"></i>
<i style="top:390px;left:167px;width:203px;background:linear-gradient(90deg,#009 0px,#009 27px,#560099 203px)"></i>
<i style="top:392px;left:169px;width:199px;background:linear-gradient(90deg,#009 0px,#009 25px,#540099 199px)"></i>
<i style="top:394px;left:170px;width:196px;background:linear-gradient(90deg,#009 0px,#010099 27px,#530099 196px)"></i>
<i style="top:396px;left:172px;width:192px;background:linear-gradient(90deg,#009 0px,#009 23px,#510099 192px)"></i>
<i style="top:398px;left:174px;width:188px;background:linear-gradient(90deg,#009 0px,#009 21px,#500099 188px)"></i>
<i style="top:400px;left:176px;width:185px;background:linear-gradient(90deg,#009 0px,#010099 22px,#4e0099 185px)"></i>
<i style="top:402px;left:177px;width:182px;background:linear-gradient(90deg,#009 0px,#009 19px,#4d0099 182px)"></i>
<i style="top:404px;left:179px;width:178px;background:linear-gradient(90deg,#009 0px,#020099 22px,#4b0099 178px)"></i>
<i style="top:406px;left:181px;width:174px;background:linear-gradient(90deg,#009 0px,#010099 18px,#4a0099 174px)"></i>
<i style="top:408px;left:183px;width:170px;background:linear-gradient(90deg,#009 0px,#009 14px,#480099 170px)"></i>
<i style="top:410px;left:185px;width:166px;background:linear-gradient(90deg,#009 0px,#020099 17px,#470099 166px)"></i>
<i style="top:412px;left:187px;width:162px;background:linear-gradient(90deg,#009 0px,#010099 13px,#450099 162px)"></i>
<i style="top:414px;left:189px;width:158px;background:linear-gradient(90deg,#009 0px,#030099 16px,#409 158px)"></i>
<i style="top:416px;left:190px;width:155px;background:linear-gradient(90deg,#009 0px,#020099 13px,#420099 155px)"></i>
<i style="top:418px;left:192px;width:151px;background:linear-gradient(90deg,#009 0px,#410099 151px)"></i>
<i style="top:420px;left:194px;width:147px;background:linear-gradient(90deg,#009 0px,#3f0099 147px)"></i>
<i style="top:422px;left:197px;width:142px;background:linear-gradient(90deg,#009 0px,#3e0099 142px)"></i>
<i style="top:424px;left:199px;width:138px;background:linear-gradient(90deg,#009 0px,#3d0099 138px)"></i>
<i style="top:426px;left:201px;width:134px;background:linear-gradient(90deg,#010099 0px,#3b0099 134px)"></i>
<i style="top:428px;left:203px;width:130px;background:linear-gradient(90deg,#020099 0px,#3a0099 130px)"></i>
<i style="top:430px;left:205px;width:126px;background:linear-gradient(90deg,#020099 0px,#390099 126px)"></i>
<i style="top:432px;left:207px;width:122px;background:linear-gradient(90deg,#030099 0px,#370099 122px)"></i>
<i style="top:434px;left:209px;width:118px;background:linear-gradient(90deg,#040099 0px,#360099 118px)"></i>
<i style="top:436px;left:212px;width:114px;background:linear-gradient(90deg,#050099 0px,#350099 114px)"></i>
<i style="top:438px;left:214px;width:110px;background:linear-gradient(90deg,#050099 0px,#340099 110px)"></i>
<i style="top:440px;left:216px;width:106px;background:linear-gradient(90deg,#060099 0px,#309 106px)"></i>
<i style="top:442px;left:219px;width:101px;background:linear-gradient(90deg,#070099 0px,#310099 101px)"></i>
<i style="top:444px;left:221px;width:97px;background:linear-gradient(90deg,#080099 0px,#300099 97px)"></i>
<i style="top:446px;left:223px;width:93px;background:linear-gradient(90deg,#080099 0px,#2f0099 93px)"></i>
<i style="top:448px;left:226px;width:88px;background:linear-gradient(90deg,#090099 0px,#2e0099 88px)"></i>
<i style="top:450px;left:228px;width:84px;background:linear-gradient(90deg,#0a0099 0px,#2d0099 84px)"></i>
<i style="top:452px;left:231px;width:79px;background:linear-gradient(90deg,#0b0099 0px,#2b0099 79px)"></i>
<i style="top:454px;left:233px;width:75px;background:linear-gradient(90deg,#0c0099 0px,#2a0099 75px)"></i>
<i style="top:456px;left:235px;width:71px;background:linear-gradient(90deg,#0c0099 0px,#290099 71px)"></i>
<i style="top:458px;left:238px;width:66px;background:linear-gradient(90deg,#0d0099 0px,#280099 66px)"></i>
<i style="top:460px;left:240px;width:62px;background:linear-gradient(90deg,#0e0099 0px,#270099 62px)"></i>
<i style="top:462px;left:243px;width:57px;background:linear-gradient(90deg,#0f0099 0px,#260099 57px)"></i>
<i style="top:464px;left:245px;width:53px;background:linear-gradient(90deg,#0f0099 0px,#240099 53px)"></i>
<i style="top:466px;left:247px;width:49px;background:linear-gradient(90deg,#100099 0px,#230099 49px)"></i>
<i style="top:468px;left:250px;width:44px;background:linear-gradient(90deg,#109 0px,#209 44px)"></i>
<i style="top:470px;left:252px;width:40px;background:linear-gradient(90deg,#120099 0px,#210099 40px)"></i>
<i style="top:472px;left:255px;width:36px;background:linear-gradient(90deg,#130099 0px,#210099 36px)"></i>
<i style="top:474px;left:257px;width:32px;background:linear-gradient(90deg,#130099 0px,#200099 32px)"></i>
<i style="top:476px;left:260px;width:27px;background:linear-gradient(90deg,#140099 0px,#1e0099 27px)"></i>
<i style="top:478px;left:262px;width:23px;background:linear-gradient(90deg,#150099 0px,#1d0099 23px)"></i>
<i style="top:480px;left:264px;width:19px;background:linear-gradient(90deg,#150099 0px,#1c0099 19px)"></i>
<i style="top:482px;left:267px;width:14px;background:linear-gradient(90deg,#160099 0px,#1b0099 14px)"></i>
<i style="top:484px;left:271px;width:7px;background:linear-gradient(90deg,#170099 0px,#1a0099 7px)"></i><div class="a" style="left:0;top:0;width:648.2px;height:498px;clip-path:polygon(485.36px 63.99px,134.90px 31.17px,189.17px 366.38px)"><i style="top:30px;left:133px;width:15px;background:linear-gradient(90deg,#0f0 0px,#0f0 2px,#1fff00 15px)"></i>
<i style="top:32px;left:133px;width:37px;background:linear-gradient(90deg,#00ff04 0px,#00ff04 2px,#17ff02 12px,#59ff00 37px)"></i>
<i style="top:34px;left:133px;width:58px;background:linear-gradient(90deg,#00ff09 0px,#03ff08 4px,#3aff04 26px,#98ff00 58px)"></i>
<i style="top:36px;left:133px;width:79px;background:linear-gradient(90deg,#00ff0d 0px,#00ff0d 3px,#07ff0c 6px,#55ff06 36px,#9eff01 60px,#e0ff00 79px)"></i>
<i style="top:38px;left:133px;width:101px;background:linear-gradient(90deg,#0f1 0px,#0f1 3px,#10ff10 10px,#66ff0a 42px,#b9ff04 68px,#fcff00 86px,#ffcf00 101px)"></i>
<i style="top:40px;left:134px;width:121px;background:linear-gradient(90deg,#00ff16 0px,#08ff15 6px,#5dff10 38px,#afff0a 64px,#fffe05 86px,#ffc601 103px,#ff9d00 121px)"></i>
<i style="top:42px;left:134px;width:143px;background:linear-gradient(90deg,#00ff1a 0px,#00ff1a 3px,#54ff15 35px,#a5ff10 61px,#fffd0b 86px,#ffe008 94px,#ffb103 111px,#ff8f00 128px,#ff7800 143px)"></i>
<i style="top:44px;left:134px;width:164px;background:linear-gradient(90deg,#00ff1f 0px,#00ff1f 3px,#09ff1e 7px,#4bff1b 32px,#a5ff16 61px,#feff11 85px,#ffc70a 102px,#ffa306 117px,#ff7701 143px,#ff5e00 164px)"></i>
<i style="top:46px;left:135px;width:184px;background:linear-gradient(90deg,#00ff23 0px,#01ff23 3px,#1fff22 15px,#6bff1e 42px,#b3ff1b 64px,#ffff17 84px,#ffc910 100px,#ffab0c 112px,#ff9108 125px,#ff6d03 149px,#ff4a00 184px)"></i>
<i style="top:48px;left:135px;width:206px;background:linear-gradient(90deg,#00ff28 0px,#01ff28 3px,#14ff27 11px,#71ff23 44px,#beff20 67px,#ffff1d 84px,#ffe118 92px,#ffc013 103px,#ffa810 113px,#ff860a 131px,#ff6405 156px,#ff4f02 177px,#ff3a00 206px)"></i>
<i style="top:50px;left:135px;width:227px;background:linear-gradient(90deg,#00ff2d 0px,#00ff2d 3px,#16ff2c 12px,#74ff28 45px,#b7ff26 65px,#fffe23 84px,#ffe01e 92px,#ffb516 107px,#ff9310 123px,#ff790c 139px,#ff6108 158px,#ff4a04 182px,#ff2d00 227px)"></i>
<i style="top:52px;left:136px;width:247px;background:linear-gradient(90deg,#00ff32 0px,#01ff31 3px,#18ff31 12px,#77ff2e 45px,#a9ff2c 60px,#fffd29 83px,#ffdc23 92px,#ffad1a 109px,#ff8b13 126px,#ff740f 141px,#ff5d0a 160px,#ff4305 189px,#f20 247px)"></i>
<i style="top:54px;left:136px;width:269px;background:linear-gradient(90deg,#00ff36 0px,#01ff36 3px,#12ff36 10px,#67ff34 40px,#b4ff32 63px,#fffc2f 83px,#ffdb28 92px,#ffaa1e 110px,#ff8c17 125px,#ff6a10 148px,#ff3e07 195px,#ff2802 232px,#ff1900 269px)"></i>
<i style="top:56px;left:136px;width:290px;background:linear-gradient(90deg,#00ff3b 0px,#00ff3b 3px,#0cff3b 8px,#6dff39 42px,#adff38 61px,#fffc35 83px,#ffd72d 93px,#ffa922 110px,#ff861a 128px,#ff6112 155px,#ff480c 181px,#ff3006 216px,#f10 290px)"></i>
<i style="top:58px;left:137px;width:310px;background:linear-gradient(90deg,#00ff40 0px,#01ff40 3px,#16ff40 11px,#70ff3f 42px,#b8ff3e 63px,#ffff3d 81px,#ffd332 93px,#ffa626 110px,#ff821d 129px,#ff5d14 157px,#ff450e 183px,#ff2b07 223px,#ff0a00 310px)"></i>
<i style="top:60px;left:137px;width:332px;background:linear-gradient(90deg,#00ff45 0px,#01ff45 3px,#15ff45 11px,#63ff44 38px,#b1ff44 61px,#fffe43 81px,#ffcf36 94px,#ffa32a 111px,#ff751e 137px,#ff5415 165px,#ff3a0e 197px,#ff2307 238px,#ff0400 332px)"></i>
<i style="top:62px;left:137px;width:351px;background:linear-gradient(90deg,#00ff4a 0px,#00ff4a 3px,#0fff4a 9px,#66ff4a 39px,#9fff4a 56px,#fffd49 81px,#ffdb3f 90px,#ffbd36 100px,#ff8e29 121px,#ff6c1f 143px,#ff4b15 174px,#ff360f 202px,#ff1e08 248px,#ff0d03 296px,#f00 351px)"></i>
<i style="top:64px;left:138px;width:349px;background:linear-gradient(90deg,#00ff50 0px,#09ff50 6px,#59ff50 34px,#aaff50 58px,#fffd50 80px,#ffd744 90px,#ffbc3c 99px,#ff8f2e 119px,#ff6a22 143px,#ff4d19 170px,#ff3812 197px,#ff200b 241px,#ff0b04 300px,#ff0001 349px)"></i>
<i style="top:66px;left:138px;width:348px;background:linear-gradient(90deg,#0f5 0px,#03ff55 4px,#5fff56 36px,#a3ff56 56px,#fffc56 80px,#ffd64a 90px,#ffbe42 98px,#ff9233 117px,#ff7429 135px,#ff4f1d 167px,#ff3815 196px,#ff1f0d 242px,#ff0c06 295px,#ff0002 348px)"></i>
<i style="top:68px;left:138px;width:346px;background:linear-gradient(90deg,#00ff5a 0px,#00ff5a 3px,#0aff5a 7px,#62ff5c 37px,#aeff5d 59px,#ffff5e 79px,#ffdc52 88px,#ffbd47 98px,#ff9539 115px,#ff6b2a 141px,#ff491e 173px,#ff3115 206px,#ff1e0f 243px,#ff0d09 290px,#ff0004 346px)"></i>
<i style="top:70px;left:139px;width:343px;background:linear-gradient(90deg,#00ff60 0px,#00ff60 2px,#0cff60 7px,#68ff62 38px,#b2ff63 59px,#fffe65 78px,#ffdb58 87px,#ffbf4d 96px,#ffa343 107px,#ff8939 120px,#ff692d 141px,#ff4a21 170px,#ff3118 204px,#ff1b10 248px,#ff0005 343px)"></i>
<i style="top:72px;left:139px;width:341px;background:linear-gradient(90deg,#00ff65 0px,#01ff65 3px,#0eff66 8px,#5eff68 35px,#a7ff6a 56px,#fffe6c 78px,#ffe562 84px,#ffbe52 96px,#ff883d 120px,#ff6730 142px,#ff4b25 168px,#ff311b 203px,#ff2014 235px,#ff0c0c 289px,#ff0007 341px)"></i>
<i style="top:74px;left:139px;width:339px;background:linear-gradient(90deg,#00ff6a 0px,#00ff6b 3px,#0dff6b 8px,#61ff6e 36px,#abff70 57px,#fffd72 78px,#ffc95d 92px,#ff9f4b 108px,#ff6e37 136px,#ff4d29 165px,#ff311d 202px,#ff1f16 236px,#ff0e0f 281px,#ff0008 339px)"></i>
<i style="top:76px;left:140px;width:336px;background:linear-gradient(90deg,#00ff70 0px,#00ff70 2px,#0fff71 8px,#5aff74 33px,#9cff77 52px,#fffc79 77px,#ffc260 93px,#ffa553 104px,#ff8a47 117px,#ff6436 142px,#ff472a 170px,#ff3120 200px,#ff1b16 243px,#ff000a 336px)"></i>
<i style="top:78px;left:140px;width:334px;background:linear-gradient(90deg,#00ff76 0px,#01ff76 3px,#1f7 9px,#67ff7b 37px,#b3ff7e 58px,#ffff82 76px,#ffd16d 88px,#ffb660 97px,#ff894b 117px,#ff673c 139px,#ff482d 168px,#ff2f22 202px,#ff1d19 237px,#ff0a11 290px,#ff000c 334px)"></i>
<i style="top:80px;left:140px;width:332px;background:linear-gradient(90deg,#00ff7b 0px,#00ff7c 3px,#13ff7d 10px,#6aff81 38px,#a0ff84 53px,#ffff89 76px,#ffd073 88px,#ff9858 109px,#ff6d43 134px,#ff4931 166px,#ff2f25 201px,#ff1c1b 238px,#ff0812 295px,#ff000d 332px)"></i>
<i style="top:82px;left:141px;width:329px;background:linear-gradient(90deg,#00ff81 0px,#07ff82 5px,#63ff88 35px,#a0ff8b 52px,#fffe90 75px,#ffcf79 87px,#ffa061 104px,#ff784c 125px,#ff563b 151px,#ff392c 184px,#ff1e1f 231px,#ff0c16 279px,#ff000f 329px)"></i>
<i style="top:84px;left:141px;width:327px;background:linear-gradient(90deg,#00ff87 0px,#01ff88 3px,#09ff88 6px,#6dff8f 38px,#a4ff93 53px,#fffd98 75px,#ffce7f 87px,#ffb370 96px,#ff905e 111px,#ff714d 129px,#ff503c 156px,#ff3930 183px,#ff1d21 232px,#ff0d18 274px,#f01 327px)"></i>
<i style="top:86px;left:141px;width:325px;background:linear-gradient(90deg,#00ff8d 0px,#00ff8e 3px,#0bff8f 7px,#5fff95 34px,#a8ff9a 54px,#fffc9f 75px,#ffca83 88px,#ff9c6a 105px,#ff7856 124px,#ff5a45 146px,#ff4036 173px,#ff292a 207px,#ff121d 258px,#ff0012 325px)"></i>
<i style="top:88px;left:142px;width:323px;background:linear-gradient(90deg,#00ff93 0px,#00ff94 2px,#0dff95 7px,#62ff9c 34px,#91ffa0 47px,#feffa8 73px,#fffba6 74px,#ffc989 87px,#ff9b6f 104px,#ff775a 123px,#ff5747 147px,#ff3936 180px,#ff1f27 224px,#ff0c1c 273px,#ff0014 323px)"></i>
<i style="top:90px;left:142px;width:321px;background:linear-gradient(90deg,#0f9 0px,#01ff9a 3px,#54ffa1 30px,#91ffa7 47px,#ffffb0 73px,#ffc88f 87px,#ff9a74 104px,#ff735c 125px,#ff554a 148px,#ff3235 189px,#ff1d28 227px,#ff091c 281px,#ff0016 321px)"></i>
<i style="top:92px;left:142px;width:319px;background:linear-gradient(90deg,#00ffa0 0px,#00ffa0 3px,#57ffa9 31px,#91ffae 47px,#fffeb8 73px,#ffc796 87px,#ff9777 105px,#ff7260 125px,#ff514b 151px,#ff3238 188px,#ff1c2a 228px,#ff0a1f 276px,#ff0017 319px)"></i>
<i style="top:94px;left:143px;width:316px;background:linear-gradient(90deg,#00ffa6 0px,#02ffa7 3px,#61ffb1 33px,#b5ffb9 55px,#fffdc0 72px,#ffc39a 87px,#ff967c 104px,#ff7667 121px,#ff5854 143px,#ff3d42 171px,#ff2734 204px,#ff0e23 261px,#ff0019 316px)"></i>
<i style="top:96px;left:143px;width:314px;background:linear-gradient(90deg,#00ffad 0px,#01ffad 3px,#38ffb3 21px,#6fffb9 37px,#adffc0 53px,#fffcc7 72px,#ffc2a0 87px,#ff9581 104px,#ff756c 121px,#ff5657 144px,#ff3a43 174px,#ff2334 210px,#ff1128 251px,#ff001b 314px)"></i>
<i style="top:98px;left:143px;width:312px;background:linear-gradient(90deg,#00ffb3 0px,#00ffb4 3px,#64ffc0 34px,#a9ffc8 52px,#feffd2 71px,#fffbcf 72px,#ffc1a6 87px,#ff9b8b 101px,#ff716e 123px,#ff5459 145px,#ff3a47 173px,#ff2437 207px,#ff0f29 255px,#ff001d 312px)"></i>
<i style="top:100px;left:144px;width:309px;background:linear-gradient(90deg,#00ffba 0px,#02ffbb 3px,#60ffc7 32px,#a1ffcf 49px,#ffffda 70px,#ffcab4 83px,#ff9a91 100px,#ff7072 122px,#ff515b 146px,#ff3446 179px,#ff1a33 225px,#ff001f 309px)"></i>
<i style="top:102px;left:144px;width:307px;background:linear-gradient(90deg,#00ffc0 0px,#01ffc2 3px,#5cffce 31px,#9dffd6 48px,#fffee3 70px,#ffc9ba 83px,#ff9996 100px,#ff747a 119px,#ff4e5d 148px,#ff3449 178px,#ff1935 226px,#ff0021 307px)"></i>
<i style="top:104px;left:144px;width:305px;background:linear-gradient(90deg,#00ffc7 0px,#00ffc8 3px,#58ffd5 30px,#99ffde 47px,#fffdeb 70px,#ffc8c1 83px,#ff989b 100px,#ff737e 119px,#ff5668 140px,#ff374f 173px,#ff223f 206px,#ff0d2e 255px,#ff0023 305px)"></i>
<i style="top:106px;left:144px;width:303px;background:linear-gradient(90deg,#00ffce 0px,#02ffd0 4px,#54ffdc 29px,#aeffe9 52px,#fffcf3 70px,#ffc7c8 83px,#ff97a1 100px,#ff6f80 121px,#ff546a 141px,#ff3753 172px,#ff2342 203px,#ff0f32 248px,#ff0025 303px)"></i>
<i style="top:108px;left:145px;width:300px;background:linear-gradient(90deg,#00ffd5 0px,#02ffd7 3px,#1affdb 11px,#66ffe6 33px,#aafff1 50px,#fefffe 68px,#fffcfb 69px,#ffc6cf 82px,#ff96a6 99px,#ff6e85 120px,#ff516c 142px,#ff3756 170px,#ff2446 199px,#ff0e34 248px,#ff0027 300px)"></i>
<i style="top:110px;left:145px;width:298px;background:linear-gradient(90deg,#00ffdc 0px,#01ffde 3px,#4cffea 26px,#95fff6 45px,#ceffff 58px,#fff5ff 70px,#ffbbcd 85px,#ff95ac 99px,#ff6d89 120px,#ff4f6f 143px,#ff375a 169px,#ff1f45 207px,#ff0c35 252px,#ff0029 298px)"></i>
<i style="top:112px;left:145px;width:296px;background:linear-gradient(90deg,#00ffe3 0px,#00ffe5 3px,#4ffff3 27px,#96ffff 45px,#ffebff 72px,#ffbad3 85px,#ff89a7 104px,#ff698b 122px,#ff4c71 145px,#ff385e 167px,#ff214a 202px,#ff0e39 245px,#ff002b 296px)"></i>
<i style="top:114px;left:146px;width:293px;background:linear-gradient(90deg,#00ffeb 0px,#02ffed 3px,#11fff0 8px,#65ffff 32px,#ffe1ff 73px,#ffb0d1 87px,#ff88ad 103px,#ff6a90 120px,#ff4770 148px,#ff2d57 181px,#ff1744 220px,#ff002d 293px)"></i>
<i style="top:116px;left:146px;width:291px;background:linear-gradient(90deg,#00fff2 0px,#01fff4 3px,#2efffd 17px,#ace8ff 53px,#ffd8ff 75px,#ffa9d2 89px,#ff87b2 103px,#ff719c 115px,#ff527f 137px,#ff3462 169px,#ff1d4c 206px,#ff0b3b 249px,#ff002f 291px)"></i>
<i style="top:118px;left:146px;width:289px;background:linear-gradient(90deg,#00fffa 0px,#00fffc 3px,#36f7ff 20px,#ffccfc 78px,#ffa3d3 91px,#ff7eaf 107px,#ff5e8f 127px,#ff3d6f 157px,#ff2b5c 182px,#ff184b 215px,#ff0032 289px)"></i>
<i style="top:120px;left:147px;width:286px;background:linear-gradient(90deg,#00fcff 0px,#02faff 3px,#37efff 20px,#ffc4fc 79px,#ffa2d9 90px,#ff74ab 111px,#ff558c 132px,#ff3d72 156px,#ff265b 187px,#ff164c 217px,#ff0034 286px)"></i>
<i style="top:122px;left:147px;width:284px;background:linear-gradient(90deg,#00f5ff 0px,#01f3ff 3px,#3be7ff 22px,#ffbcfc 81px,#ff96d5 94px,#ff70ac 113px,#ff5894 129px,#ff417b 150px,#ff2861 182px,#ff1b54 205px,#ff0036 284px)"></i>
<i style="top:124px;left:147px;width:282px;background:linear-gradient(90deg,#0ef 0px,#00ecff 3px,#42deff 25px,#ffb4fc 83px,#ff8ace 99px,#ff6daf 114px,#ff5293 133px,#ff3875 160px,#ff1753 212px,#ff0038 282px)"></i>
<i style="top:126px;left:148px;width:279px;background:linear-gradient(90deg,#00e6ff 0px,#00e5ff 2px,#0ae3ff 6px,#55d3ff 31px,#ffadfc 84px,#ff8bd6 97px,#ff6bb2 114px,#ff5095 133px,#ff3b7d 154px,#ff1b59 203px,#ff0c4a 236px,#ff003b 279px)"></i>
<i style="top:128px;left:148px;width:277px;background:linear-gradient(90deg,#00e0ff 0px,#01deff 3px,#1dd8ff 13px,#80c3ff 46px,#ffa6fc 86px,#ff81d2 101px,#ff68b5 115px,#ff438a 145px,#ff2e72 170px,#ff1a5c 202px,#ff003d 277px)"></i>
<i style="top:130px;left:148px;width:275px;background:linear-gradient(90deg,#00daff 0px,#00d8ff 3px,#3ecbff 25px,#ff9ffc 88px,#ff82da 100px,#ff64b6 117px,#ff3c87 151px,#ff2971 175px,#ff195e 203px,#ff0040 275px)"></i>
<i style="top:132px;left:149px;width:272px;background:linear-gradient(90deg,#00d4ff 0px,#04d1ff 4px,#4dc1ff 30px,#ff99fc 89px,#ff7fdd 100px,#ff61b9 117px,#ff3f8f 146px,#ff2d7a 167px,#ff1b63 198px,#ff0b51 233px,#ff0042 272px)"></i>
<i style="top:134px;left:149px;width:270px;background:linear-gradient(90deg,#00ceff 0px,#03ccff 4px,#45bdff 28px,#ff93fd 91px,#ff76d9 104px,#ff5eba 119px,#ff3a8e 150px,#ff1965 199px,#ff0045 270px)"></i>
<i style="top:136px;left:149px;width:269px;background:linear-gradient(90deg,#00c8ff 0px,#00c7ff 3px,#35bbff 23px,#ff8dfd 93px,#ff73dc 105px,#ff5abb 121px,#ff358c 155px,#ff1765 203px,#ff0047 269px)"></i>
<i style="top:138px;left:150px;width:266px;background:linear-gradient(90deg,#00c3ff 0px,#04c0ff 4px,#46b2ff 29px,#ff87fd 94px,#ff5ec7 116px,#ff3894 150px,#ff267d 173px,#ff1465 206px,#ff0049 266px)"></i>
<i style="top:140px;left:150px;width:264px;background:linear-gradient(90deg,#00beff 0px,#03bbff 4px,#34b0ff 23px,#ff81fd 96px,#ff6add 108px,#ff58c4 120px,#ff3494 153px,#ff176c 199px,#ff004c 264px)"></i>
<i style="top:142px;left:150px;width:262px;background:linear-gradient(90deg,#00b9ff 0px,#02b7ff 4px,#54a4ff 36px,#ff7cfd 98px,#ff63d9 112px,#ff4ebc 127px,#ff3093 157px,#ff136a 206px,#ff004f 262px)"></i>
<i style="top:144px;left:151px;width:259px;background:linear-gradient(90deg,#00b4ff 0px,#04b1ff 4px,#4aa1ff 32px,#ff77fd 99px,#ff62de 111px,#ff4fc4 124px,#ff3aa5 144px,#ff2c92 160px,#ff106a 209px,#ff0051 259px)"></i>
<i style="top:146px;left:151px;width:257px;background:linear-gradient(90deg,#00afff 0px,#03adff 4px,#579aff 38px,#ff72fd 101px,#ff5fe1 112px,#ff4bc3 127px,#ff3cad 141px,#ff2991 164px,#ff0e6a 213px,#ff0054 257px)"></i>
<i style="top:148px;left:151px;width:255px;background:linear-gradient(90deg,#00abff 0px,#02a9ff 4px,#379cff 26px,#9f84ff 67px,#fe6eff 102px,#ff58dd 116px,#ff46c2 130px,#ff2c9b 158px,#ff1273 203px,#ff0057 255px)"></i>
<i style="top:150px;left:152px;width:252px;background:linear-gradient(90deg,#00a6ff 0px,#06a3ff 5px,#5092ff 36px,#fe6aff 103px,#ff46c8 128px,#ff2a9c 159px,#ff1277 200px,#ff005a 252px)"></i>
<i style="top:152px;left:152px;width:250px;background:linear-gradient(90deg,#00a2ff 0px,#059fff 5px,#498fff 34px,#fe65ff 105px,#ff42c7 131px,#ff289d 161px,#ff127b 198px,#ff005d 250px)"></i>
<i style="top:154px;left:152px;width:248px;background:linear-gradient(90deg,#009eff 0px,#029cff 4px,#5a87ff 42px,#fe61ff 107px,#ff42cd 130px,#ff259d 164px,#ff0f7a 203px,#ff0060 248px)"></i>
<i style="top:156px;left:153px;width:245px;background:linear-gradient(90deg,#009aff 0px,#0a96ff 7px,#6680ff 47px,#fe5cff 108px,#ff3ecc 132px,#ff229e 165px,#ff0f7e 200px,#ff0063 245px)"></i>
<i style="top:158px;left:153px;width:243px;background:linear-gradient(90deg,#0096ff 0px,#0793ff 6px,#5181ff 39px,#fe58ff 110px,#ff3acb 135px,#ff209f 167px,#ff1083 197px,#f06 243px)"></i>
<i style="top:160px;left:153px;width:241px;background:linear-gradient(90deg,#0093ff 0px,#0490ff 5px,#4f7eff 39px,#fe54ff 112px,#ff39cf 135px,#ff23a8 162px,#ff0e84 199px,#ff0069 241px)"></i>
<i style="top:162px;left:154px;width:238px;background:linear-gradient(90deg,#008fff 0px,#008eff 2px,#1089ff 10px,#4d7bff 38px,#fe50ff 113px,#ff35ce 137px,#ff21a9 163px,#ff0f8a 194px,#ff006c 238px)"></i>
<i style="top:164px;left:154px;width:236px;background:linear-gradient(90deg,#008bff 0px,#018aff 3px,#0d87ff 9px,#5f73ff 47px,#fe4dff 115px,#ff34d2 137px,#ff1fab 164px,#ff0e8b 196px,#ff0070 236px)"></i>
<i style="top:166px;left:154px;width:234px;background:linear-gradient(90deg,#08f 0px,#0087ff 3px,#5f6fff 48px,#fe49ff 117px,#ff33d6 137px,#ff1dac 166px,#ff0c8c 198px,#ff0073 234px)"></i>
<i style="top:168px;left:155px;width:231px;background:linear-gradient(90deg,#0084ff 0px,#0083ff 2px,#5f6cff 48px,#fe45ff 118px,#ff2fd3 140px,#ff1cae 166px,#ff0b8d 199px,#f07 231px)"></i>
<i style="top:170px;left:155px;width:229px;background:linear-gradient(90deg,#0081ff 0px,#0180ff 3px,#5d69ff 48px,#fe42ff 120px,#ff2ed7 140px,#ff1ab0 167px,#ff0c94 194px,#ff007a 229px)"></i>
<i style="top:172px;left:155px;width:227px;background:linear-gradient(90deg,#007eff 0px,#007dff 3px,#5d66ff 49px,#fe3fff 122px,#ff2ddb 140px,#ff19b2 168px,#ff0a94 197px,#ff007e 227px)"></i>
<i style="top:174px;left:155px;width:225px;background:linear-gradient(90deg,#007cff 0px,#0579ff 6px,#5d63ff 50px,#fe3bff 124px,#ff29d8 144px,#ff17b4 169px,#ff0995 199px,#ff0081 225px)"></i>
<i style="top:176px;left:156px;width:222px;background:linear-gradient(90deg,#0078ff 0px,#0c74ff 9px,#5961ff 48px,#fe38ff 125px,#ff28dc 143px,#ff18bb 165px,#ff0b9f 190px,#ff0085 222px)"></i>
<i style="top:178px;left:156px;width:220px;background:linear-gradient(90deg,#0076ff 0px,#0074ff 3px,#266bff 23px,#8e51ff 75px,#fe35ff 127px,#ff26de 144px,#ff17bd 166px,#ff099e 194px,#ff0089 220px)"></i>
<i style="top:180px;left:156px;width:218px;background:linear-gradient(90deg,#0073ff 0px,#0371ff 5px,#3a63ff 34px,#a249ff 86px,#fe32ff 129px,#ff22db 148px,#ff15bf 167px,#ff069d 198px,#ff008d 218px)"></i>
<i style="top:182px;left:157px;width:215px;background:linear-gradient(90deg,#0070ff 0px,#066dff 6px,#6755ff 57px,#fe2fff 130px,#ff23e4 144px,#ff14c1 167px,#ff0091 215px)"></i>
<i style="top:184px;left:157px;width:214px;background:linear-gradient(90deg,#006dff 0px,#006cff 3px,#6553ff 57px,#fe2cff 132px,#ff1bd7 154px,#ff11bf 171px,#ff0094 214px)"></i>
<i style="top:186px;left:157px;width:212px;background:linear-gradient(90deg,#006bff 0px,#0369ff 5px,#6350ff 57px,#fe29ff 134px,#ff1ad9 155px,#ff10c1 172px,#ff0098 212px)"></i>
<i style="top:188px;left:158px;width:209px;background:linear-gradient(90deg,#0068ff 0px,#0466ff 5px,#634eff 57px,#fe27ff 135px,#ff13cf 163px,#ff06af 189px,#ff009c 209px)"></i>
<i style="top:190px;left:158px;width:207px;background:linear-gradient(90deg,#06f 0px,#0065ff 3px,#564fff 51px,#fe24ff 137px,#ff0fca 169px,#ff00a1 207px)"></i>
<i style="top:192px;left:158px;width:205px;background:linear-gradient(90deg,#0064ff 0px,#0361ff 5px,#584cff 53px,#fe21ff 139px,#ff0fd0 167px,#ff00a5 205px)"></i>
<i style="top:194px;left:159px;width:202px;background:linear-gradient(90deg,#0061ff 0px,#045fff 5px,#6c44ff 64px,#fe1fff 140px,#ff0bcb 172px,#f0a 202px)"></i>
<i style="top:196px;left:159px;width:200px;background:linear-gradient(90deg,#005fff 0px,#005eff 3px,#5a46ff 55px,#fe1cff 142px,#ff0bd1 170px,#ff00ae 200px)"></i>
<i style="top:198px;left:159px;width:198px;background:linear-gradient(90deg,#005dff 0px,#035bff 5px,#5a44ff 56px,#fe1aff 144px,#ff0dda 166px,#ff00b3 198px)"></i>
<i style="top:200px;left:160px;width:195px;background:linear-gradient(90deg,#005aff 0px,#15f 13px,#783aff 73px,#fe18ff 145px,#ff0ad9 168px,#ff00b8 195px)"></i>
<i style="top:202px;left:160px;width:193px;background:linear-gradient(90deg,#0058ff 0px,#0057ff 3px,#683cff 65px,#fe15ff 147px,#ff08d8 171px,#ff00bd 193px)"></i>
<i style="top:204px;left:160px;width:191px;background:linear-gradient(90deg,#0056ff 0px,#0653ff 7px,#5c3dff 59px,#fe13ff 149px,#ff08de 169px,#ff00c2 191px)"></i>
<i style="top:206px;left:161px;width:188px;background:linear-gradient(90deg,#0054ff 0px,#0751ff 7px,#5c3bff 59px,#fe11ff 150px,#ff06dd 171px,#ff00c7 188px)"></i>
<i style="top:208px;left:161px;width:186px;background:linear-gradient(90deg,#0052ff 0px,#0051ff 3px,#7732ff 76px,#fe0fff 152px,#f0c 186px)"></i>
<i style="top:210px;left:161px;width:184px;background:linear-gradient(90deg,#0050ff 0px,#004fff 3px,#0c4cff 11px,#6b33ff 70px,#fe0dff 154px,#ff00d2 184px)"></i>
<i style="top:212px;left:162px;width:181px;background:linear-gradient(90deg,#004eff 0px,#1049ff 13px,#6632ff 67px,#fe0bff 155px,#ff00d8 181px)"></i>
<i style="top:214px;left:162px;width:179px;background:linear-gradient(90deg,#004dff 0px,#024bff 4px,#5934ff 60px,#fe09ff 157px,#f0d 179px)"></i>
<i style="top:216px;left:162px;width:177px;background:linear-gradient(90deg,#004bff 0px,#004aff 3px,#4e35ff 54px,#fe07ff 159px,#ff00e3 177px)"></i>
<i style="top:218px;left:163px;width:174px;background:linear-gradient(90deg,#0049ff 0px,#0546ff 6px,#692cff 71px,#fe05ff 160px,#ff00e9 174px)"></i>
<i style="top:220px;left:163px;width:172px;background:linear-gradient(90deg,#0047ff 0px,#0345ff 5px,#5330ff 58px,#fe03ff 162px,#ff00f0 172px)"></i>
<i style="top:222px;left:163px;width:170px;background:linear-gradient(90deg,#0046ff 0px,#0443ff 6px,#5e2bff 66px,#fe01ff 164px,#ff00f6 170px)"></i>
<i style="top:224px;left:164px;width:167px;background:linear-gradient(90deg,#04f 0px,#0242ff 4px,#5e2aff 66px,#ff00fd 167px)"></i>
<i style="top:226px;left:164px;width:165px;background:linear-gradient(90deg,#0042ff 0px,#0340ff 5px,#5e28ff 67px,#fb00ff 165px)"></i>
<i style="top:228px;left:164px;width:163px;background:linear-gradient(90deg,#0041ff 0px,#0040ff 3px,#3930ff 43px,#9518ff 104px,#f400ff 163px)"></i>
<i style="top:230px;left:165px;width:160px;background:linear-gradient(90deg,#003fff 0px,#023dff 4px,#6423ff 72px,#e0f 160px)"></i>
<i style="top:232px;left:165px;width:158px;background:linear-gradient(90deg,#003eff 0px,#073bff 8px,#4e28ff 58px,#e700ff 158px)"></i>
<i style="top:234px;left:165px;width:157px;background:linear-gradient(90deg,#003cff 0px,#003bff 3px,#5424ff 63px,#e300ff 157px)"></i>
<i style="top:236px;left:166px;width:154px;background:linear-gradient(90deg,#003aff 0px,#0638ff 7px,#611fff 72px,#d0f 154px)"></i>
<i style="top:238px;left:166px;width:152px;background:linear-gradient(90deg,#0039ff 0px,#0337ff 5px,#5023ff 61px,#d700ff 152px)"></i>
<i style="top:240px;left:166px;width:150px;background:linear-gradient(90deg,#0038ff 0px,#0136ff 4px,#3e26ff 49px,#d100ff 150px)"></i>
<i style="top:242px;left:167px;width:147px;background:linear-gradient(90deg,#0036ff 0px,#0235ff 4px,#4822ff 56px,#cb00ff 147px)"></i>
<i style="top:244px;left:167px;width:145px;background:linear-gradient(90deg,#0035ff 0px,#0832ff 9px,#4023ff 51px,#c600ff 145px)"></i>
<i style="top:246px;left:167px;width:143px;background:linear-gradient(90deg,#0034ff 0px,#0132ff 4px,#4320ff 54px,#c100ff 143px)"></i>
<i style="top:248px;left:167px;width:141px;background:linear-gradient(90deg,#03f 0px,#0231ff 5px,#3224ff 42px,#b0f 141px)"></i>
<i style="top:250px;left:168px;width:138px;background:linear-gradient(90deg,#0031ff 0px,#042fff 6px,#3920ff 47px,#b600ff 138px)"></i>
<i style="top:252px;left:168px;width:136px;background:linear-gradient(90deg,#0030ff 0px,#012eff 4px,#3c1eff 50px,#b100ff 136px)"></i>
<i style="top:254px;left:168px;width:134px;background:linear-gradient(90deg,#002fff 0px,#022dff 5px,#2922ff 36px,#ac00ff 134px)"></i>
<i style="top:256px;left:169px;width:131px;background:linear-gradient(90deg,#002dff 0px,#2c20ff 38px,#a700ff 131px)"></i>
<i style="top:258px;left:169px;width:129px;background:linear-gradient(90deg,#002cff 0px,#012bff 4px,#341dff 45px,#a300ff 129px)"></i>
<i style="top:260px;left:169px;width:127px;background:linear-gradient(90deg,#002bff 0px,#0229ff 5px,#1e22ff 28px,#9e00ff 127px)"></i>
<i style="top:262px;left:170px;width:124px;background:linear-gradient(90deg,#002aff 0px,#0527ff 7px,#3b19ff 51px,#9a00ff 124px)"></i>
<i style="top:264px;left:170px;width:122px;background:linear-gradient(90deg,#0029ff 0px,#0127ff 4px,#241eff 33px,#9500ff 122px)"></i>
<i style="top:266px;left:170px;width:120px;background:linear-gradient(90deg,#0028ff 0px,#0326ff 6px,#2d1aff 41px,#9100ff 120px)"></i>
<i style="top:268px;left:171px;width:117px;background:linear-gradient(90deg,#0026ff 0px,#2b1aff 39px,#8d00ff 117px)"></i>
<i style="top:270px;left:171px;width:115px;background:linear-gradient(90deg,#0025ff 0px,#0124ff 4px,#1c1dff 27px,#80f 115px)"></i>
<i style="top:272px;left:171px;width:113px;background:linear-gradient(90deg,#0024ff 0px,#191cff 25px,#8400ff 113px)"></i>
<i style="top:274px;left:172px;width:110px;background:linear-gradient(90deg,#0023ff 0px,#0e1eff 15px,#8000ff 110px)"></i>
<i style="top:276px;left:172px;width:108px;background:linear-gradient(90deg,#02f 0px,#191aff 25px,#7c00ff 108px)"></i>
<i style="top:278px;left:172px;width:106px;background:linear-gradient(90deg,#0021ff 0px,#041fff 7px,#7800ff 106px)"></i>
<i style="top:280px;left:173px;width:103px;background:linear-gradient(90deg,#0020ff 0px,#1918ff 25px,#7500ff 103px)"></i>
<i style="top:282px;left:173px;width:102px;background:linear-gradient(90deg,#001fff 0px,#0b1bff 13px,#7200ff 102px)"></i>
<i style="top:284px;left:173px;width:100px;background:linear-gradient(90deg,#001eff 0px,#051cff 8px,#6e00ff 100px)"></i>
<i style="top:286px;left:174px;width:97px;background:linear-gradient(90deg,#001dff 0px,#1417ff 21px,#6b00ff 97px)"></i>
<i style="top:288px;left:174px;width:95px;background:linear-gradient(90deg,#001cff 0px,#0e17ff 16px,#6700ff 95px)"></i>
<i style="top:290px;left:174px;width:93px;background:linear-gradient(90deg,#001bff 0px,#0619ff 9px,#6400ff 93px)"></i>
<i style="top:292px;left:175px;width:90px;background:linear-gradient(90deg,#001aff 0px,#6000ff 90px)"></i>
<i style="top:294px;left:175px;width:88px;background:linear-gradient(90deg,#001aff 0px,#0118ff 4px,#5d00ff 88px)"></i>
<i style="top:296px;left:175px;width:86px;background:linear-gradient(90deg,#0019ff 0px,#0816ff 11px,#5a00ff 86px)"></i>
<i style="top:298px;left:176px;width:83px;background:linear-gradient(90deg,#0018ff 0px,#5600ff 83px)"></i>
<i style="top:300px;left:176px;width:81px;background:linear-gradient(90deg,#0017ff 0px,#0216ff 5px,#5300ff 81px)"></i>
<i style="top:302px;left:176px;width:79px;background:linear-gradient(90deg,#0016ff 0px,#0e11ff 17px,#5000ff 79px)"></i>
<i style="top:304px;left:177px;width:76px;background:linear-gradient(90deg,#0015ff 0px,#4d00ff 76px)"></i>
<i style="top:306px;left:177px;width:74px;background:linear-gradient(90deg,#0014ff 0px,#4a00ff 74px)"></i>
<i style="top:308px;left:177px;width:72px;background:linear-gradient(90deg,#0014ff 0px,#4700ff 72px)"></i>
<i style="top:310px;left:178px;width:69px;background:linear-gradient(90deg,#0013ff 0px,#40f 69px)"></i>
<i style="top:312px;left:178px;width:67px;background:linear-gradient(90deg,#0012ff 0px,#4100ff 67px)"></i>
<i style="top:314px;left:178px;width:65px;background:linear-gradient(90deg,#01f 0px,#3e00ff 65px)"></i>
<i style="top:316px;left:178px;width:63px;background:linear-gradient(90deg,#01f 0px,#3b00ff 63px)"></i>
<i style="top:318px;left:179px;width:60px;background:linear-gradient(90deg,#0010ff 0px,#3900ff 60px)"></i>
<i style="top:320px;left:179px;width:58px;background:linear-gradient(90deg,#000fff 0px,#3600ff 58px)"></i>
<i style="top:322px;left:179px;width:56px;background:linear-gradient(90deg,#000eff 0px,#30f 56px)"></i>
<i style="top:324px;left:180px;width:53px;background:linear-gradient(90deg,#000eff 0px,#3100ff 53px)"></i>
<i style="top:326px;left:180px;width:51px;background:linear-gradient(90deg,#000dff 0px,#2e00ff 51px)"></i>
<i style="top:328px;left:180px;width:49px;background:linear-gradient(90deg,#000cff 0px,#2c00ff 49px)"></i>
<i style="top:330px;left:181px;width:47px;background:linear-gradient(90deg,#000bff 0px,#2a00ff 47px)"></i>
<i style="top:332px;left:181px;width:45px;background:linear-gradient(90deg,#000bff 0px,#2700ff 45px)"></i>
<i style="top:334px;left:181px;width:43px;background:linear-gradient(90deg,#000aff 0px,#2500ff 43px)"></i>
<i style="top:336px;left:182px;width:40px;background:linear-gradient(90deg,#0009ff 0px,#2300ff 40px)"></i>
<i style="top:338px;left:182px;width:38px;background:linear-gradient(90deg,#0009ff 0px,#2000ff 38px)"></i>
<i style="top:340px;left:182px;width:36px;background:linear-gradient(90deg,#0008ff 0px,#1e00ff 36px)"></i>
<i style="top:342px;left:183px;width:33px;background:linear-gradient(90deg,#0007ff 0px,#1c00ff 33px)"></i>
<i style="top:344px;left:183px;width:31px;background:linear-gradient(90deg,#0007ff 0px,#1900ff 31px)"></i>
<i style="top:346px;left:183px;width:29px;background:linear-gradient(90deg,#0006ff 0px,#1700ff 29px)"></i>
<i style="top:348px;left:184px;width:26px;background:linear-gradient(90deg,#0006ff 0px,#1500ff 26px)"></i>
<i style="top:350px;left:184px;width:24px;background:linear-gradient(90deg,#0005ff 0px,#1300ff 24px)"></i>
<i style="top:352px;left:184px;width:22px;background:linear-gradient(90deg,#0005ff 0px,#10f 22px)"></i>
<i style="top:354px;left:185px;width:19px;background:linear-gradient(90deg,#0004ff 0px,#0e00ff 19px)"></i>
<i style="top:356px;left:185px;width:17px;background:linear-gradient(90deg,#0003ff 0px,#0c00ff 17px)"></i>
<i style="top:358px;left:185px;width:15px;background:linear-gradient(90deg,#0003ff 0px,#0a00ff 15px)"></i>
<i style="top:360px;left:186px;width:12px;background:linear-gradient(90deg,#0002ff 0px,#0800ff 12px)"></i>
<i style="top:362px;left:186px;width:10px;background:linear-gradient(90deg,#0002ff 0px,#0600ff 10px)"></i>
<i style="top:364px;left:186px;width:8px;background:linear-gradient(90deg,#0001ff 0px,#0400ff 8px)"></i>
<i style="top:366px;left:187px;width:5px;background:linear-gradient(90deg,#00f 0px,#0200ff 5px)"></i></div></div>
<svg style="left:0;top:0" width="1920" height="1146" viewBox="0 0 1920 1146"><rect x="1386.7" y="241.4" width="13.6" height="13.6" fill="none" stroke="#fff" stroke-opacity=".92" stroke-width="1.4"/><rect x="1411.6" y="265.9" width="13.6" height="13.6" fill="none" stroke="#fff" stroke-opacity=".92" stroke-width="1.4"/><rect x="1451.7" y="257.7" width="13.6" height="13.6" fill="none" stroke="#fff" stroke-opacity=".92" stroke-width="1.4"/><rect x="1472.5" y="249.4" width="13.6" height="13.6" fill="none" stroke="#fff" stroke-opacity=".92" stroke-width="1.4"/><rect x="1499.8" y="253.8" width="13.6" height="13.6" fill="none" stroke="#fff" stroke-opacity=".92" stroke-width="1.4"/><rect x="1532.0" y="260.8" width="13.6" height="13.6" fill="none" stroke="#fff" stroke-opacity=".92" stroke-width="1.4"/><rect x="1576.2" y="264.7" width="13.6" height="13.6" fill="none" stroke="#fff" stroke-opacity=".92" stroke-width="1.4"/><rect x="1448.8" y="280.1" width="13.6" height="13.6" fill="none" stroke="#fff" stroke-opacity=".92" stroke-width="1.4"/><rect x="1515.1" y="293.8" width="13.6" height="13.6" fill="none" stroke="#fff" stroke-opacity=".92" stroke-width="1.4"/><rect x="1504.2" y="300.7" width="13.6" height="13.6" fill="none" stroke="#fff" stroke-opacity=".92" stroke-width="1.4"/><rect x="1418.2" y="311.7" width="13.6" height="13.6" fill="none" stroke="#fff" stroke-opacity=".92" stroke-width="1.4"/><rect x="1401.7" y="331.6" width="13.6" height="13.6" fill="none" stroke="#fff" stroke-opacity=".92" stroke-width="1.4"/><rect x="1595.3" y="307.8" width="13.6" height="13.6" fill="none" stroke="#fff" stroke-opacity=".92" stroke-width="1.4"/><rect x="1657.6" y="295.6" width="13.6" height="13.6" fill="none" stroke="#fff" stroke-opacity=".92" stroke-width="1.4"/><rect x="1739.5" y="274.4" width="13.6" height="13.6" fill="none" stroke="#fff" stroke-opacity=".92" stroke-width="1.4"/><rect x="1407.2" y="362.8" width="13.6" height="13.6" fill="none" stroke="#fff" stroke-opacity=".92" stroke-width="1.4"/><rect x="1442.2" y="360.2" width="13.6" height="13.6" fill="none" stroke="#fff" stroke-opacity=".92" stroke-width="1.4"/><rect x="1462.6" y="365.8" width="13.6" height="13.6" fill="none" stroke="#fff" stroke-opacity=".92" stroke-width="1.4"/><rect x="1498.6" y="383.8" width="13.6" height="13.6" fill="none" stroke="#fff" stroke-opacity=".92" stroke-width="1.4"/><rect x="1562.2" y="354.6" width="13.6" height="13.6" fill="none" stroke="#fff" stroke-opacity=".92" stroke-width="1.4"/><rect x="1444.6" y="413.7" width="13.6" height="13.6" fill="none" stroke="#fff" stroke-opacity=".92" stroke-width="1.4"/><rect x="1581.7" y="434.8" width="13.6" height="13.6" fill="none" stroke="#fff" stroke-opacity=".92" stroke-width="1.4"/><rect x="1444.6" y="465.4" width="13.6" height="13.6" fill="none" stroke="#fff" stroke-opacity=".92" stroke-width="1.4"/><rect x="1442.3" y="578.6" width="13.6" height="13.6" fill="none" stroke="#fff" stroke-opacity=".92" stroke-width="1.4"/><rect x="1465.800" y="320.200" width="13.400" height="13.400" fill="none" stroke="#000" stroke-width="1.600"/><circle cx="1471.5" cy="325.8" r="4.300" fill="#666" stroke="#222" stroke-width="1.100"/><circle cx="1472.9" cy="327.2" r="4.300" fill="#8a8a8a" stroke="#222" stroke-width="1.100"/><circle cx="1472.1" cy="325.2" r="4.300" fill="#9c9c9c" stroke="#222" stroke-width="1.100"/><circle cx="1472.5" cy="326.4" r="4.300" fill="#a4a4a4" stroke="#222" stroke-width="1.100"/><circle cx="1502.750" cy="335.600" r="4.800" fill="#000"/><circle cx="1385.0" cy="244.1" r="4.300" fill="#00ff00" stroke="#141414" stroke-width="1.200"/><circle cx="1412.8" cy="267.5" r="4.300" fill="#50964c" stroke="#141414" stroke-width="1.200"/><circle cx="1455.5" cy="260.6" r="4.300" fill="#a8bc4c" stroke="#141414" stroke-width="1.200"/><circle cx="1479.5" cy="254.0" r="4.300" fill="#ffff00" stroke="#141414" stroke-width="1.200"/><circle cx="1511.0" cy="257.8" r="4.300" fill="#ecc832" stroke="#141414" stroke-width="1.200"/><circle cx="1546.9" cy="265.2" r="4.300" fill="#e6a632" stroke="#141414" stroke-width="1.200"/><circle cx="1589.8" cy="270.5" r="4.300" fill="#d87e32" stroke="#141414" stroke-width="1.200"/><circle cx="1453.2" cy="283.1" r="4.300" fill="#5a6a46" stroke="#141414" stroke-width="1.200"/><circle cx="1527.5" cy="296.6" r="4.300" fill="#6e4c3c" stroke="#141414" stroke-width="1.200"/><circle cx="1515.4" cy="304.8" r="4.300" fill="#be927e" stroke="#141414" stroke-width="1.200"/><circle cx="1422.5" cy="318.8" r="4.300" fill="#64b4a0" stroke="#141414" stroke-width="1.200"/><circle cx="1402.9" cy="340.9" r="4.300" fill="#00ffff" stroke="#141414" stroke-width="1.200"/><circle cx="1610.6" cy="309.4" r="4.300" fill="#c85664" stroke="#141414" stroke-width="1.200"/><circle cx="1676.8" cy="298.1" r="4.300" fill="#b4343e" stroke="#141414" stroke-width="1.200"/><circle cx="1748.5" cy="280.1" r="4.300" fill="#ff0000" stroke="#141414" stroke-width="1.200"/><circle cx="1410.4" cy="372.2" r="4.300" fill="#008ca0" stroke="#141414" stroke-width="1.200"/><circle cx="1446.0" cy="370.1" r="4.300" fill="#647ea6" stroke="#141414" stroke-width="1.200"/><circle cx="1469.6" cy="374.0" r="4.300" fill="#8682b4" stroke="#141414" stroke-width="1.200"/><circle cx="1491.4" cy="403.1" r="4.300" fill="#5a3c64" stroke="#141414" stroke-width="1.200"/><circle cx="1576.2" cy="362.0" r="4.300" fill="#be5696" stroke="#141414" stroke-width="1.200"/><circle cx="1450.2" cy="432.5" r="4.300" fill="#5464aa" stroke="#141414" stroke-width="1.200"/><circle cx="1585.9" cy="447.5" r="4.300" fill="#ff00ff" stroke="#141414" stroke-width="1.200"/><circle cx="1453.1" cy="485.8" r="4.300" fill="#3c42a0" stroke="#141414" stroke-width="1.200"/><circle cx="1450.2" cy="593.1" r="4.300" fill="#0000ff" stroke="#141414" stroke-width="1.200"/></svg>
<div class="a " style="left:1700px;top:541.6px;width:202.4px;height:134.2px;background:#6e6e6e"></div>
<div id="gi" class="a" style="left:1701.5px;top:543.2px;width:199.6px;height:131px;overflow:hidden"><i style="top:0px;left:0px;width:200px;background:linear-gradient(90deg,#6a9900 0px,#990 158px,#998d00 200px)"></i>
<i style="top:2px;left:0px;width:200px;background:linear-gradient(90deg,#6a9900 0px,#990 159px,#998c00 200px)"></i>
<i style="top:4px;left:0px;width:200px;background:linear-gradient(90deg,#6b9900 0px,#990 155px,#998c00 200px)"></i>
<i style="top:6px;left:0px;width:200px;background:linear-gradient(90deg,#6b9900 0px,#990 155px,#998b00 200px)"></i>
<i style="top:8px;left:0px;width:200px;background:linear-gradient(90deg,#6c9900 0px,#990 151px,#998b00 200px)"></i>
<i style="top:10px;left:0px;width:200px;background:linear-gradient(90deg,#6c9900 0px,#990 149px,#998a00 200px)"></i>
<i style="top:12px;left:0px;width:200px;background:linear-gradient(90deg,#6c9900 0px,#990 147px,#998a00 200px)"></i>
<i style="top:14px;left:0px;width:200px;background:linear-gradient(90deg,#6d9900 0px,#990 145px,#998900 200px)"></i>
<i style="top:16px;left:0px;width:200px;background:linear-gradient(90deg,#6d9900 0px,#990 144px,#998900 200px)"></i>
<i style="top:18px;left:0px;width:200px;background:linear-gradient(90deg,#6e9901 0px,#990 142px,#980 200px)"></i>
<i style="top:20px;left:0px;width:200px;background:linear-gradient(90deg,#6e9901 0px,#990 140px,#980 200px)"></i>
<i style="top:22px;left:0px;width:200px;background:linear-gradient(90deg,#6f9901 0px,#990 138px,#998700 200px)"></i>
<i style="top:24px;left:0px;width:200px;background:linear-gradient(90deg,#6f9901 0px,#990 136px,#998700 200px)"></i>
<i style="top:26px;left:0px;width:200px;background:linear-gradient(90deg,#709902 0px,#990 134px,#998600 200px)"></i>
<i style="top:28px;left:0px;width:200px;background:linear-gradient(90deg,#709902 0px,#990 133px,#998600 200px)"></i>
<i style="top:30px;left:0px;width:200px;background:linear-gradient(90deg,#719902 0px,#990 131px,#998500 200px)"></i>
<i style="top:32px;left:0px;width:200px;background:linear-gradient(90deg,#719902 0px,#990 129px,#998500 200px)"></i>
<i style="top:34px;left:0px;width:200px;background:linear-gradient(90deg,#729903 0px,#990 127px,#998400 200px)"></i>
<i style="top:36px;left:0px;width:200px;background:linear-gradient(90deg,#729903 0px,#990 125px,#998400 200px)"></i>
<i style="top:38px;left:0px;width:200px;background:linear-gradient(90deg,#739903 0px,#990 123px,#998300 200px)"></i>
<i style="top:40px;left:0px;width:200px;background:linear-gradient(90deg,#739903 0px,#990 122px,#998300 200px)"></i>
<i style="top:42px;left:0px;width:200px;background:linear-gradient(90deg,#739904 0px,#990 120px,#998200 200px)"></i>
<i style="top:44px;left:0px;width:200px;background:linear-gradient(90deg,#749904 0px,#990 118px,#998200 200px)"></i>
<i style="top:46px;left:0px;width:200px;background:linear-gradient(90deg,#749904 0px,#990 116px,#998100 200px)"></i>
<i style="top:48px;left:0px;width:200px;background:linear-gradient(90deg,#759904 0px,#990 114px,#998100 200px)"></i>
<i style="top:50px;left:0px;width:200px;background:linear-gradient(90deg,#759905 0px,#990 112px,#998000 200px)"></i>
<i style="top:52px;left:0px;width:200px;background:linear-gradient(90deg,#769905 0px,#990 111px,#998000 200px)"></i>
<i style="top:54px;left:0px;width:200px;background:linear-gradient(90deg,#769905 0px,#990 109px,#997f00 200px)"></i>
<i style="top:56px;left:0px;width:200px;background:linear-gradient(90deg,#779906 0px,#990 107px,#997f00 200px)"></i>
<i style="top:58px;left:0px;width:200px;background:linear-gradient(90deg,#779906 0px,#990 105px,#997e00 200px)"></i>
<i style="top:60px;left:0px;width:200px;background:linear-gradient(90deg,#789906 0px,#990 103px,#997e00 200px)"></i>
<i style="top:62px;left:0px;width:200px;background:linear-gradient(90deg,#789906 0px,#990 101px,#997d00 200px)"></i>
<i style="top:64px;left:0px;width:200px;background:linear-gradient(90deg,#799907 0px,#990 99px,#997d00 200px)"></i>
<i style="top:66px;left:0px;width:200px;background:linear-gradient(90deg,#799907 0px,#990 98px,#997c00 200px)"></i>
<i style="top:68px;left:0px;width:200px;background:linear-gradient(90deg,#7a9907 0px,#999901 96px,#997c00 200px)"></i>
<i style="top:70px;left:0px;width:200px;background:linear-gradient(90deg,#7a9907 0px,#999901 94px,#997b00 200px)"></i>
<i style="top:72px;left:0px;width:200px;background:linear-gradient(90deg,#7b9908 0px,#999902 92px,#997b00 200px)"></i>
<i style="top:74px;left:0px;width:200px;background:linear-gradient(90deg,#7c9908 0px,#999902 90px,#997a00 200px)"></i>
<i style="top:76px;left:0px;width:200px;background:linear-gradient(90deg,#7c9908 0px,#999902 88px,#997a00 200px)"></i>
<i style="top:78px;left:0px;width:200px;background:linear-gradient(90deg,#7d9909 0px,#999903 87px,#997900 200px)"></i>
<i style="top:80px;left:0px;width:200px;background:linear-gradient(90deg,#7d9909 0px,#999903 85px,#997900 200px)"></i>
<i style="top:82px;left:0px;width:200px;background:linear-gradient(90deg,#7e9909 0px,#999904 83px,#997800 200px)"></i>
<i style="top:84px;left:0px;width:200px;background:linear-gradient(90deg,#7e9909 0px,#999904 81px,#997800 200px)"></i>
<i style="top:86px;left:0px;width:200px;background:linear-gradient(90deg,#7f990a 0px,#999904 79px,#970 200px)"></i>
<i style="top:88px;left:0px;width:200px;background:linear-gradient(90deg,#7f990a 0px,#999905 77px,#970 200px)"></i>
<i style="top:90px;left:0px;width:200px;background:linear-gradient(90deg,#80990a 0px,#999905 76px,#997600 200px)"></i>
<i style="top:92px;left:0px;width:200px;background:linear-gradient(90deg,#80990b 0px,#999906 74px,#997600 200px)"></i>
<i style="top:94px;left:0px;width:200px;background:linear-gradient(90deg,#81990b 0px,#999906 72px,#997500 200px)"></i>
<i style="top:96px;left:0px;width:200px;background:linear-gradient(90deg,#81990b 0px,#999907 70px,#997500 200px)"></i>
<i style="top:98px;left:0px;width:200px;background:linear-gradient(90deg,#82990c 0px,#999907 68px,#997400 200px)"></i>
<i style="top:100px;left:0px;width:200px;background:linear-gradient(90deg,#83990c 0px,#999907 66px,#997400 200px)"></i>
<i style="top:102px;left:0px;width:200px;background:linear-gradient(90deg,#83990c 0px,#999908 65px,#997300 200px)"></i>
<i style="top:104px;left:0px;width:200px;background:linear-gradient(90deg,#84990c 0px,#999908 63px,#997300 200px)"></i>
<i style="top:106px;left:0px;width:200px;background:linear-gradient(90deg,#84990d 0px,#999909 61px,#997300 200px)"></i>
<i style="top:108px;left:0px;width:200px;background:linear-gradient(90deg,#85990d 0px,#999909 59px,#997200 200px)"></i>
<i style="top:110px;left:0px;width:200px;background:linear-gradient(90deg,#85990d 0px,#99990a 57px,#997200 200px)"></i>
<i style="top:112px;left:0px;width:200px;background:linear-gradient(90deg,#86990e 0px,#99990a 55px,#997100 200px)"></i>
<i style="top:114px;left:0px;width:200px;background:linear-gradient(90deg,#87990e 0px,#99990a 53px,#997100 200px)"></i>
<i style="top:116px;left:0px;width:200px;background:linear-gradient(90deg,#87990e 0px,#99990b 52px,#997000 200px)"></i>
<i style="top:118px;left:0px;width:200px;background:linear-gradient(90deg,#88990f 0px,#99990b 50px,#997000 200px)"></i>
<i style="top:120px;left:0px;width:200px;background:linear-gradient(90deg,#88990f 0px,#99990c 48px,#996f00 200px)"></i>
<i style="top:122px;left:0px;width:200px;background:linear-gradient(90deg,#89990f 0px,#99990c 46px,#996f01 200px)"></i>
<i style="top:124px;left:0px;width:200px;background:linear-gradient(90deg,#899910 0px,#99990d 44px,#996e01 200px)"></i>
<i style="top:126px;left:0px;width:200px;background:linear-gradient(90deg,#8a9910 0px,#99990d 42px,#996e01 200px)"></i>
<i style="top:128px;left:0px;width:200px;background:linear-gradient(90deg,#8b9910 0px,#99990d 41px,#998007 121px,#996e01 200px)"></i>
<i style="top:130px;left:0px;width:200px;background:linear-gradient(90deg,#8b9911 0px,#99990e 39px,#998308 108px,#996d01 200px)"></i><div class="a" style="left:0;top:0;width:199.6px;height:131px;clip-path:polygon(-19.96px 3.18px,219.56px 128.02px,219.56px 181.00px,-19.96px 181.00px)"><i style="top:0px;left:0px;width:200px;background:linear-gradient(90deg,#b0ff00 0px,#ff0 159px,#ffeb00 200px)"></i>
<i style="top:2px;left:0px;width:200px;background:linear-gradient(90deg,#b1ff00 0px,#ff0 157px,#ffea00 200px)"></i>
<i style="top:4px;left:0px;width:200px;background:linear-gradient(90deg,#b2ff00 0px,#ff0 155px,#ffe900 200px)"></i>
<i style="top:6px;left:0px;width:200px;background:linear-gradient(90deg,#b3ff00 0px,#ff0 153px,#ffe800 200px)"></i>
<i style="top:8px;left:0px;width:200px;background:linear-gradient(90deg,#b3ff00 0px,#ff0 153px,#ffe700 200px)"></i>
<i style="top:10px;left:0px;width:200px;background:linear-gradient(90deg,#b4ff00 0px,#ff0 150px,#ffe700 200px)"></i>
<i style="top:12px;left:0px;width:200px;background:linear-gradient(90deg,#b5ff00 0px,#ff0 148px,#ffe600 200px)"></i>
<i style="top:14px;left:0px;width:200px;background:linear-gradient(90deg,#b6ff00 0px,#ff0 146px,#ffe500 200px)"></i>
<i style="top:16px;left:0px;width:200px;background:linear-gradient(90deg,#b6ff01 0px,#ff0 144px,#ffe400 200px)"></i>
<i style="top:18px;left:0px;width:200px;background:linear-gradient(90deg,#b7ff01 0px,#ff0 142px,#ffe300 200px)"></i>
<i style="top:20px;left:0px;width:200px;background:linear-gradient(90deg,#b8ff02 0px,#ff0 141px,#ffe200 200px)"></i>
<i style="top:22px;left:0px;width:200px;background:linear-gradient(90deg,#b9ff02 0px,#ff0 139px,#ffe100 200px)"></i>
<i style="top:24px;left:0px;width:200px;background:linear-gradient(90deg,#b9ff02 0px,#ff0 137px,#ffe000 200px)"></i>
<i style="top:26px;left:0px;width:200px;background:linear-gradient(90deg,#baff03 0px,#ff0 135px,#ffe000 200px)"></i>
<i style="top:28px;left:0px;width:200px;background:linear-gradient(90deg,#bbff03 0px,#ff0 133px,#ffdf00 200px)"></i>
<i style="top:30px;left:0px;width:200px;background:linear-gradient(90deg,#bcff04 0px,#caff00 29px,#ff0 131px,#ffde00 200px)"></i>
<i style="top:32px;left:0px;width:200px;background:linear-gradient(90deg,#bcff04 0px,#ff0 130px,#fd0 200px)"></i>
<i style="top:34px;left:0px;width:200px;background:linear-gradient(90deg,#bdff04 0px,#ff0 128px,#ffdc00 200px)"></i>
<i style="top:36px;left:0px;width:200px;background:linear-gradient(90deg,#beff05 0px,#d2ff00 41px,#ff0 126px,#ffdb00 200px)"></i>
<i style="top:38px;left:0px;width:200px;background:linear-gradient(90deg,#bfff05 0px,#d5ff00 45px,#ff0 124px,#ffda00 200px)"></i>
<i style="top:40px;left:0px;width:200px;background:linear-gradient(90deg,#c0ff06 0px,#d8ff00 49px,#ff0 122px,#ffda00 200px)"></i>
<i style="top:42px;left:0px;width:200px;background:linear-gradient(90deg,#c0ff06 0px,#dbff00 52px,#ff0 120px,#ffd900 200px)"></i>
<i style="top:44px;left:0px;width:200px;background:linear-gradient(90deg,#c1ff07 0px,#deff00 56px,#ff0 118px,#ffd800 200px)"></i>
<i style="top:46px;left:0px;width:200px;background:linear-gradient(90deg,#c2ff07 0px,#e1ff00 60px,#ff0 117px,#ffd700 200px)"></i>
<i style="top:48px;left:0px;width:200px;background:linear-gradient(90deg,#c3ff07 0px,#e4ff00 64px,#ff0 115px,#ffd600 200px)"></i>
<i style="top:50px;left:0px;width:200px;background:linear-gradient(90deg,#c4ff08 0px,#e7ff00 68px,#ff0 113px,#ffd500 200px)"></i>
<i style="top:52px;left:0px;width:200px;background:linear-gradient(90deg,#c5ff08 0px,#ff0 111px,#ffd500 200px)"></i>
<i style="top:54px;left:0px;width:200px;background:linear-gradient(90deg,#c5ff09 0px,#ff0 109px,#ffd400 200px)"></i>
<i style="top:56px;left:0px;width:200px;background:linear-gradient(90deg,#c6ff09 0px,#ff0 107px,#ffd300 200px)"></i>
<i style="top:58px;left:0px;width:200px;background:linear-gradient(90deg,#c7ff0a 0px,#ff0 106px,#ffd200 200px)"></i>
<i style="top:60px;left:0px;width:200px;background:linear-gradient(90deg,#c8ff0a 0px,#ff0 104px,#ffd100 200px)"></i>
<i style="top:62px;left:0px;width:200px;background:linear-gradient(90deg,#c9ff0b 0px,#ff0 102px,#ffd000 200px)"></i>
<i style="top:64px;left:0px;width:200px;background:linear-gradient(90deg,#caff0b 0px,#ff0 100px,#ffd000 200px)"></i>
<i style="top:66px;left:0px;width:200px;background:linear-gradient(90deg,#caff0c 0px,#ffff01 98px,#ffcf00 200px)"></i>
<i style="top:68px;left:0px;width:200px;background:linear-gradient(90deg,#cbff0c 0px,#ffff01 96px,#ffce00 200px)"></i>
<i style="top:70px;left:0px;width:200px;background:linear-gradient(90deg,#ccff0c 0px,#ffff02 95px,#ffcd00 200px)"></i>
<i style="top:72px;left:0px;width:200px;background:linear-gradient(90deg,#cdff0d 0px,#ffff02 93px,#fc0 200px)"></i>
<i style="top:74px;left:0px;width:200px;background:linear-gradient(90deg,#ceff0d 0px,#ffff03 91px,#fc0 200px)"></i>
<i style="top:76px;left:0px;width:200px;background:linear-gradient(90deg,#cfff0e 0px,#ffff04 89px,#ffcb00 200px)"></i>
<i style="top:78px;left:0px;width:200px;background:linear-gradient(90deg,#d0ff0e 0px,#ffff05 87px,#ffed00 122px,#ffca00 200px)"></i>
<i style="top:80px;left:0px;width:200px;background:linear-gradient(90deg,#d0ff0f 0px,#ffff05 85px,#ffea00 125px,#ffc900 200px)"></i>
<i style="top:82px;left:0px;width:200px;background:linear-gradient(90deg,#d1ff0f 0px,#ffff06 83px,#ffe700 129px,#ffc800 200px)"></i>
<i style="top:84px;left:0px;width:200px;background:linear-gradient(90deg,#d2ff10 0px,#ffff07 82px,#ffe400 133px,#ffc800 200px)"></i>
<i style="top:86px;left:0px;width:200px;background:linear-gradient(90deg,#d3ff10 0px,#ffff07 80px,#ffe200 137px,#ffc700 200px)"></i>
<i style="top:88px;left:0px;width:200px;background:linear-gradient(90deg,#d4ff11 0px,#ffff08 78px,#ffdf00 141px,#ffc600 200px)"></i>
<i style="top:90px;left:0px;width:200px;background:linear-gradient(90deg,#d5ff11 0px,#ffff09 76px,#fd0 144px,#ffc500 200px)"></i>
<i style="top:92px;left:0px;width:200px;background:linear-gradient(90deg,#d6ff12 0px,#ffff09 74px,#ffda00 148px,#ffc400 200px)"></i>
<i style="top:94px;left:0px;width:200px;background:linear-gradient(90deg,#d7ff12 0px,#ffff0a 72px,#ffd700 152px,#ffc400 200px)"></i>
<i style="top:96px;left:0px;width:200px;background:linear-gradient(90deg,#d8ff13 0px,#ffff0b 71px,#ffd500 156px,#ffc300 200px)"></i>
<i style="top:98px;left:0px;width:200px;background:linear-gradient(90deg,#d9ff13 0px,#ffff0b 69px,#ffdf04 130px,#ffc200 200px)"></i>
<i style="top:100px;left:0px;width:200px;background:linear-gradient(90deg,#daff14 0px,#ffff0c 67px,#ffe005 126px,#ffc100 200px)"></i>
<i style="top:102px;left:0px;width:200px;background:linear-gradient(90deg,#daff14 0px,#ffff0d 65px,#ffe005 124px,#ffc000 200px)"></i>
<i style="top:104px;left:0px;width:200px;background:linear-gradient(90deg,#dbff15 0px,#ffff0e 63px,#ffda04 135px,#ffc000 200px)"></i>
<i style="top:106px;left:0px;width:200px;background:linear-gradient(90deg,#dcff15 0px,#ffff0e 61px,#ffda05 133px,#ffbf00 200px)"></i>
<i style="top:108px;left:0px;width:200px;background:linear-gradient(90deg,#ddff16 0px,#ffff0f 60px,#ffdb06 129px,#ffbe00 200px)"></i>
<i style="top:110px;left:0px;width:200px;background:linear-gradient(90deg,#deff16 0px,#ffff10 58px,#ffdb07 127px,#ffbd00 200px)"></i>
<i style="top:112px;left:0px;width:200px;background:linear-gradient(90deg,#dfff17 0px,#ffff10 56px,#ffdb07 125px,#ffbd00 200px)"></i>
<i style="top:114px;left:0px;width:200px;background:linear-gradient(90deg,#e0ff17 0px,#ff1 54px,#ffdb08 123px,#ffbc00 200px)"></i>
<i style="top:116px;left:0px;width:200px;background:linear-gradient(90deg,#e1ff18 0px,#ffff12 52px,#ffdb08 121px,#fb0 200px)"></i>
<i style="top:118px;left:0px;width:200px;background:linear-gradient(90deg,#e2ff18 0px,#ffff13 50px,#ffdb09 119px,#ffba00 200px)"></i>
<i style="top:120px;left:0px;width:200px;background:linear-gradient(90deg,#e3ff19 0px,#ffff13 49px,#ffd608 128px,#ffba01 200px)"></i>
<i style="top:122px;left:0px;width:200px;background:linear-gradient(90deg,#e4ff19 0px,#ffff14 47px,#ffdc0b 113px,#ffb901 200px)"></i>
<i style="top:124px;left:0px;width:200px;background:linear-gradient(90deg,#e5ff1a 0px,#ffff15 45px,#ffdc0b 111px,#ffb801 200px)"></i>
<i style="top:126px;left:0px;width:200px;background:linear-gradient(90deg,#e6ff1a 0px,#ffff16 43px,#ffdc0c 109px,#ffb702 200px)"></i>
<i style="top:128px;left:0px;width:200px;background:linear-gradient(90deg,#e7ff1b 0px,#ffff16 41px,#ffd70b 118px,#ffb702 200px)"></i>
<i style="top:130px;left:0px;width:200px;background:linear-gradient(90deg,#e8ff1c 0px,#ffff17 39px,#ffd70c 116px,#ffb602 200px)"></i></div></div>
<svg style="left:1690px;top:540px" width="220" height="140" viewBox="1690 540 220 140"><rect x="1793.800" y="601.500" width="13.600" height="13.600" fill="none" stroke="#fff" stroke-width="1.300"/><circle cx="1824.500" cy="580.200" r="4.300" fill="#ffff00" stroke="#141414" stroke-width="1.200"/></svg>
<div class="a " style="left:1650px;top:684.5px;width:255px;height:28px;background:#333"></div>
<span class="t" style="left:1651.00px;top:689.53px;font-size:20.4px;line-height:20.4px;color:#f2f2f2;transform:scaleX(0.9778);">RGB Triplet: 255, 255, 0</span>
<span class="t" style="left:276.80px;top:761.79px;font-size:28.6px;line-height:28.6px;color:#f2f2f2;transform:scaleX(1.0402);">Avg dE2000: 4.02</span>
<span class="t" style="left:273.30px;top:803.09px;font-size:28.6px;line-height:28.6px;color:#f2f2f2;transform:scaleX(1.0524);">Max dE2000: 5.81</span>
<span class="t" style="left:240.80px;top:851.39px;font-size:28.6px;line-height:28.6px;color:#f2f2f2;transform:scaleX(1.0531);">Current Reading</span>
<span class="t" style="left:240.80px;top:891.28px;font-size:24px;line-height:24px;color:#f2f2f2;transform:scaleX(1.0451);">x: 0.4253</span>
<span class="t" style="left:399.30px;top:891.28px;font-size:24px;line-height:24px;color:#f2f2f2;transform:scaleX(1.0634);">y: 0.5158</span>
<span class="t" style="left:240.80px;top:932.48px;font-size:24px;line-height:24px;color:#f2f2f2;transform:scaleX(1.0219);">fL: 247</span>
<span class="t" style="left:240.80px;top:967.18px;font-size:24px;line-height:24px;color:#f2f2f2;transform:scaleX(1.0971);">cd/m²: 846.28</span>
<div class="a " style="left:550.1px;top:767px;width:1368.6px;height:232.5px;background:#1a1a1a"></div>
<div class="a " style="left:551.3px;top:768.3px;width:1366.2px;height:25.5px;background:linear-gradient(180deg,#2c2c2c 0,#262626 48%,#101010 52%,#141414 100%)"></div>
<div class="a " style="left:551.3px;top:793.75px;width:1366.2px;height:23.99px;background:#444"></div>
<div class="a " style="left:551.3px;top:817.44px;width:1366.2px;height:23.99px;background:#808080"></div>
<div class="a " style="left:551.3px;top:841.13px;width:1366.2px;height:23.99px;background:#444"></div>
<div class="a " style="left:551.3px;top:864.82px;width:1366.2px;height:23.99px;background:#808080"></div>
<div class="a " style="left:551.3px;top:888.51px;width:1366.2px;height:23.99px;background:#444"></div>
<div class="a " style="left:551.3px;top:912.2px;width:1366.2px;height:23.99px;background:#808080"></div>
<div class="a " style="left:551.3px;top:935.89px;width:1366.2px;height:23.99px;background:#444"></div>
<div class="a " style="left:551.3px;top:959.58px;width:1366.2px;height:23.99px;background:#808080"></div>
<div class="a " style="left:1300px;top:865px;width:77.7px;height:23.7px;background:#f0f0f0"></div>
<div class="a" style="left:0;top:760px;width:1917.5px;height:240px;overflow:hidden"><span class="t" style="left:725.80px;top:13.79px;font-size:14.9px;line-height:14.9px;color:#f4f4f4;transform:scaleX(1.2603);">White</span><span class="t" style="left:788.80px;top:13.79px;font-size:14.9px;line-height:14.9px;color:#f4f4f4;transform:scaleX(1.1660);">Gray 80</span><span class="t" style="left:860.80px;top:13.79px;font-size:14.9px;line-height:14.9px;color:#f4f4f4;transform:scaleX(1.1566);">Gray 65</span><span class="t" style="left:932.50px;top:13.79px;font-size:14.9px;line-height:14.9px;color:#f4f4f4;transform:scaleX(1.1698);">Gray 50</span><span class="t" style="left:1004.20px;top:13.79px;font-size:14.9px;line-height:14.9px;color:#f4f4f4;transform:scaleX(1.1698);">Gray 35</span><span class="t" style="left:1079.30px;top:13.79px;font-size:14.9px;line-height:14.9px;color:#f4f4f4;transform:scaleX(1.1527);">Black</span><span class="t" style="left:1133.60px;top:13.79px;font-size:14.9px;line-height:14.9px;color:#f4f4f4;transform:scaleX(1.1612);">Dark Skin</span><span class="t" style="left:1219.40px;top:13.79px;font-size:14.9px;line-height:14.9px;color:#f4f4f4;transform:scaleX(1.1767);">Light Skin</span><span class="t" style="left:1306.20px;top:13.79px;font-size:14.9px;line-height:14.9px;color:#f4f4f4;transform:scaleX(1.1479);">Blue Sky</span><span class="t" style="left:1383.80px;top:13.79px;font-size:14.9px;line-height:14.9px;color:#f4f4f4;transform:scaleX(1.1663);">Foliage</span><span class="t" style="left:1451.70px;top:13.79px;font-size:14.9px;line-height:14.9px;color:#f4f4f4;transform:scaleX(1.2075);">Blue Flower</span><span class="t" style="left:1556.30px;top:13.79px;font-size:14.9px;line-height:14.9px;color:#f4f4f4;transform:scaleX(1.1900);">Bluish Green</span><span class="t" style="left:1669.10px;top:13.79px;font-size:14.9px;line-height:14.9px;color:#f4f4f4;transform:scaleX(1.1771);">Orange</span><span class="t" style="left:1737.70px;top:13.79px;font-size:14.9px;line-height:14.9px;color:#f4f4f4;transform:scaleX(1.2017);">Purplish Blue</span><span class="t" style="left:1854.10px;top:13.79px;font-size:14.9px;line-height:14.9px;color:#f4f4f4;transform:scaleX(1.2470);">Modera</span><span class="t" style="left:567.50px;top:40.04px;font-size:14.9px;line-height:14.9px;color:#f6f6f6;font-weight:700;transform:scaleX(1.2330);">x: CIE31</span><span class="t" style="left:721.30px;top:40.12px;font-size:14.8px;line-height:14.8px;color:#f4f4f4;transform:scaleX(1.2500);">0.31</span><span class="t" style="left:788.80px;top:40.12px;font-size:14.8px;line-height:14.8px;color:#f4f4f4;transform:scaleX(1.2500);">0.31</span><span class="t" style="left:860.80px;top:40.12px;font-size:14.8px;line-height:14.8px;color:#f4f4f4;transform:scaleX(1.2500);">0.31</span><span class="t" style="left:932.50px;top:40.12px;font-size:14.8px;line-height:14.8px;color:#f4f4f4;transform:scaleX(1.2500);">0.31</span><span class="t" style="left:1004.20px;top:40.12px;font-size:14.8px;line-height:14.8px;color:#f4f4f4;transform:scaleX(1.2500);">0.31</span><span class="t" style="left:1077.00px;top:40.12px;font-size:14.8px;line-height:14.8px;color:#f4f4f4;transform:scaleX(1.2500);">0.34</span><span class="t" style="left:1133.60px;top:40.12px;font-size:14.8px;line-height:14.8px;color:#f4f4f4;transform:scaleX(1.2500);">0.41</span><span class="t" style="left:1219.40px;top:40.12px;font-size:14.8px;line-height:14.8px;color:#f4f4f4;transform:scaleX(1.2500);">0.39</span><span class="t" style="left:1306.20px;top:40.12px;font-size:14.8px;line-height:14.8px;color:#f4f4f4;transform:scaleX(1.2500);">0.25</span><span class="t" style="left:1383.80px;top:40.12px;font-size:14.8px;line-height:14.8px;color:#f4f4f4;transform:scaleX(1.2500);">0.34</span><span class="t" style="left:1451.70px;top:40.12px;font-size:14.8px;line-height:14.8px;color:#f4f4f4;transform:scaleX(1.2500);">0.27</span><span class="t" style="left:1556.30px;top:40.12px;font-size:14.8px;line-height:14.8px;color:#f4f4f4;transform:scaleX(1.2500);">0.26</span><span class="t" style="left:1669.10px;top:40.12px;font-size:14.8px;line-height:14.8px;color:#f4f4f4;transform:scaleX(1.2500);">0.52</span><span class="t" style="left:1737.70px;top:40.12px;font-size:14.8px;line-height:14.8px;color:#f4f4f4;transform:scaleX(1.2500);">0.21</span><span class="t" style="left:1854.10px;top:40.12px;font-size:14.8px;line-height:14.8px;color:#f4f4f4;transform:scaleX(1.2500);">0.48</span><span class="t" style="left:567.50px;top:63.73px;font-size:14.9px;line-height:14.9px;color:#f6f6f6;font-weight:700;transform:scaleX(1.2330);">y: CIE31</span><span class="t" style="left:721.30px;top:63.81px;font-size:14.8px;line-height:14.8px;color:#f4f4f4;transform:scaleX(1.2500);">0.33</span><span class="t" style="left:788.80px;top:63.81px;font-size:14.8px;line-height:14.8px;color:#f4f4f4;transform:scaleX(1.2500);">0.33</span><span class="t" style="left:860.80px;top:63.81px;font-size:14.8px;line-height:14.8px;color:#f4f4f4;transform:scaleX(1.2500);">0.33</span><span class="t" style="left:932.50px;top:63.81px;font-size:14.8px;line-height:14.8px;color:#f4f4f4;transform:scaleX(1.2500);">0.33</span><span class="t" style="left:1004.20px;top:63.81px;font-size:14.8px;line-height:14.8px;color:#f4f4f4;transform:scaleX(1.2500);">0.33</span><span class="t" style="left:1077.00px;top:63.81px;font-size:14.8px;line-height:14.8px;color:#f4f4f4;transform:scaleX(1.2500);">0.30</span><span class="t" style="left:1133.60px;top:63.81px;font-size:14.8px;line-height:14.8px;color:#f4f4f4;transform:scaleX(1.2500);">0.37</span><span class="t" style="left:1219.40px;top:63.81px;font-size:14.8px;line-height:14.8px;color:#f4f4f4;transform:scaleX(1.2500);">0.36</span><span class="t" style="left:1306.20px;top:63.81px;font-size:14.8px;line-height:14.8px;color:#f4f4f4;transform:scaleX(1.2500);">0.26</span><span class="t" style="left:1383.80px;top:63.81px;font-size:14.8px;line-height:14.8px;color:#f4f4f4;transform:scaleX(1.2500);">0.44</span><span class="t" style="left:1451.70px;top:63.81px;font-size:14.8px;line-height:14.8px;color:#f4f4f4;transform:scaleX(1.2500);">0.25</span><span class="t" style="left:1556.30px;top:63.81px;font-size:14.8px;line-height:14.8px;color:#f4f4f4;transform:scaleX(1.2500);">0.37</span><span class="t" style="left:1669.10px;top:63.81px;font-size:14.8px;line-height:14.8px;color:#f4f4f4;transform:scaleX(1.2500);">0.41</span><span class="t" style="left:1737.70px;top:63.81px;font-size:14.8px;line-height:14.8px;color:#f4f4f4;transform:scaleX(1.2500);">0.18</span><span class="t" style="left:1854.10px;top:63.81px;font-size:14.8px;line-height:14.8px;color:#f4f4f4;transform:scaleX(1.2500);">0.32</span><span class="t" style="left:567.50px;top:87.42px;font-size:14.9px;line-height:14.9px;color:#f6f6f6;font-weight:700;transform:scaleX(1.1571);">Y</span><span class="t" style="left:721.30px;top:87.50px;font-size:14.8px;line-height:14.8px;color:#f4f4f4;transform:scaleX(1.2500);">923.29</span><span class="t" style="left:788.80px;top:87.50px;font-size:14.8px;line-height:14.8px;color:#f4f4f4;transform:scaleX(1.2500);">648.17</span><span class="t" style="left:860.80px;top:87.50px;font-size:14.8px;line-height:14.8px;color:#f4f4f4;transform:scaleX(1.2500);">506.95</span><span class="t" style="left:932.50px;top:87.50px;font-size:14.8px;line-height:14.8px;color:#f4f4f4;transform:scaleX(1.2500);">376.56</span><span class="t" style="left:1004.20px;top:87.50px;font-size:14.8px;line-height:14.8px;color:#f4f4f4;transform:scaleX(1.2500);">254.00</span><span class="t" style="left:1077.00px;top:87.50px;font-size:14.8px;line-height:14.8px;color:#f4f4f4;transform:scaleX(1.2500);">0.08</span><span class="t" style="left:1133.60px;top:87.50px;font-size:14.8px;line-height:14.8px;color:#f4f4f4;transform:scaleX(1.2500);">71.59</span><span class="t" style="left:1219.40px;top:87.50px;font-size:14.8px;line-height:14.8px;color:#f4f4f4;transform:scaleX(1.2500);">259.56</span><span class="t" style="left:1306.20px;top:87.50px;font-size:14.8px;line-height:14.8px;color:#f4f4f4;transform:scaleX(1.2500);">130.77</span><span class="t" style="left:1383.80px;top:87.50px;font-size:14.8px;line-height:14.8px;color:#f4f4f4;transform:scaleX(1.2500);">93.73</span><span class="t" style="left:1451.70px;top:87.50px;font-size:14.8px;line-height:14.8px;color:#f4f4f4;transform:scaleX(1.2500);">167.77</span><span class="t" style="left:1556.30px;top:87.50px;font-size:14.8px;line-height:14.8px;color:#f4f4f4;transform:scaleX(1.2500);">309.62</span><span class="t" style="left:1669.10px;top:87.50px;font-size:14.8px;line-height:14.8px;color:#f4f4f4;transform:scaleX(1.2500);">215.07</span><span class="t" style="left:1737.70px;top:87.50px;font-size:14.8px;line-height:14.8px;color:#f4f4f4;transform:scaleX(1.2500);">77.76</span><span class="t" style="left:1854.10px;top:87.50px;font-size:14.8px;line-height:14.8px;color:#f4f4f4;transform:scaleX(1.2500);">137.69</span><span class="t" style="left:567.50px;top:111.11px;font-size:14.9px;line-height:14.9px;color:#f6f6f6;font-weight:700;transform:scaleX(1.2787);">Target x:CIE31</span><span class="t" style="left:721.30px;top:111.19px;font-size:14.8px;line-height:14.8px;color:#f4f4f4;transform:scaleX(1.2500);">0.31</span><span class="t" style="left:788.80px;top:111.19px;font-size:14.8px;line-height:14.8px;color:#f4f4f4;transform:scaleX(1.2500);">0.31</span><span class="t" style="left:860.80px;top:111.19px;font-size:14.8px;line-height:14.8px;color:#f4f4f4;transform:scaleX(1.2500);">0.31</span><span class="t" style="left:932.50px;top:111.19px;font-size:14.8px;line-height:14.8px;color:#f4f4f4;transform:scaleX(1.2500);">0.31</span><span class="t" style="left:1004.20px;top:111.19px;font-size:14.8px;line-height:14.8px;color:#f4f4f4;transform:scaleX(1.2500);">0.31</span><span class="t" style="left:1077.00px;top:111.19px;font-size:14.8px;line-height:14.8px;color:#f4f4f4;transform:scaleX(1.2500);">0.31</span><span class="t" style="left:1133.60px;top:111.19px;font-size:14.8px;line-height:14.8px;color:#f4f4f4;transform:scaleX(1.2500);">0.40</span><span class="t" style="left:1219.40px;top:111.19px;font-size:14.8px;line-height:14.8px;color:#f4f4f4;transform:scaleX(1.2500);">0.38</span><span class="t" style="left:1306.20px;top:111.19px;font-size:14.8px;line-height:14.8px;color:#000;transform:scaleX(1.2500);">0.25</span><span class="t" style="left:1383.80px;top:111.19px;font-size:14.8px;line-height:14.8px;color:#f4f4f4;transform:scaleX(1.2500);">0.34</span><span class="t" style="left:1451.70px;top:111.19px;font-size:14.8px;line-height:14.8px;color:#f4f4f4;transform:scaleX(1.2500);">0.27</span><span class="t" style="left:1556.30px;top:111.19px;font-size:14.8px;line-height:14.8px;color:#f4f4f4;transform:scaleX(1.2500);">0.26</span><span class="t" style="left:1669.10px;top:111.19px;font-size:14.8px;line-height:14.8px;color:#f4f4f4;transform:scaleX(1.2500);">0.51</span><span class="t" style="left:1737.70px;top:111.19px;font-size:14.8px;line-height:14.8px;color:#f4f4f4;transform:scaleX(1.2500);">0.22</span><span class="t" style="left:1854.10px;top:111.19px;font-size:14.8px;line-height:14.8px;color:#f4f4f4;transform:scaleX(1.2500);">0.46</span><span class="t" style="left:567.50px;top:134.80px;font-size:14.9px;line-height:14.9px;color:#f6f6f6;font-weight:700;transform:scaleX(1.2787);">Target y:CIE31</span><span class="t" style="left:721.30px;top:134.88px;font-size:14.8px;line-height:14.8px;color:#f4f4f4;transform:scaleX(1.2500);">0.33</span><span class="t" style="left:788.80px;top:134.88px;font-size:14.8px;line-height:14.8px;color:#f4f4f4;transform:scaleX(1.2500);">0.33</span><span class="t" style="left:860.80px;top:134.88px;font-size:14.8px;line-height:14.8px;color:#f4f4f4;transform:scaleX(1.2500);">0.33</span><span class="t" style="left:932.50px;top:134.88px;font-size:14.8px;line-height:14.8px;color:#f4f4f4;transform:scaleX(1.2500);">0.33</span><span class="t" style="left:1004.20px;top:134.88px;font-size:14.8px;line-height:14.8px;color:#f4f4f4;transform:scaleX(1.2500);">0.33</span><span class="t" style="left:1077.00px;top:134.88px;font-size:14.8px;line-height:14.8px;color:#f4f4f4;transform:scaleX(1.2500);">0.33</span><span class="t" style="left:1133.60px;top:134.88px;font-size:14.8px;line-height:14.8px;color:#f4f4f4;transform:scaleX(1.2500);">0.36</span><span class="t" style="left:1219.40px;top:134.88px;font-size:14.8px;line-height:14.8px;color:#f4f4f4;transform:scaleX(1.2500);">0.36</span><span class="t" style="left:1306.20px;top:134.88px;font-size:14.8px;line-height:14.8px;color:#f4f4f4;transform:scaleX(1.2500);">0.27</span><span class="t" style="left:1383.80px;top:134.88px;font-size:14.8px;line-height:14.8px;color:#f4f4f4;transform:scaleX(1.2500);">0.43</span><span class="t" style="left:1451.70px;top:134.88px;font-size:14.8px;line-height:14.8px;color:#f4f4f4;transform:scaleX(1.2500);">0.25</span><span class="t" style="left:1556.30px;top:134.88px;font-size:14.8px;line-height:14.8px;color:#f4f4f4;transform:scaleX(1.2500);">0.36</span><span class="t" style="left:1669.10px;top:134.88px;font-size:14.8px;line-height:14.8px;color:#f4f4f4;transform:scaleX(1.2500);">0.41</span><span class="t" style="left:1737.70px;top:134.88px;font-size:14.8px;line-height:14.8px;color:#f4f4f4;transform:scaleX(1.2500);">0.19</span><span class="t" style="left:1854.10px;top:134.88px;font-size:14.8px;line-height:14.8px;color:#f4f4f4;transform:scaleX(1.2500);">0.31</span><span class="t" style="left:567.50px;top:158.49px;font-size:14.9px;line-height:14.9px;color:#f6f6f6;font-weight:700;transform:scaleX(1.3135);">Target Y</span><span class="t" style="left:721.30px;top:158.57px;font-size:14.8px;line-height:14.8px;color:#f4f4f4;transform:scaleX(1.2500);">923.29</span><span class="t" style="left:788.80px;top:158.57px;font-size:14.8px;line-height:14.8px;color:#f4f4f4;transform:scaleX(1.2500);">730.60</span><span class="t" style="left:860.80px;top:158.57px;font-size:14.8px;line-height:14.8px;color:#f4f4f4;transform:scaleX(1.2500);">588.69</span><span class="t" style="left:932.50px;top:158.57px;font-size:14.8px;line-height:14.8px;color:#f4f4f4;transform:scaleX(1.2500);">453.35</span><span class="t" style="left:1004.20px;top:158.57px;font-size:14.8px;line-height:14.8px;color:#f4f4f4;transform:scaleX(1.2500);">315.69</span><span class="t" style="left:1077.00px;top:158.57px;font-size:14.8px;line-height:14.8px;color:#f4f4f4;transform:scaleX(1.2500);">0.00</span><span class="t" style="left:1133.60px;top:158.57px;font-size:14.8px;line-height:14.8px;color:#f4f4f4;transform:scaleX(1.2500);">93.01</span><span class="t" style="left:1219.40px;top:158.57px;font-size:14.8px;line-height:14.8px;color:#f4f4f4;transform:scaleX(1.2500);">322.18</span><span class="t" style="left:1306.20px;top:158.57px;font-size:14.8px;line-height:14.8px;color:#f4f4f4;transform:scaleX(1.2500);">172.64</span><span class="t" style="left:1383.80px;top:158.57px;font-size:14.8px;line-height:14.8px;color:#f4f4f4;transform:scaleX(1.2500);">120.33</span><span class="t" style="left:1451.70px;top:158.57px;font-size:14.8px;line-height:14.8px;color:#f4f4f4;transform:scaleX(1.2500);">215.30</span><span class="t" style="left:1556.30px;top:158.57px;font-size:14.8px;line-height:14.8px;color:#f4f4f4;transform:scaleX(1.2500);">386.61</span><span class="t" style="left:1669.10px;top:158.57px;font-size:14.8px;line-height:14.8px;color:#f4f4f4;transform:scaleX(1.2500);">261.73</span><span class="t" style="left:1737.70px;top:158.57px;font-size:14.8px;line-height:14.8px;color:#f4f4f4;transform:scaleX(1.2500);">108.52</span><span class="t" style="left:1854.10px;top:158.57px;font-size:14.8px;line-height:14.8px;color:#f4f4f4;transform:scaleX(1.2500);">172.43</span><span class="t" style="left:567.50px;top:182.18px;font-size:14.9px;line-height:14.9px;color:#f6f6f6;font-weight:700;transform:scaleX(1.3032);">ΔE 2000</span><span class="t" style="left:721.30px;top:182.26px;font-size:14.8px;line-height:14.8px;color:#f4f4f4;transform:scaleX(1.2500);">1.09</span><span class="t" style="left:788.80px;top:182.26px;font-size:14.8px;line-height:14.8px;color:#f4f4f4;transform:scaleX(1.2500);">2.78</span><span class="t" style="left:860.80px;top:182.26px;font-size:14.8px;line-height:14.8px;color:#f4f4f4;transform:scaleX(1.2500);">3.33</span><span class="t" style="left:932.50px;top:182.26px;font-size:14.8px;line-height:14.8px;color:#f4f4f4;transform:scaleX(1.2500);">4.76</span><span class="t" style="left:1004.20px;top:182.26px;font-size:14.8px;line-height:14.8px;color:#f4f4f4;transform:scaleX(1.2500);">5.05</span><span class="t" style="left:1077.00px;top:182.26px;font-size:14.8px;line-height:14.8px;color:#f4f4f4;transform:scaleX(1.2500);">0.10</span><span class="t" style="left:1133.60px;top:182.26px;font-size:14.8px;line-height:14.8px;color:#f4f4f4;transform:scaleX(1.2500);">3.94</span><span class="t" style="left:1219.40px;top:182.26px;font-size:14.8px;line-height:14.8px;color:#f4f4f4;transform:scaleX(1.2500);">4.83</span><span class="t" style="left:1306.20px;top:182.26px;font-size:14.8px;line-height:14.8px;color:#f4f4f4;transform:scaleX(1.2500);">5.76</span><span class="t" style="left:1383.80px;top:182.26px;font-size:14.8px;line-height:14.8px;color:#f4f4f4;transform:scaleX(1.2500);">4.18</span><span class="t" style="left:1451.70px;top:182.26px;font-size:14.8px;line-height:14.8px;color:#f4f4f4;transform:scaleX(1.2500);">5.62</span><span class="t" style="left:1556.30px;top:182.26px;font-size:14.8px;line-height:14.8px;color:#f4f4f4;transform:scaleX(1.2500);">4.93</span><span class="t" style="left:1669.10px;top:182.26px;font-size:14.8px;line-height:14.8px;color:#f4f4f4;transform:scaleX(1.2500);">4.42</span><span class="t" style="left:1737.70px;top:182.26px;font-size:14.8px;line-height:14.8px;color:#f4f4f4;transform:scaleX(1.2500);">5.15</span><span class="t" style="left:1854.10px;top:182.26px;font-size:14.8px;line-height:14.8px;color:#f4f4f4;transform:scaleX(1.2500);">5.16</span><span class="t" style="left:567.50px;top:205.87px;font-size:14.9px;line-height:14.9px;color:#f6f6f6;font-weight:700;transform:scaleX(1.2508);">ΔE ITP</span><span class="t" style="left:721.30px;top:205.95px;font-size:14.8px;line-height:14.8px;color:#f4f4f4;transform:scaleX(1.2500);">0.84</span><span class="t" style="left:788.80px;top:205.95px;font-size:14.8px;line-height:14.8px;color:#f4f4f4;transform:scaleX(1.2500);">9.41</span><span class="t" style="left:860.80px;top:205.95px;font-size:14.8px;line-height:14.8px;color:#f4f4f4;transform:scaleX(1.2500);">11.65</span><span class="t" style="left:932.50px;top:205.95px;font-size:14.8px;line-height:14.8px;color:#f4f4f4;transform:scaleX(1.2500);">14.59</span><span class="t" style="left:1004.20px;top:205.95px;font-size:14.8px;line-height:14.8px;color:#f4f4f4;transform:scaleX(1.2500);">16.73</span><span class="t" style="left:1077.00px;top:205.95px;font-size:14.8px;line-height:14.8px;color:#f4f4f4;transform:scaleX(1.2500);">42.58</span><span class="t" style="left:1133.60px;top:205.95px;font-size:14.8px;line-height:14.8px;color:#f4f4f4;transform:scaleX(1.2500);">19.58</span><span class="t" style="left:1219.40px;top:205.95px;font-size:14.8px;line-height:14.8px;color:#f4f4f4;transform:scaleX(1.2500);">16.98</span><span class="t" style="left:1306.20px;top:205.95px;font-size:14.8px;line-height:14.8px;color:#f4f4f4;transform:scaleX(1.2500);">20.70</span><span class="t" style="left:1383.80px;top:205.95px;font-size:14.8px;line-height:14.8px;color:#f4f4f4;transform:scaleX(1.2500);">18.85</span><span class="t" style="left:1451.70px;top:205.95px;font-size:14.8px;line-height:14.8px;color:#f4f4f4;transform:scaleX(1.2500);">18.68</span><span class="t" style="left:1556.30px;top:205.95px;font-size:14.8px;line-height:14.8px;color:#f4f4f4;transform:scaleX(1.2500);">17.38</span><span class="t" style="left:1669.10px;top:205.95px;font-size:14.8px;line-height:14.8px;color:#f4f4f4;transform:scaleX(1.2500);">16.90</span><span class="t" style="left:1737.70px;top:205.95px;font-size:14.8px;line-height:14.8px;color:#f4f4f4;transform:scaleX(1.2500);">24.03</span><span class="t" style="left:1854.10px;top:205.95px;font-size:14.8px;line-height:14.8px;color:#f4f4f4;transform:scaleX(1.2500);">18.55</span></div>
<div class="a " style="left:551.3px;top:983.3px;width:1366.2px;height:14.7px;background:#5a5a5a"></div>
<div class="a " style="left:553px;top:984.3px;width:12.5px;height:12.5px;background:#8a8a8a;border-radius:3px"></div>
<div class="a " style="left:1900.5px;top:984.3px;width:12.5px;height:12.5px;background:#8a8a8a;border-radius:3px"></div>
<svg style="left:556px;top:986.500px" width="7" height="9" viewBox="0 0 7 9"><path d="M6.500 0v9L0 4.500z" fill="#333"/></svg>
<svg style="left:1904px;top:986.500px" width="7" height="9" viewBox="0 0 7 9"><path d="M0.500 0v9L7 4.500z" fill="#333"/></svg>
<div class="a " style="left:573.5px;top:985px;width:650px;height:11.6px;background:#3e3e3e;border-radius:6px"></div>
<div class="a" style="left:226.500px;top:1070px;width:1329px;height:76px;overflow:hidden"><div class="a" style="left:-14.42px;top:6px;width:56.4px;height:55px;background:linear-gradient(180deg,#a6a6a6 0,#909090 45%,#6a6a6a 100%);border-radius:5px;border:1px solid rgba(70,70,70,.55)"></div><div class="a" style="left:-7.82px;top:12.3px;width:43.6px;height:26.4px;background:#d8a890;border-radius:4px;box-shadow:inset 1.500px 2px 1.500px rgba(0,0,0,.32)"></div><span class="t" style="left:-14.22px;top:47.11px;font-size:11.8px;line-height:11.8px;color:#2c2c2c;transform:scaleX(1.0806);-webkit-text-stroke:.45px #2c2c2c;">Light Skin</span><div class="a" style="left:44.1px;top:6px;width:56.4px;height:55px;background:linear-gradient(180deg,#a6a6a6 0,#909090 45%,#6a6a6a 100%);border-radius:5px;border:1px solid rgba(70,70,70,.55)"></div><div class="a" style="left:50.7px;top:12.3px;width:43.6px;height:26.4px;background:#5e7ea8;border-radius:4px;box-shadow:inset 1.500px 2px 1.500px rgba(0,0,0,.32)"></div><span class="t" style="left:48.80px;top:47.11px;font-size:11.8px;line-height:11.8px;color:#2c2c2c;transform:scaleX(1.0093);-webkit-text-stroke:.45px #2c2c2c;">Blue Sky</span><div class="a" style="left:102.62px;top:6px;width:56.4px;height:55px;background:linear-gradient(180deg,#a6a6a6 0,#909090 45%,#6a6a6a 100%);border-radius:5px;border:1px solid rgba(70,70,70,.55)"></div><div class="a" style="left:109.22px;top:12.3px;width:43.6px;height:26.4px;background:#587042;border-radius:4px;box-shadow:inset 1.500px 2px 1.500px rgba(0,0,0,.32)"></div><span class="t" style="left:110.82px;top:47.11px;font-size:11.8px;line-height:11.8px;color:#2c2c2c;transform:scaleX(1.0335);-webkit-text-stroke:.45px #2c2c2c;">Foliage</span><div class="a" style="left:161.14px;top:6px;width:56.4px;height:55px;background:linear-gradient(180deg,#a6a6a6 0,#909090 45%,#6a6a6a 100%);border-radius:5px;border:1px solid rgba(70,70,70,.55)"></div><div class="a" style="left:167.74px;top:12.3px;width:43.6px;height:13.2px;background:#8a86ba;border-radius:4px;box-shadow:inset 1.500px 2px 1.500px rgba(0,0,0,.32)"></div><span class="t" style="left:170.34px;top:33.61px;font-size:11.8px;line-height:11.8px;color:#2c2c2c;transform:scaleX(1.0373);-webkit-text-stroke:.45px #2c2c2c;">Blue</span><span class="t" style="left:170.34px;top:47.11px;font-size:11.8px;line-height:11.8px;color:#2c2c2c;transform:scaleX(1.0732);-webkit-text-stroke:.45px #2c2c2c;">Flower</span><div class="a" style="left:219.66px;top:6px;width:56.4px;height:55px;background:linear-gradient(180deg,#a6a6a6 0,#909090 45%,#6a6a6a 100%);border-radius:5px;border:1px solid rgba(70,70,70,.55)"></div><div class="a" style="left:226.26px;top:12.3px;width:43.6px;height:13.2px;background:#64c4ac;border-radius:4px;box-shadow:inset 1.500px 2px 1.500px rgba(0,0,0,.32)"></div><span class="t" style="left:230.61px;top:33.61px;font-size:11.8px;line-height:11.8px;color:#2c2c2c;transform:scaleX(1.0579);-webkit-text-stroke:.45px #2c2c2c;">Bluish</span><span class="t" style="left:230.61px;top:47.11px;font-size:11.8px;line-height:11.8px;color:#2c2c2c;transform:scaleX(1.0519);-webkit-text-stroke:.45px #2c2c2c;">Green</span><div class="a" style="left:278.18px;top:6px;width:56.4px;height:55px;background:linear-gradient(180deg,#a6a6a6 0,#909090 45%,#6a6a6a 100%);border-radius:5px;border:1px solid rgba(70,70,70,.55)"></div><div class="a" style="left:284.78px;top:12.3px;width:43.6px;height:26.4px;background:#de7a26;border-radius:4px;box-shadow:inset 1.500px 2px 1.500px rgba(0,0,0,.32)"></div><span class="t" style="left:286.13px;top:47.11px;font-size:11.8px;line-height:11.8px;color:#2c2c2c;transform:scaleX(1.0290);-webkit-text-stroke:.45px #2c2c2c;">Orange</span><div class="a" style="left:336.7px;top:6px;width:56.4px;height:55px;background:linear-gradient(180deg,#a6a6a6 0,#909090 45%,#6a6a6a 100%);border-radius:5px;border:1px solid rgba(70,70,70,.55)"></div><div class="a" style="left:343.3px;top:12.3px;width:43.6px;height:13.2px;background:#4458b0;border-radius:4px;box-shadow:inset 1.500px 2px 1.500px rgba(0,0,0,.32)"></div><span class="t" style="left:342.15px;top:33.61px;font-size:11.8px;line-height:11.8px;color:#2c2c2c;transform:scaleX(1.0672);-webkit-text-stroke:.45px #2c2c2c;">Purplish</span><span class="t" style="left:342.15px;top:47.11px;font-size:11.8px;line-height:11.8px;color:#2c2c2c;transform:scaleX(1.0373);-webkit-text-stroke:.45px #2c2c2c;">Blue</span><div class="a" style="left:395.22px;top:6px;width:56.4px;height:55px;background:linear-gradient(180deg,#a6a6a6 0,#909090 45%,#6a6a6a 100%);border-radius:5px;border:1px solid rgba(70,70,70,.55)"></div><div class="a" style="left:401.82px;top:12.3px;width:43.6px;height:13.2px;background:#cc5664;border-radius:4px;box-shadow:inset 1.500px 2px 1.500px rgba(0,0,0,.32)"></div><span class="t" style="left:396.42px;top:33.61px;font-size:11.8px;line-height:11.8px;color:#2c2c2c;transform:scaleX(1.1033);-webkit-text-stroke:.45px #2c2c2c;">Moderate</span><span class="t" style="left:396.42px;top:47.11px;font-size:11.8px;line-height:11.8px;color:#2c2c2c;transform:scaleX(0.9701);-webkit-text-stroke:.45px #2c2c2c;">Red</span><div class="a" style="left:453.74px;top:6px;width:56.4px;height:55px;background:linear-gradient(180deg,#a6a6a6 0,#909090 45%,#6a6a6a 100%);border-radius:5px;border:1px solid rgba(70,70,70,.55)"></div><div class="a" style="left:460.34px;top:12.3px;width:43.6px;height:26.4px;background:#5c3a70;border-radius:4px;box-shadow:inset 1.500px 2px 1.500px rgba(0,0,0,.32)"></div><span class="t" style="left:463.69px;top:47.11px;font-size:11.8px;line-height:11.8px;color:#2c2c2c;transform:scaleX(1.0700);-webkit-text-stroke:.45px #2c2c2c;">Purple</span><div class="a" style="left:512.26px;top:6px;width:56.4px;height:55px;background:linear-gradient(180deg,#a6a6a6 0,#909090 45%,#6a6a6a 100%);border-radius:5px;border:1px solid rgba(70,70,70,.55)"></div><div class="a" style="left:518.86px;top:12.3px;width:43.6px;height:13.2px;background:#a6c63e;border-radius:4px;box-shadow:inset 1.500px 2px 1.500px rgba(0,0,0,.32)"></div><span class="t" style="left:521.96px;top:33.61px;font-size:11.8px;line-height:11.8px;color:#2c2c2c;transform:scaleX(1.0986);-webkit-text-stroke:.45px #2c2c2c;">Yellow</span><span class="t" style="left:521.96px;top:47.11px;font-size:11.8px;line-height:11.8px;color:#2c2c2c;transform:scaleX(1.0519);-webkit-text-stroke:.45px #2c2c2c;">Green</span><div class="a" style="left:570.78px;top:6px;width:56.4px;height:55px;background:linear-gradient(180deg,#a6a6a6 0,#909090 45%,#6a6a6a 100%);border-radius:5px;border:1px solid rgba(70,70,70,.55)"></div><div class="a" style="left:577.38px;top:12.3px;width:43.6px;height:13.2px;background:#eaa62e;border-radius:4px;box-shadow:inset 1.500px 2px 1.500px rgba(0,0,0,.32)"></div><span class="t" style="left:578.73px;top:33.61px;font-size:11.8px;line-height:11.8px;color:#2c2c2c;transform:scaleX(1.0290);-webkit-text-stroke:.45px #2c2c2c;">Orange</span><span class="t" style="left:578.73px;top:47.11px;font-size:11.8px;line-height:11.8px;color:#2c2c2c;transform:scaleX(1.0986);-webkit-text-stroke:.45px #2c2c2c;">Yellow</span><div class="a" style="left:629.3px;top:6px;width:56.4px;height:55px;background:linear-gradient(180deg,#a6a6a6 0,#909090 45%,#6a6a6a 100%);border-radius:5px;border:1px solid rgba(70,70,70,.55)"></div><div class="a" style="left:635.9px;top:12.3px;width:43.6px;height:26.4px;background:#3440aa;border-radius:4px;box-shadow:inset 1.500px 2px 1.500px rgba(0,0,0,.32)"></div><span class="t" style="left:645.25px;top:47.11px;font-size:11.8px;line-height:11.8px;color:#2c2c2c;transform:scaleX(1.0373);-webkit-text-stroke:.45px #2c2c2c;">Blue</span><div class="a" style="left:687.82px;top:6px;width:56.4px;height:55px;background:linear-gradient(180deg,#a6a6a6 0,#909090 45%,#6a6a6a 100%);border-radius:5px;border:1px solid rgba(70,70,70,.55)"></div><div class="a" style="left:694.42px;top:12.3px;width:43.6px;height:26.4px;background:#489648;border-radius:4px;box-shadow:inset 1.500px 2px 1.500px rgba(0,0,0,.32)"></div><span class="t" style="left:698.77px;top:47.11px;font-size:11.8px;line-height:11.8px;color:#2c2c2c;transform:scaleX(1.0519);-webkit-text-stroke:.45px #2c2c2c;">Green</span><div class="a" style="left:746.34px;top:6px;width:56.4px;height:55px;background:linear-gradient(180deg,#a6a6a6 0,#909090 45%,#6a6a6a 100%);border-radius:5px;border:1px solid rgba(70,70,70,.55)"></div><div class="a" style="left:752.94px;top:12.3px;width:43.6px;height:26.4px;background:#b42e3a;border-radius:4px;box-shadow:inset 1.500px 2px 1.500px rgba(0,0,0,.32)"></div><span class="t" style="left:764.04px;top:47.11px;font-size:11.8px;line-height:11.8px;color:#2c2c2c;transform:scaleX(0.9701);-webkit-text-stroke:.45px #2c2c2c;">Red</span><div class="a" style="left:804.86px;top:6px;width:56.4px;height:55px;background:linear-gradient(180deg,#a6a6a6 0,#909090 45%,#6a6a6a 100%);border-radius:5px;border:1px solid rgba(70,70,70,.55)"></div><div class="a" style="left:811.46px;top:12.3px;width:43.6px;height:26.4px;background:#f0c826;border-radius:4px;box-shadow:inset 1.500px 2px 1.500px rgba(0,0,0,.32)"></div><span class="t" style="left:814.56px;top:47.11px;font-size:11.8px;line-height:11.8px;color:#2c2c2c;transform:scaleX(1.0986);-webkit-text-stroke:.45px #2c2c2c;">Yellow</span><div class="a" style="left:863.38px;top:6px;width:56.4px;height:55px;background:linear-gradient(180deg,#a6a6a6 0,#909090 45%,#6a6a6a 100%);border-radius:5px;border:1px solid rgba(70,70,70,.55)"></div><div class="a" style="left:869.98px;top:12.3px;width:43.6px;height:26.4px;background:#c0589a;border-radius:4px;box-shadow:inset 1.500px 2px 1.500px rgba(0,0,0,.32)"></div><span class="t" style="left:866.83px;top:47.11px;font-size:11.8px;line-height:11.8px;color:#2c2c2c;transform:scaleX(1.0779);-webkit-text-stroke:.45px #2c2c2c;">Magenta</span><div class="a" style="left:921.9px;top:6px;width:56.4px;height:55px;background:linear-gradient(180deg,#a6a6a6 0,#909090 45%,#6a6a6a 100%);border-radius:5px;border:1px solid rgba(70,70,70,.55)"></div><div class="a" style="left:928.5px;top:12.3px;width:43.6px;height:26.4px;background:#0090b0;border-radius:4px;box-shadow:inset 1.500px 2px 1.500px rgba(0,0,0,.32)"></div><span class="t" style="left:936.35px;top:47.11px;font-size:11.8px;line-height:11.8px;color:#2c2c2c;-webkit-text-stroke:.45px #2c2c2c;">Cyan</span><div class="a" style="left:980.42px;top:6px;width:56.4px;height:55px;background:linear-gradient(180deg,#a6a6a6 0,#909090 45%,#6a6a6a 100%);border-radius:5px;border:1px solid rgba(70,70,70,.55)"></div><div class="a" style="left:987.02px;top:12.3px;width:43.6px;height:26.4px;background:#ff0000;border-radius:4px;box-shadow:inset 1.500px 2px 1.500px rgba(0,0,0,.32)"></div><span class="t" style="left:981.37px;top:47.11px;font-size:11.8px;line-height:11.8px;color:#2c2c2c;transform:scaleX(0.9890);-webkit-text-stroke:.45px #2c2c2c;">100% Red</span><div class="a" style="left:1038.94px;top:6px;width:56.4px;height:55px;background:linear-gradient(180deg,#a6a6a6 0,#909090 45%,#6a6a6a 100%);border-radius:5px;border:1px solid rgba(70,70,70,.55)"></div><div class="a" style="left:1045.54px;top:12.3px;width:43.6px;height:13.2px;background:#00ff00;border-radius:4px;box-shadow:inset 1.500px 2px 1.500px rgba(0,0,0,.32)"></div><span class="t" style="left:1049.89px;top:33.61px;font-size:11.8px;line-height:11.8px;color:#2c2c2c;transform:scaleX(0.9940);-webkit-text-stroke:.45px #2c2c2c;">100%</span><span class="t" style="left:1049.89px;top:47.11px;font-size:11.8px;line-height:11.8px;color:#2c2c2c;transform:scaleX(1.0519);-webkit-text-stroke:.45px #2c2c2c;">Green</span><div class="a" style="left:1097.46px;top:6px;width:56.4px;height:55px;background:linear-gradient(180deg,#a6a6a6 0,#909090 45%,#6a6a6a 100%);border-radius:5px;border:1px solid rgba(70,70,70,.55)"></div><div class="a" style="left:1104.06px;top:12.3px;width:43.6px;height:13.2px;background:#0000ff;border-radius:4px;box-shadow:inset 1.500px 2px 1.500px rgba(0,0,0,.32)"></div><span class="t" style="left:1110.66px;top:33.61px;font-size:11.8px;line-height:11.8px;color:#2c2c2c;transform:scaleX(0.9940);-webkit-text-stroke:.45px #2c2c2c;">100%</span><span class="t" style="left:1110.66px;top:47.11px;font-size:11.8px;line-height:11.8px;color:#2c2c2c;transform:scaleX(1.0373);-webkit-text-stroke:.45px #2c2c2c;">Blue</span><div class="a" style="left:1155.98px;top:6px;width:56.4px;height:55px;background:linear-gradient(180deg,#a6a6a6 0,#909090 45%,#6a6a6a 100%);border-radius:5px;border:1px solid rgba(70,70,70,.55)"></div><div class="a" style="left:1162.58px;top:12.3px;width:43.6px;height:13.2px;background:#00ffff;border-radius:4px;box-shadow:inset 1.500px 2px 1.500px rgba(0,0,0,.32)"></div><span class="t" style="left:1169.18px;top:33.61px;font-size:11.8px;line-height:11.8px;color:#2c2c2c;transform:scaleX(0.9940);-webkit-text-stroke:.45px #2c2c2c;">100%</span><span class="t" style="left:1169.18px;top:47.11px;font-size:11.8px;line-height:11.8px;color:#2c2c2c;-webkit-text-stroke:.45px #2c2c2c;">Cyan</span><div class="a" style="left:1214.5px;top:6px;width:56.4px;height:55px;background:linear-gradient(180deg,#a6a6a6 0,#909090 45%,#6a6a6a 100%);border-radius:5px;border:1px solid rgba(70,70,70,.55)"></div><div class="a" style="left:1221.1px;top:12.3px;width:43.6px;height:13.2px;background:#ff00ff;border-radius:4px;box-shadow:inset 1.500px 2px 1.500px rgba(0,0,0,.32)"></div><span class="t" style="left:1217.50px;top:33.61px;font-size:11.8px;line-height:11.8px;color:#2c2c2c;transform:scaleX(0.9940);-webkit-text-stroke:.45px #2c2c2c;">100%</span><span class="t" style="left:1217.50px;top:47.11px;font-size:11.8px;line-height:11.8px;color:#2c2c2c;transform:scaleX(1.0779);-webkit-text-stroke:.45px #2c2c2c;">Magenta</span><div class="a" style="left:1273.02px;top:6px;width:56.4px;height:55px;background:linear-gradient(180deg,#1c1c1c,#262626 60%,#3a3a3a);border-radius:5px;border:1px solid #222"></div><div class="a" style="left:1279.62px;top:12.3px;width:43.6px;height:13.2px;background:#ffff00;border-radius:4px;box-shadow:inset 1.500px 2px 1.500px rgba(0,0,0,.32)"></div><span class="t" style="left:1281.47px;top:33.61px;font-size:11.8px;line-height:11.8px;color:#fff;font-weight:700;transform:scaleX(1.0603);">100%</span><span class="t" style="left:1281.47px;top:47.11px;font-size:11.8px;line-height:11.8px;color:#fff;font-weight:700;transform:scaleX(1.0755);">Yellow</span></div>
<div class="a " style="left:226.5px;top:1132px;width:1329px;height:14px;background:#5c5c5c"></div>
<div class="a " style="left:227px;top:1133px;width:12.5px;height:12.5px;background:#8a8a8a;border-radius:3px"></div>
<div class="a " style="left:1542px;top:1133px;width:12.5px;height:12.5px;background:#8a8a8a;border-radius:3px"></div>
<svg style="left:230px;top:1135px" width="7" height="9" viewBox="0 0 7 9"><path d="M6.500 0v9L0 4.500z" fill="#333"/></svg>
<svg style="left:1545px;top:1135px" width="7" height="9" viewBox="0 0 7 9"><path d="M0.500 0v9L7 4.500z" fill="#333"/></svg>
<div class="a " style="left:554.7px;top:1134px;width:986px;height:12px;background:#3e3e3e;border-radius:6px 6px 0 0"></div>
<div class="a " style="left:1556.8px;top:1076.4px;width:53.8px;height:20.4px;background:linear-gradient(180deg,#acacac 0,#949494 48%,#828282 52%,#8e8e8e 100%);border:1px solid #828282;border-top-color:#b0b0b0;border-radius:5px"></div>
<div class="a " style="left:1556.8px;top:1097.8px;width:53.8px;height:46.2px;background:linear-gradient(180deg,#acacac 0,#949494 48%,#828282 52%,#8e8e8e 100%);border:1px solid #828282;border-top-color:#b0b0b0;border-radius:5px"></div>
<div class="a " style="left:1573.5px;top:1077.5px;width:20px;height:17px;border-radius:50%;background:radial-gradient(circle at 50% 20%,#7a7a7a,#8c8c8c 70%,#9a9a9a)"></div>
<svg style="left:1578.500px;top:1082.500px" width="10" height="6" viewBox="0 0 10 6"><path d="M0 6h10L5 0z" fill="#2c2c2c"/></svg>
<div class="a " style="left:1566.6px;top:1103.5px;width:33.8px;height:34.5px;background:linear-gradient(180deg,#b4b4b4,#9a9a9a 50%,#8a8a8a 52%,#9c9c9c);border:2.500px solid #2a2a2a;border-radius:5px"></div>
<div class="a " style="left:1575.8px;top:1113.8px;width:15.8px;height:15px;background:#000"></div>
<div class="a " style="left:1611.5px;top:1075.8px;width:308.5px;height:68.4px;background:#3c3c3c;border-radius:4px"></div>
<div class="a " style="left:1612.4px;top:1076.4px;width:50.35px;height:33.8px;background:linear-gradient(180deg,#b0b0b0 0,#989898 50%,#868686 54%,#8c8c8c 100%);border-radius:4px 0 0 0"></div>
<div class="a " style="left:1627.08px;top:1081px;width:21px;height:21px;border-radius:50%;background:radial-gradient(circle at 50% 20%,#7c7c7c,#8c8c8c 70%,#9c9c9c)"></div>
<span class="t" style="left:1633.95px;top:1085.84px;font-size:12px;line-height:12px;color:#2a2a2a;">■</span>
<div class="a " style="left:1663.75px;top:1076.4px;width:49.75px;height:33.8px;background:linear-gradient(180deg,#b0b0b0 0,#989898 50%,#868686 54%,#8c8c8c 100%)"></div>
<div class="a " style="left:1678.12px;top:1081px;width:21px;height:21px;border-radius:50%;background:radial-gradient(circle at 50% 20%,#7c7c7c,#8c8c8c 70%,#9c9c9c)"></div>
<span class="t" style="left:1684.12px;top:1085.84px;font-size:12px;line-height:12px;color:#2a2a2a;">▶</span>
<div class="a " style="left:1714.5px;top:1076.4px;width:49.8px;height:33.8px;background:linear-gradient(180deg,#b0b0b0 0,#989898 50%,#868686 54%,#8c8c8c 100%)"></div>
<div class="a " style="left:1728.9px;top:1081px;width:21px;height:21px;border-radius:50%;background:radial-gradient(circle at 50% 20%,#7c7c7c,#8c8c8c 70%,#9c9c9c)"></div>
<span class="t" style="left:1733.29px;top:1087.54px;font-size:10px;line-height:10px;color:#2a2a2a;">[··]</span>
<div class="a " style="left:1765.3px;top:1076.4px;width:49.7px;height:33.8px;background:linear-gradient(180deg,#b0b0b0 0,#989898 50%,#868686 54%,#8c8c8c 100%)"></div>
<div class="a " style="left:1779.65px;top:1081px;width:21px;height:21px;border-radius:50%;background:radial-gradient(circle at 50% 20%,#7c7c7c,#8c8c8c 70%,#9c9c9c)"></div>
<span class="t" style="left:1785.87px;top:1085.84px;font-size:12px;line-height:12px;color:#2a2a2a;">∞</span>
<div class="a " style="left:1816px;top:1076.4px;width:49.9px;height:33.8px;background:linear-gradient(180deg,#4a4a4a,#3e3e3e)"></div>
<div class="a " style="left:1830.45px;top:1081px;width:21px;height:21px;border-radius:50%;background:radial-gradient(circle at 50% 20%,#2c2c2c,#363636 70%,#444)"></div>
<span class="t" style="left:1836.45px;top:1085.84px;font-size:12px;line-height:12px;color:#151515;">↻</span>
<div class="a " style="left:1866.9px;top:1076.4px;width:51.1px;height:33.8px;background:linear-gradient(180deg,#b0b0b0 0,#989898 50%,#868686 54%,#8c8c8c 100%);border-radius:0 4px 0 0"></div>
<div class="a " style="left:1881.95px;top:1081px;width:21px;height:21px;border-radius:50%;background:radial-gradient(circle at 50% 20%,#7c7c7c,#8c8c8c 70%,#9c9c9c)"></div>
<div class="a " style="left:1612.4px;top:1111.2px;width:152px;height:32.8px;background:linear-gradient(180deg,#a8a8a8 0,#929292 50%,#808080 54%,#8a8a8a 100%);border-radius:0 0 0 4px"></div>
<div class="a " style="left:1765.3px;top:1111.2px;width:153.7px;height:32.8px;background:linear-gradient(180deg,#a8a8a8 0,#929292 50%,#808080 54%,#8a8a8a 100%);border-radius:0 0 4px 0"></div>
<div class="a " style="left:1632.4px;top:1117.1px;width:22px;height:22px;border-radius:50%;background:radial-gradient(circle at 50% 20%,#787878,#8a8a8a 70%,#9c9c9c)"></div>
<div class="a " style="left:1876.2px;top:1117.1px;width:22px;height:22px;border-radius:50%;background:radial-gradient(circle at 50% 20%,#787878,#8a8a8a 70%,#9c9c9c)"></div>
<span class="t" style="left:1637.56px;top:1116.42px;font-size:21px;line-height:21px;color:#333;">«</span>
<span class="t" style="left:1881.36px;top:1116.42px;font-size:21px;line-height:21px;color:#333;">»</span>
<span class="t" style="left:1677.00px;top:1116.38px;font-size:24px;line-height:24px;color:#343434;transform:scaleX(1.0402);">Back</span>
<span class="t" style="left:1797.30px;top:1116.38px;font-size:24px;line-height:24px;color:#343434;transform:scaleX(1.1571);">Next</span>
<svg style="left:0;top:0" width="1920" height="1146" viewBox="0 0 1920 1146" fill="none" stroke-linejoin="round" stroke-linecap="round">
<g stroke="#f4eaea" stroke-opacity=".5" stroke-width="5.600"><path d="M1631 1084.500L1668.800 1091.200L1670.200 1114.500L1633 1116.500zM1633 1118.300L1656 1134.600L1697 1120.200L1672 1114.800"/></g>
<g stroke="#8a2632" stroke-opacity=".8" stroke-width="3"><path d="M1631 1084.500L1668.800 1091.200L1670.200 1114.500L1633 1116.500zM1633 1118.300L1656 1134.600L1697 1120.200L1672 1114.800"/></g>
<path d="M1641.800 1097.400L1653.400 1110.600L1673.600 1084.200" stroke="#f2f2f2" stroke-opacity=".6" stroke-width="6.500"/>
<path d="M1641.800 1097.400L1653.400 1110.600L1673.600 1084.200" stroke="#383838" stroke-opacity=".92" stroke-width="3.600"/>
</svg>
<span class="t" style="left:1675.50px;top:1092.22px;font-size:23.6px;line-height:23.6px;color:#8a2632;font-weight:700;transform:scaleX(1.0744);text-shadow:0 0 2px rgba(255,255,255,.8),0 0 2.500px rgba(255,255,255,.6);paint-order:stroke fill;-webkit-text-stroke:1.500px #8a2632;opacity:.8;">NOTEBOOK</span>
<span class="t" style="left:1824.00px;top:1092.22px;font-size:23.6px;line-height:23.6px;color:#2e2e2e;transform:scaleX(1.0591);text-shadow:0 0 2px rgba(255,255,255,.8),0 0 2.500px rgba(255,255,255,.6);paint-order:stroke fill;-webkit-text-stroke:.8px #2e2e2e;opacity:.9;">CHECK</span></body></html>
